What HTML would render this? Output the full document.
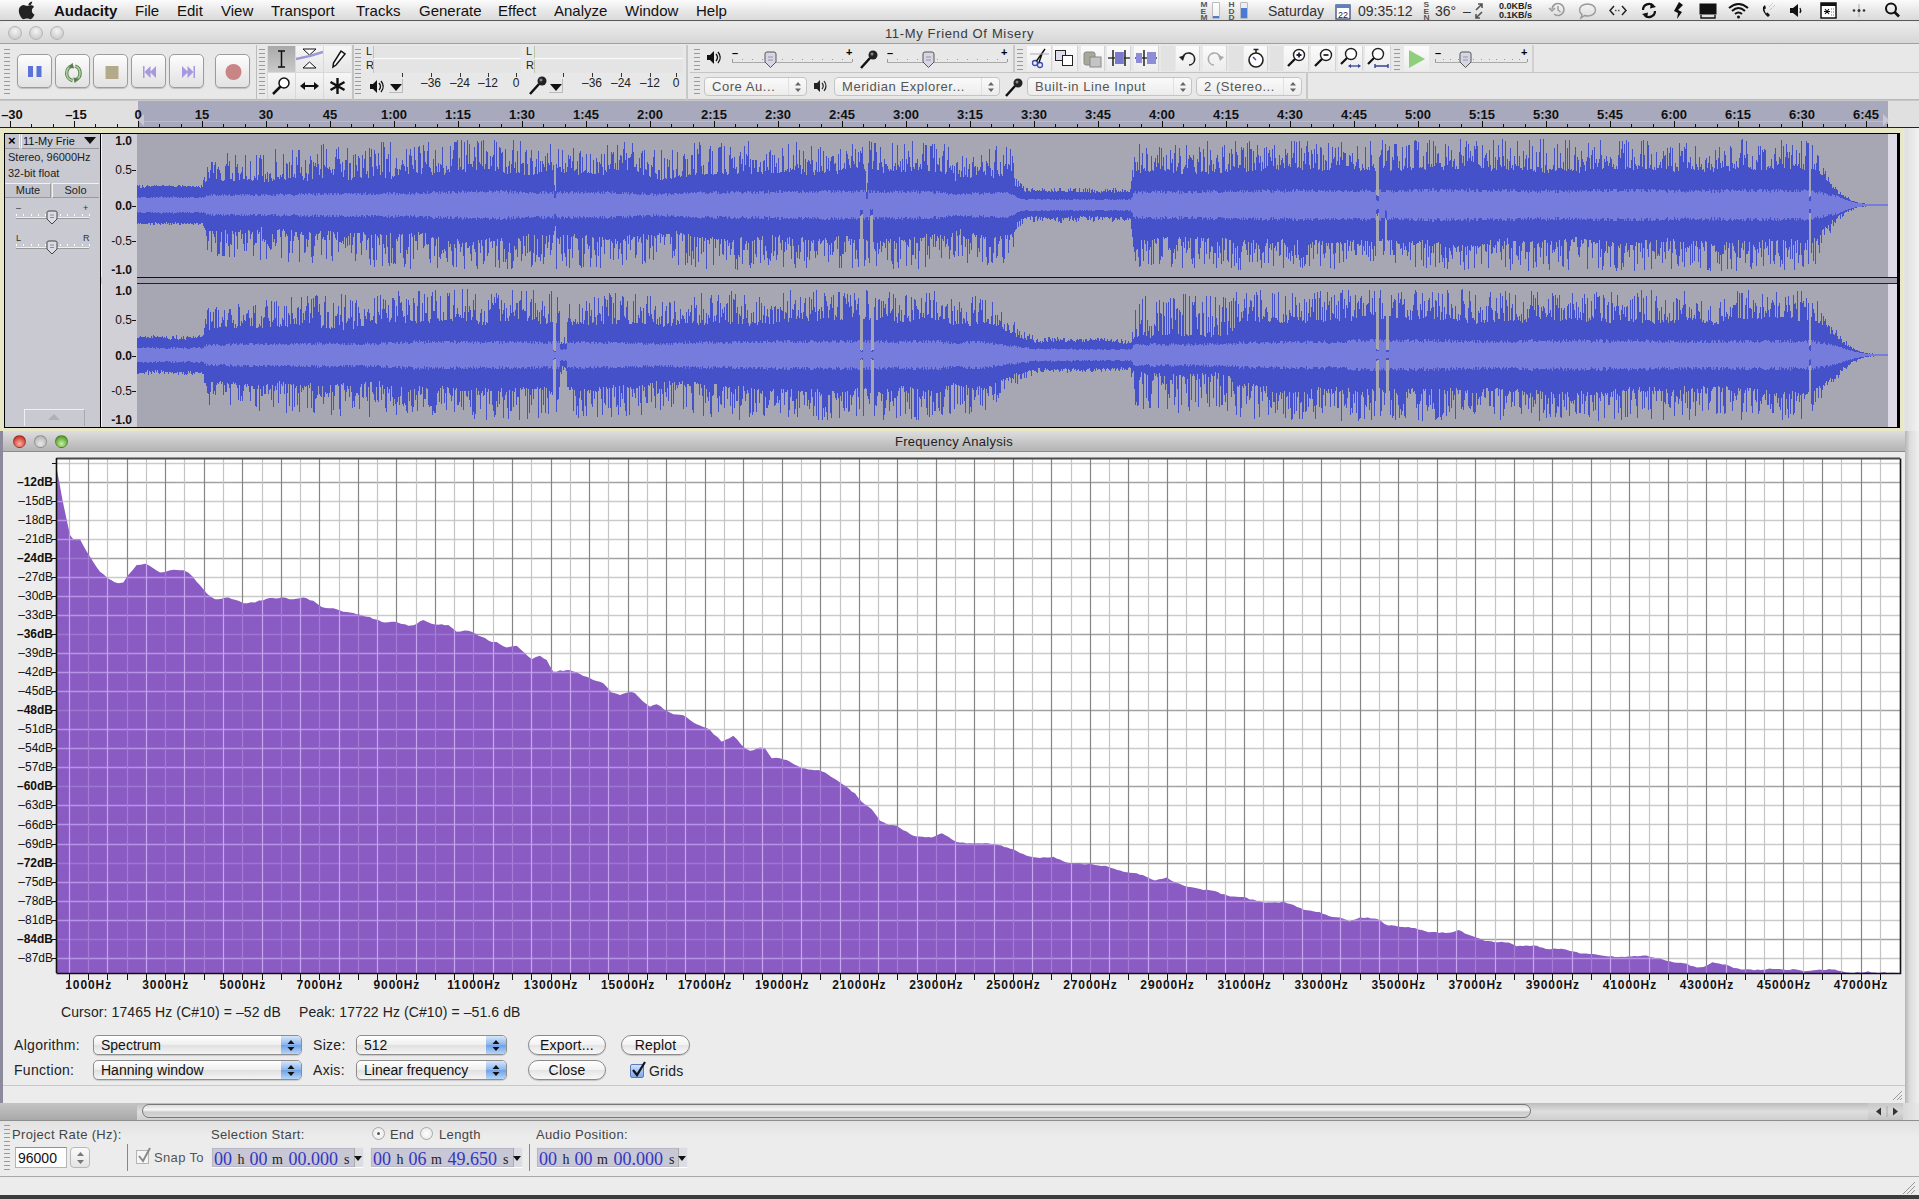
<!DOCTYPE html><html><head><meta charset="utf-8"><style>
*{margin:0;padding:0;box-sizing:border-box}
html,body{width:1919px;height:1199px;overflow:hidden;background:#e6e6e6;font-family:"Liberation Sans",sans-serif;color:#000}
.ab{position:absolute}
.t{position:absolute;white-space:nowrap;line-height:1}
</style></head><body><div class="ab" style="left:0;top:0;width:1919px;height:21px;background:linear-gradient(#fbfbfb,#e9e9e9 50%,#dadada);border-bottom:1px solid #5a5a5a"></div><div class="t" style="left:54px;top:3px;font-size:15px;font-weight:bold;color:#111">Audacity</div><div class="t" style="left:135px;top:3px;font-size:15px;color:#111">File</div><div class="t" style="left:177px;top:3px;font-size:15px;color:#111">Edit</div><div class="t" style="left:221px;top:3px;font-size:15px;color:#111">View</div><div class="t" style="left:271px;top:3px;font-size:15px;color:#111">Transport</div><div class="t" style="left:356px;top:3px;font-size:15px;color:#111">Tracks</div><div class="t" style="left:419px;top:3px;font-size:15px;color:#111">Generate</div><div class="t" style="left:498px;top:3px;font-size:15px;color:#111">Effect</div><div class="t" style="left:554px;top:3px;font-size:15px;color:#111">Analyze</div><div class="t" style="left:625px;top:3px;font-size:15px;color:#111">Window</div><div class="t" style="left:696px;top:3px;font-size:15px;color:#111">Help</div><svg class="ab" style="left:18px;top:1px" width="20" height="20"><path d="M13.2 3.2 C13.9 2.3 14.3 1.2 14.2 0.5 C13.2 0.6 12 1.2 11.3 2.1 C10.7 2.8 10.2 3.9 10.4 4.9 C11.4 4.9 12.5 4.2 13.2 3.2Z M16.5 13.4 C16.1 14.4 15.9 14.8 15.3 15.7 C14.5 16.9 13.4 18.3 12.1 18.3 C10.9 18.3 10.6 17.5 9 17.6 C7.4 17.6 7 18.3 5.8 18.3 C4.5 18.3 3.5 17 2.7 15.8 C0.5 12.5 0.3 8.6 1.6 6.5 C2.6 5 4.1 4.1 5.5 4.1 C7 4.1 7.9 4.9 9.1 4.9 C10.3 4.9 11 4.1 12.6 4.1 C13.9 4.1 15.2 4.8 16.1 6 C12.8 7.8 13.3 12.5 16.5 13.4Z" fill="#222"/></svg><div class="t" style="left:1201px;top:1.0px;font-size:7px;font-weight:bold;color:#555;transform:scaleX(1.2)">M</div><div class="t" style="left:1201px;top:7.5px;font-size:7px;font-weight:bold;color:#555;transform:scaleX(1.2)">E</div><div class="t" style="left:1201px;top:14.0px;font-size:7px;font-weight:bold;color:#555;transform:scaleX(1.2)">M</div><div class="ab" style="left:1212px;top:2px;width:8px;height:17px;border:1px solid #bbb;background:linear-gradient(#fff,#eee);border-radius:1px"><div class="ab" style="left:0;bottom:0;width:6px;height:2px;background:#4a7ad8"></div></div><div class="t" style="left:1229px;top:1.0px;font-size:7px;font-weight:bold;color:#555;transform:scaleX(1.2)">H</div><div class="t" style="left:1229px;top:7.5px;font-size:7px;font-weight:bold;color:#555;transform:scaleX(1.2)">D</div><div class="t" style="left:1229px;top:14.0px;font-size:7px;font-weight:bold;color:#555;transform:scaleX(1.2)">D</div><div class="ab" style="left:1240px;top:2px;width:8px;height:17px;border:1px solid #bbb;background:#eee;border-radius:1px"><div class="ab" style="left:0;bottom:0;width:6px;height:10px;background:#4a7ad8"></div></div><div class="t" style="left:1268px;top:4px;font-size:14px;color:#333">Saturday</div><svg class="ab" style="left:1335px;top:2px" width="16" height="18"><rect x="1" y="3" width="14" height="14" fill="#fff" stroke="#3a4a7a" stroke-width="1.3"/><rect x="1" y="3" width="14" height="3" fill="#5a80c8"/><text x="8" y="15.5" font-family="Liberation Sans" font-size="9" text-anchor="middle" fill="#223">22</text></svg><div class="t" style="left:1358px;top:4px;font-size:14px;color:#333">09:35:12</div><div class="t" style="left:1424px;top:1.0px;font-size:7px;font-weight:bold;color:#555;transform:scaleX(1.2)">S</div><div class="t" style="left:1424px;top:7.5px;font-size:7px;font-weight:bold;color:#555;transform:scaleX(1.2)">E</div><div class="t" style="left:1424px;top:14.0px;font-size:7px;font-weight:bold;color:#555;transform:scaleX(1.2)">N</div><div class="t" style="left:1435px;top:4px;font-size:14px;color:#333">36&#176;</div><div class="t" style="left:1463px;top:4px;font-size:14px;color:#333">&#8211;</div><svg class="ab" style="left:1473px;top:2px" width="12" height="18"><path d="M3 8 L9 2 M5 2 H9 V6 M9 10 L3 16 M3 12 V16 H7" stroke="#555" stroke-width="1.6" fill="none"/></svg><div class="t" style="left:1499px;top:2px;font-size:9px;font-weight:bold;color:#222;line-height:9px">0.0KB/s<br>0.1KB/s</div><svg class="ab" style="left:1548px;top:1px" width="21" height="20"><path d="M4 8 A6 6 0 1 1 6 13" stroke="#999" stroke-width="1.6" fill="none"/><path d="M1 7 L4 10 L7 7" stroke="#999" stroke-width="1.5" fill="none"/><path d="M10 5 V9 L12.5 11" stroke="#999" stroke-width="1.4" fill="none"/></svg><svg class="ab" style="left:1578px;top:1px" width="21" height="20"><path d="M9.5 3 C14 3 17.5 5.5 17.5 9 C17.5 12.5 14 15 9.5 15 C8.5 15 7.5 14.8 6.5 14.5 L3 17 L4 13.5 C2.5 12.4 1.5 10.8 1.5 9 C1.5 5.5 5 3 9.5 3Z" stroke="#999" stroke-width="1.4" fill="none"/></svg><svg class="ab" style="left:1609px;top:1px" width="21" height="20"><path d="M5 5 L1 9.5 L5 14 M13 5 L17 9.5 L13 14" stroke="#222" stroke-width="1.5" fill="none"/><path d="M6 9.5 H12" stroke="#555" stroke-width="1.3" stroke-dasharray="1.5 1.5"/></svg><svg class="ab" style="left:1640px;top:1px" width="21" height="20"><path d="M3 9 A6 6 0 0 1 13.5 5" stroke="#111" stroke-width="2.2" fill="none"/><path d="M15 10 A6 6 0 0 1 4.5 14" stroke="#111" stroke-width="2.2" fill="none"/><path d="M11 2 L16 6 L10 7.5Z M7 17 L2 13 L8 11.5Z" fill="#111"/></svg><svg class="ab" style="left:1671px;top:1px" width="21" height="20"><path d="M8 1 L12 4 L7 9 L11 11 L6 18 L7 12 L3 10Z" fill="#111"/></svg><svg class="ab" style="left:1699px;top:1px" width="21" height="20"><rect x="1" y="3" width="16" height="10" fill="#111" stroke="#111"/><path d="M2 14 V17 H16 V14" stroke="#111" stroke-width="1.4" fill="none"/></svg><svg class="ab" style="left:1728px;top:1px" width="21" height="20"><path d="M1 7 Q10.5 -1 20 7" stroke="#111" stroke-width="2" fill="none"/><path d="M4 10 Q10.5 4 17 10" stroke="#111" stroke-width="2" fill="none"/><path d="M7 13 Q10.5 10 14 13" stroke="#111" stroke-width="2" fill="none"/><circle cx="10.5" cy="16" r="1.5" fill="#111"/></svg><svg class="ab" style="left:1760px;top:1px" width="21" height="20"><path d="M3 6 Q2 11 8 16 L10 14 L7.5 11.5 L6 12.5 Q4.5 10.5 4.5 8 L6 7.5 L5 4Z" fill="#111"/><path d="M9 6 L13 2 M10 9 L15 4" stroke="#aaa" stroke-width="1" stroke-dasharray="1 1"/></svg><svg class="ab" style="left:1789px;top:1px" width="21" height="20"><path d="M1 7 H4 L9 3 V16 L4 12 H1Z" fill="#111"/><path d="M11 7 Q12.5 9.5 11 12" stroke="#111" stroke-width="1.3" fill="none"/></svg><svg class="ab" style="left:1820px;top:1px" width="21" height="20"><rect x="1" y="2" width="15" height="15" fill="#fff" stroke="#111" stroke-width="1.5"/><rect x="1" y="2" width="15" height="3" fill="#111"/><path d="M5 8 L9 13 M9 8 L5 13 M4 10.5 H10" stroke="#111" stroke-width="1.1"/><path d="M11 8 H14 M11 11 H14 M11 14 H14" stroke="#777" stroke-width="1" stroke-dasharray="1 1"/></svg><svg class="ab" style="left:1851px;top:1px" width="21" height="20"><circle cx="3" cy="9.5" r="1.3" fill="#333"/><circle cx="13" cy="9.5" r="1.3" fill="#333"/><path d="M8 3 L8 16" stroke="#aaa" stroke-width="1"/><circle cx="8" cy="9.5" r="1.5" fill="#333"/></svg><svg class="ab" style="left:1884px;top:1px" width="21" height="20"><circle cx="7" cy="7.5" r="5" stroke="#111" stroke-width="2" fill="none"/><path d="M10.5 11 L15 15.5" stroke="#111" stroke-width="2.6"/></svg><div class="ab" style="left:0;top:22px;width:1919px;height:22px;background:linear-gradient(#ececec,#d6d6d6);border-bottom:1px solid #a0a0a0;border-radius:5px 5px 0 0"></div><div class="ab" style="left:8px;top:26px;width:14px;height:14px;border-radius:50%;background:radial-gradient(circle at 50% 35%,#f4f4f4,#cfcfcf 70%);border:1px solid #b4b4b4"></div><div class="ab" style="left:29px;top:26px;width:14px;height:14px;border-radius:50%;background:radial-gradient(circle at 50% 35%,#f4f4f4,#cfcfcf 70%);border:1px solid #b4b4b4"></div><div class="ab" style="left:50px;top:26px;width:14px;height:14px;border-radius:50%;background:radial-gradient(circle at 50% 35%,#f4f4f4,#cfcfcf 70%);border:1px solid #b4b4b4"></div><div class="t" style="left:0;width:1919px;text-align:center;top:26.5px;font-size:13px;letter-spacing:0.65px;color:#3a3a3a">11-My Friend Of Misery</div><div class="ab" style="left:0;top:44px;width:1919px;height:56px;background:#e8e8e8;border-bottom:1px solid #b8b8b8"></div><div class="ab" style="left:4px;top:49px;width:6px;height:1px;background:#9a9a9a"></div><div class="ab" style="left:4px;top:53px;width:6px;height:1px;background:#9a9a9a"></div><div class="ab" style="left:4px;top:57px;width:6px;height:1px;background:#9a9a9a"></div><div class="ab" style="left:4px;top:61px;width:6px;height:1px;background:#9a9a9a"></div><div class="ab" style="left:4px;top:65px;width:6px;height:1px;background:#9a9a9a"></div><div class="ab" style="left:4px;top:69px;width:6px;height:1px;background:#9a9a9a"></div><div class="ab" style="left:4px;top:73px;width:6px;height:1px;background:#9a9a9a"></div><div class="ab" style="left:4px;top:77px;width:6px;height:1px;background:#9a9a9a"></div><div class="ab" style="left:4px;top:81px;width:6px;height:1px;background:#9a9a9a"></div><div class="ab" style="left:4px;top:85px;width:6px;height:1px;background:#9a9a9a"></div><div class="ab" style="left:4px;top:89px;width:6px;height:1px;background:#9a9a9a"></div><div class="ab" style="left:4px;top:93px;width:6px;height:1px;background:#9a9a9a"></div><div class="ab" style="left:256px;top:45px;width:1px;height:55px;background:#bdbdbd"></div><div class="ab" style="left:17px;top:54px;width:35px;height:34px;border-radius:5px;background:linear-gradient(#fdfdfd,#ececec 60%,#e2e2e2);border:1px solid #9c9c9c;box-shadow:0 1px 1px rgba(0,0,0,.18)"><svg width="35" height="34" style="position:absolute;left:0;top:0"><rect x="10" y="11" width="5" height="11" fill="#5b73d8"/><rect x="18.5" y="11" width="5" height="11" fill="#5b73d8"/></svg></div><div class="ab" style="left:55px;top:54px;width:35px;height:34px;border-radius:5px;background:linear-gradient(#fdfdfd,#ececec 60%,#e2e2e2);border:1px solid #9c9c9c;box-shadow:0 1px 1px rgba(0,0,0,.18)"><svg width="35" height="34" style="position:absolute;left:0;top:0"><g fill="none" stroke-linecap="butt"><path d="M16.5 25.5 A7.5 7.5 0 0 1 16 11" stroke="#5a7a52" stroke-width="3.4"/><path d="M19 11 A7.5 7.5 0 0 1 19.5 25" stroke="#5a7a52" stroke-width="3.4"/><path d="M16.5 25.5 A7.5 7.5 0 0 1 16 11" stroke="#a9d49a" stroke-width="1.6"/><path d="M19 11 A7.5 7.5 0 0 1 19.5 25" stroke="#a9d49a" stroke-width="1.6"/></g><path d="M12.8 12.5 L16.5 7.8 L18 13.5Z" fill="#5a7a52"/><path d="M22.5 23.5 L18.8 28.2 L17.2 22.5Z" fill="#5a7a52"/></svg></div><div class="ab" style="left:93px;top:54px;width:35px;height:34px;border-radius:5px;background:linear-gradient(#fdfdfd,#ececec 60%,#e2e2e2);border:1px solid #9c9c9c;box-shadow:0 1px 1px rgba(0,0,0,.18)"><svg width="35" height="34" style="position:absolute;left:0;top:0"><rect x="11.5" y="11" width="13" height="13" fill="#b3aa8a"/></svg></div><div class="ab" style="left:131px;top:54px;width:35px;height:34px;border-radius:5px;background:linear-gradient(#fdfdfd,#ececec 60%,#e2e2e2);border:1px solid #9c9c9c;box-shadow:0 1px 1px rgba(0,0,0,.18)"><svg width="35" height="34" style="position:absolute;left:0;top:0"><rect x="11" y="11" width="1.5" height="12" fill="#a898e0"/><path d="M12.5 17 L18.5 11 V23Z M18 17 L24 11 V23Z" fill="#a898e0"/></svg></div><div class="ab" style="left:169px;top:54px;width:35px;height:34px;border-radius:5px;background:linear-gradient(#fdfdfd,#ececec 60%,#e2e2e2);border:1px solid #9c9c9c;box-shadow:0 1px 1px rgba(0,0,0,.18)"><svg width="35" height="34" style="position:absolute;left:0;top:0"><rect x="23.5" y="11" width="1.5" height="12" fill="#a898e0"/><path d="M23.5 17 L17.5 11 V23Z M18 17 L12 11 V23Z" fill="#a898e0"/></svg></div><div class="ab" style="left:215px;top:54px;width:35px;height:34px;border-radius:5px;background:linear-gradient(#fdfdfd,#ececec 60%,#e2e2e2);border:1px solid #9c9c9c;box-shadow:0 1px 1px rgba(0,0,0,.18)"><svg width="35" height="34" style="position:absolute;left:0;top:0"><circle cx="17.5" cy="17" r="8" fill="#c98585"/></svg></div><div class="ab" style="left:259px;top:49px;width:6px;height:1px;background:#9a9a9a"></div><div class="ab" style="left:259px;top:53px;width:6px;height:1px;background:#9a9a9a"></div><div class="ab" style="left:259px;top:57px;width:6px;height:1px;background:#9a9a9a"></div><div class="ab" style="left:259px;top:61px;width:6px;height:1px;background:#9a9a9a"></div><div class="ab" style="left:259px;top:65px;width:6px;height:1px;background:#9a9a9a"></div><div class="ab" style="left:259px;top:69px;width:6px;height:1px;background:#9a9a9a"></div><div class="ab" style="left:259px;top:73px;width:6px;height:1px;background:#9a9a9a"></div><div class="ab" style="left:259px;top:77px;width:6px;height:1px;background:#9a9a9a"></div><div class="ab" style="left:259px;top:81px;width:6px;height:1px;background:#9a9a9a"></div><div class="ab" style="left:259px;top:85px;width:6px;height:1px;background:#9a9a9a"></div><div class="ab" style="left:259px;top:89px;width:6px;height:1px;background:#9a9a9a"></div><div class="ab" style="left:259px;top:93px;width:6px;height:1px;background:#9a9a9a"></div><div class="ab" style="left:267px;top:46px;width:84px;height:53px;background:#d9d9d9"></div><div class="ab" style="left:268px;top:46px;width:27px;height:26px;background:linear-gradient(#a9a9a9,#c9c9c9)"><svg width="27" height="26"><path d="M10 5 H17 M13.5 5 V21 M10 21 H17" stroke="#111" stroke-width="1.5" fill="none"/></svg></div><div class="ab" style="left:296px;top:46px;width:27px;height:26px;background:linear-gradient(#f6f6f6,#e6e6e6)"><svg width="27" height="26"><path d="M7 3 H20 L13.5 9Z M7 22 H20 L13.5 16Z" stroke="#111" stroke-width="1" fill="#fff"/><path d="M0 13 Q13 11 27 6" stroke="#9a98d8" stroke-width="2.5" fill="none"/></svg></div><div class="ab" style="left:324px;top:46px;width:27px;height:26px;background:linear-gradient(#f6f6f6,#e6e6e6)"><svg width="27" height="26"><path d="M17 5 L21 8 L12 19 L9 21 L9.5 17Z" stroke="#111" stroke-width="1.5" fill="#fff"/></svg></div><div class="ab" style="left:268px;top:73px;width:27px;height:26px;background:linear-gradient(#f6f6f6,#e6e6e6)"><svg width="27" height="26"><circle cx="16" cy="10" r="5" stroke="#111" stroke-width="1.5" fill="#fff"/><path d="M12.5 13.5 L5 21" stroke="#111" stroke-width="2.5"/></svg></div><div class="ab" style="left:296px;top:73px;width:27px;height:26px;background:linear-gradient(#f6f6f6,#e6e6e6)"><svg width="27" height="26"><path d="M6 13 H21" stroke="#111" stroke-width="2"/><path d="M4 13 L9 9 V17Z M23 13 L18 9 V17Z" fill="#111"/></svg></div><div class="ab" style="left:324px;top:73px;width:27px;height:26px;background:linear-gradient(#f6f6f6,#e6e6e6)"><svg width="27" height="26"><path d="M13.5 5 V21 M6.5 9 L20.5 17 M20.5 9 L6.5 17" stroke="#111" stroke-width="2.4"/></svg></div><div class="ab" style="left:352px;top:45px;width:2px;height:55px;background:#c4c4c4"></div><div class="ab" style="left:355px;top:49px;width:6px;height:1px;background:#9a9a9a"></div><div class="ab" style="left:355px;top:53px;width:6px;height:1px;background:#9a9a9a"></div><div class="ab" style="left:355px;top:57px;width:6px;height:1px;background:#9a9a9a"></div><div class="ab" style="left:355px;top:61px;width:6px;height:1px;background:#9a9a9a"></div><div class="ab" style="left:355px;top:65px;width:6px;height:1px;background:#9a9a9a"></div><div class="ab" style="left:355px;top:69px;width:6px;height:1px;background:#9a9a9a"></div><div class="ab" style="left:355px;top:73px;width:6px;height:1px;background:#9a9a9a"></div><div class="ab" style="left:355px;top:77px;width:6px;height:1px;background:#9a9a9a"></div><div class="ab" style="left:355px;top:81px;width:6px;height:1px;background:#9a9a9a"></div><div class="ab" style="left:355px;top:85px;width:6px;height:1px;background:#9a9a9a"></div><div class="ab" style="left:355px;top:89px;width:6px;height:1px;background:#9a9a9a"></div><div class="ab" style="left:355px;top:93px;width:6px;height:1px;background:#9a9a9a"></div><div class="t" style="left:366px;top:46px;font-size:11px;color:#222">L</div><div class="t" style="left:366px;top:60px;font-size:11px;color:#222">R</div><div class="ab" style="left:373px;top:46px;width:148px;height:13px;background:#e4e4e4;border-left:1px solid #b8c8a8;border-bottom:1px solid #fafafa"></div><div class="ab" style="left:373px;top:60px;width:148px;height:13px;background:#e4e4e4;border-left:1px solid #b8c8a8"></div><div class="ab" style="left:431px;top:73px;width:1px;height:4px;background:#333"></div><div class="t" style="left:411px;width:40px;text-align:center;top:77px;font-size:12px;color:#222">&#8211;36</div><div class="ab" style="left:460px;top:73px;width:1px;height:4px;background:#333"></div><div class="t" style="left:440px;width:40px;text-align:center;top:77px;font-size:12px;color:#222">&#8211;24</div><div class="ab" style="left:488px;top:73px;width:1px;height:4px;background:#333"></div><div class="t" style="left:468px;width:40px;text-align:center;top:77px;font-size:12px;color:#222">&#8211;12</div><div class="ab" style="left:516px;top:73px;width:1px;height:4px;background:#333"></div><div class="t" style="left:496px;width:40px;text-align:center;top:77px;font-size:12px;color:#222">0</div><div class="ab" style="left:402px;top:73px;width:1px;height:4px;background:#333"></div><div class="t" style="left:526px;top:46px;font-size:11px;color:#222">L</div><div class="t" style="left:526px;top:60px;font-size:11px;color:#222">R</div><div class="ab" style="left:534px;top:46px;width:149px;height:13px;background:#e4e4e4;border-left:1px solid #b8c8a8;border-bottom:1px solid #fafafa"></div><div class="ab" style="left:534px;top:60px;width:149px;height:13px;background:#e4e4e4;border-left:1px solid #b8c8a8"></div><div class="ab" style="left:592px;top:73px;width:1px;height:4px;background:#333"></div><div class="t" style="left:572px;width:40px;text-align:center;top:77px;font-size:12px;color:#222">&#8211;36</div><div class="ab" style="left:621px;top:73px;width:1px;height:4px;background:#333"></div><div class="t" style="left:601px;width:40px;text-align:center;top:77px;font-size:12px;color:#222">&#8211;24</div><div class="ab" style="left:650px;top:73px;width:1px;height:4px;background:#333"></div><div class="t" style="left:630px;width:40px;text-align:center;top:77px;font-size:12px;color:#222">&#8211;12</div><div class="ab" style="left:676px;top:73px;width:1px;height:4px;background:#333"></div><div class="t" style="left:656px;width:40px;text-align:center;top:77px;font-size:12px;color:#222">0</div><div class="ab" style="left:563px;top:73px;width:1px;height:4px;background:#333"></div><svg class="ab" style="left:368px;top:78px" width="20" height="18"><path d="M2 6 H5 L9 2 V15 L5 11 H2Z" fill="#111"/><path d="M11 5 Q14 8.5 11 12 M13 3 Q17.5 8.5 13 14" stroke="#111" stroke-width="1.3" fill="none"/></svg><div class="ab" style="left:389px;top:79px;width:14px;height:14px;border-right:1px solid #bbb;border-bottom:1px solid #bbb"></div><svg class="ab" style="left:390px;top:84px" width="12" height="8"><path d="M0 0 H12 L6 7Z" fill="#111"/></svg><svg class="ab" style="left:527px;top:74px" width="22" height="22"><circle cx="15" cy="7" r="4.5" fill="#222"/><circle cx="14" cy="6" r="1.5" fill="#888"/><path d="M12 10 L3 20" stroke="#111" stroke-width="2.5"/></svg><div class="ab" style="left:549px;top:79px;width:14px;height:14px;border-right:1px solid #bbb;border-bottom:1px solid #bbb"></div><svg class="ab" style="left:550px;top:84px" width="12" height="8"><path d="M0 0 H12 L6 7Z" fill="#111"/></svg><div class="ab" style="left:686px;top:45px;width:2px;height:55px;background:#c8c8c8"></div><div class="ab" style="left:694px;top:49px;width:6px;height:1px;background:#9a9a9a"></div><div class="ab" style="left:694px;top:53px;width:6px;height:1px;background:#9a9a9a"></div><div class="ab" style="left:694px;top:57px;width:6px;height:1px;background:#9a9a9a"></div><div class="ab" style="left:694px;top:61px;width:6px;height:1px;background:#9a9a9a"></div><div class="ab" style="left:694px;top:65px;width:6px;height:1px;background:#9a9a9a"></div><div class="ab" style="left:694px;top:69px;width:6px;height:1px;background:#9a9a9a"></div><div class="ab" style="left:690px;top:72px;width:1229px;height:1px;background:#c4c4c4"></div><svg class="ab" style="left:705px;top:49px" width="20" height="18"><path d="M2 6 H5 L9 2 V15 L5 11 H2Z" fill="#111"/><path d="M11 5 Q14 8.5 11 12 M13 3 Q17.5 8.5 13 14" stroke="#111" stroke-width="1.3" fill="none"/></svg><div class="ab" style="left:732px;top:62px;width:120px;height:1px;background:#aaa"></div><div class="ab" style="left:732.0px;top:59px;width:1px;height:3px;background:#999"></div><div class="ab" style="left:742.0px;top:59px;width:1px;height:1px;background:#999"></div><div class="ab" style="left:752.0px;top:59px;width:1px;height:1px;background:#999"></div><div class="ab" style="left:762.0px;top:59px;width:1px;height:1px;background:#999"></div><div class="ab" style="left:772.0px;top:59px;width:1px;height:1px;background:#999"></div><div class="ab" style="left:782.0px;top:59px;width:1px;height:1px;background:#999"></div><div class="ab" style="left:792.0px;top:59px;width:1px;height:1px;background:#999"></div><div class="ab" style="left:802.0px;top:59px;width:1px;height:1px;background:#999"></div><div class="ab" style="left:812.0px;top:59px;width:1px;height:1px;background:#999"></div><div class="ab" style="left:822.0px;top:59px;width:1px;height:1px;background:#999"></div><div class="ab" style="left:832.0px;top:59px;width:1px;height:1px;background:#999"></div><div class="ab" style="left:842.0px;top:59px;width:1px;height:1px;background:#999"></div><div class="ab" style="left:852.0px;top:59px;width:1px;height:3px;background:#999"></div><div class="t" style="left:732px;top:48px;font-size:11px;font-weight:bold">&#8211;</div><div class="t" style="left:846px;top:47px;font-size:11px;font-weight:bold">+</div><svg class="ab" style="left:764px;top:51px" width="13" height="18"><path d="M1 3 Q1 1 3 1 H10 Q12 1 12 3 V11 L6.5 16.5 L1 11Z" fill="#d6d6e6" stroke="#555" stroke-width="1"/><path d="M4 6 H9 M4 9 H9" stroke="#888" stroke-width=".8"/></svg><svg class="ab" style="left:858px;top:48px" width="22" height="22"><circle cx="15" cy="7" r="4.5" fill="#222"/><circle cx="14" cy="6" r="1.5" fill="#888"/><path d="M12 10 L3 20" stroke="#111" stroke-width="2.5"/></svg><div class="ab" style="left:887px;top:62px;width:120px;height:1px;background:#aaa"></div><div class="ab" style="left:887.0px;top:59px;width:1px;height:3px;background:#999"></div><div class="ab" style="left:897.0px;top:59px;width:1px;height:1px;background:#999"></div><div class="ab" style="left:907.0px;top:59px;width:1px;height:1px;background:#999"></div><div class="ab" style="left:917.0px;top:59px;width:1px;height:1px;background:#999"></div><div class="ab" style="left:927.0px;top:59px;width:1px;height:1px;background:#999"></div><div class="ab" style="left:937.0px;top:59px;width:1px;height:1px;background:#999"></div><div class="ab" style="left:947.0px;top:59px;width:1px;height:1px;background:#999"></div><div class="ab" style="left:957.0px;top:59px;width:1px;height:1px;background:#999"></div><div class="ab" style="left:967.0px;top:59px;width:1px;height:1px;background:#999"></div><div class="ab" style="left:977.0px;top:59px;width:1px;height:1px;background:#999"></div><div class="ab" style="left:987.0px;top:59px;width:1px;height:1px;background:#999"></div><div class="ab" style="left:997.0px;top:59px;width:1px;height:1px;background:#999"></div><div class="ab" style="left:1007.0px;top:59px;width:1px;height:3px;background:#999"></div><div class="t" style="left:887px;top:48px;font-size:11px;font-weight:bold">&#8211;</div><div class="t" style="left:1001px;top:47px;font-size:11px;font-weight:bold">+</div><svg class="ab" style="left:922px;top:51px" width="13" height="18"><path d="M1 3 Q1 1 3 1 H10 Q12 1 12 3 V11 L6.5 16.5 L1 11Z" fill="#d6d6e6" stroke="#555" stroke-width="1"/><path d="M4 6 H9 M4 9 H9" stroke="#888" stroke-width=".8"/></svg><div class="ab" style="left:1013px;top:45px;width:2px;height:27px;background:#c8c8c8"></div><div class="ab" style="left:694px;top:77px;width:6px;height:1px;background:#9a9a9a"></div><div class="ab" style="left:694px;top:81px;width:6px;height:1px;background:#9a9a9a"></div><div class="ab" style="left:694px;top:85px;width:6px;height:1px;background:#9a9a9a"></div><div class="ab" style="left:694px;top:89px;width:6px;height:1px;background:#9a9a9a"></div><div class="ab" style="left:694px;top:93px;width:6px;height:1px;background:#9a9a9a"></div><div class="ab" style="left:704px;top:77px;width:103px;height:19px;border-radius:4px;border:1px solid #c4c4c4;background:linear-gradient(#fafafa,#ececec)"><div class="t" style="left:7px;top:2px;font-size:13px;letter-spacing:0.55px;color:#555">Core Au...</div><div class="ab" style="right:17px;top:0;width:1px;height:17px;background:#e0e0e0"></div><svg class="ab" style="right:4px;top:3px" width="8" height="12"><path d="M1 4.5 L4 1 L7 4.5Z M1 7.5 L4 11 L7 7.5Z" fill="#666"/></svg></div><svg class="ab" style="left:812px;top:78px" width="18" height="16"><path d="M2 5 H5 L8 2 V14 L5 11 H2Z" fill="#222"/><path d="M10 5 Q12.5 8 10 11 M12 3 Q16 8 12 13" stroke="#222" stroke-width="1.2" fill="none"/></svg><div class="ab" style="left:834px;top:77px;width:166px;height:19px;border-radius:4px;border:1px solid #c4c4c4;background:linear-gradient(#fafafa,#ececec)"><div class="t" style="left:7px;top:2px;font-size:13px;letter-spacing:0.55px;color:#555">Meridian Explorer...</div><div class="ab" style="right:17px;top:0;width:1px;height:17px;background:#e0e0e0"></div><svg class="ab" style="right:4px;top:3px" width="8" height="12"><path d="M1 4.5 L4 1 L7 4.5Z M1 7.5 L4 11 L7 7.5Z" fill="#666"/></svg></div><svg class="ab" style="left:1003px;top:76px" width="22" height="22"><circle cx="15" cy="7" r="4.5" fill="#222"/><circle cx="14" cy="6" r="1.5" fill="#888"/><path d="M12 10 L3 20" stroke="#111" stroke-width="2.5"/></svg><div class="ab" style="left:1027px;top:77px;width:165px;height:19px;border-radius:4px;border:1px solid #c4c4c4;background:linear-gradient(#fafafa,#ececec)"><div class="t" style="left:7px;top:2px;font-size:13px;letter-spacing:0.55px;color:#555">Built-in Line Input</div><div class="ab" style="right:17px;top:0;width:1px;height:17px;background:#e0e0e0"></div><svg class="ab" style="right:4px;top:3px" width="8" height="12"><path d="M1 4.5 L4 1 L7 4.5Z M1 7.5 L4 11 L7 7.5Z" fill="#666"/></svg></div><div class="ab" style="left:1196px;top:77px;width:106px;height:19px;border-radius:4px;border:1px solid #c4c4c4;background:linear-gradient(#fafafa,#ececec)"><div class="t" style="left:7px;top:2px;font-size:13px;letter-spacing:0.55px;color:#555">2 (Stereo...</div><div class="ab" style="right:17px;top:0;width:1px;height:17px;background:#e0e0e0"></div><svg class="ab" style="right:4px;top:3px" width="8" height="12"><path d="M1 4.5 L4 1 L7 4.5Z M1 7.5 L4 11 L7 7.5Z" fill="#666"/></svg></div><div class="ab" style="left:1306px;top:72px;width:2px;height:28px;background:#c8c8c8"></div><div class="ab" style="left:1017px;top:49px;width:6px;height:1px;background:#9a9a9a"></div><div class="ab" style="left:1017px;top:53px;width:6px;height:1px;background:#9a9a9a"></div><div class="ab" style="left:1017px;top:57px;width:6px;height:1px;background:#9a9a9a"></div><div class="ab" style="left:1017px;top:61px;width:6px;height:1px;background:#9a9a9a"></div><div class="ab" style="left:1017px;top:65px;width:6px;height:1px;background:#9a9a9a"></div><div class="ab" style="left:1017px;top:69px;width:6px;height:1px;background:#9a9a9a"></div><div class="ab" style="left:1027px;top:46px;width:25px;height:25px;background:linear-gradient(#fbfbfb,#ececec);border-right:1px solid #d4d4d4"><svg width="25" height="24"><circle cx="8" cy="17" r="2.5" stroke="#3a4ab8" stroke-width="1.3" fill="none"/><circle cx="13" cy="19" r="2.5" stroke="#3a4ab8" stroke-width="1.3" fill="none"/><path d="M9.5 15 L18 3 M12 16.5 L15 8" stroke="#111" stroke-width="1.4"/><path d="M3 8 H22" stroke="#aaa" stroke-width="1"/></svg></div><div class="ab" style="left:1053px;top:46px;width:25px;height:25px;background:linear-gradient(#fbfbfb,#ececec);border-right:1px solid #d4d4d4"><svg width="25" height="24"><rect x="2.5" y="4.5" width="10" height="10" fill="#dde" stroke="#222"/><rect x="9.5" y="9.5" width="10" height="10" fill="#fff" stroke="#222"/></svg></div><div class="ab" style="left:1081px;top:46px;width:24px;height:25px;background:linear-gradient(#fbfbfb,#ececec);border-right:1px solid #d4d4d4"><svg width="25" height="24"><rect x="3" y="6" width="11" height="13" rx="2" fill="#a8a898" stroke="#888"/><rect x="9" y="11" width="11" height="10" fill="#c4c4c4" stroke="#888"/></svg></div><div class="ab" style="left:1107px;top:46px;width:24px;height:25px;background:linear-gradient(#fbfbfb,#ececec);border-right:1px solid #d4d4d4"><svg width="25" height="24"><path d="M1 12 H23" stroke="#222" stroke-width="1.3"/><path d="M6 4 V20 M18 4 V20" stroke="#222" stroke-width="1.5"/><rect x="8" y="6" width="9" height="12" fill="#8e8ed8"/><path d="M9 6 V18 M11 6 V18 M13 6 V18 M15 6 V18" stroke="#5a5ac0" stroke-width=".8"/></svg></div><div class="ab" style="left:1134px;top:46px;width:25px;height:25px;background:linear-gradient(#fbfbfb,#ececec);border-right:1px solid #d4d4d4"><svg width="25" height="24"><path d="M1 12 H23" stroke="#222" stroke-width="1.3"/><path d="M10 4 V20" stroke="#222" stroke-width="1.5"/><rect x="2" y="7" width="6" height="10" fill="#8e8ed8"/><rect x="13" y="6" width="9" height="12" fill="#8e8ed8"/></svg></div><div class="ab" style="left:1176px;top:46px;width:24px;height:25px;background:linear-gradient(#fbfbfb,#ececec);border-right:1px solid #d4d4d4"><svg width="24" height="24"><path d="M7 11 A6 6 0 1 1 13 19" stroke="#222" stroke-width="1.6" fill="none"/><path d="M3 11 L9 9 L7 15Z" fill="#222"/></svg></div><div class="ab" style="left:1203px;top:46px;width:24px;height:25px;background:linear-gradient(#fbfbfb,#ececec);border-right:1px solid #d4d4d4"><svg width="24" height="24"><path d="M17 11 A6 6 0 1 0 11 19" stroke="#aaa" stroke-width="1.6" fill="none"/><path d="M21 11 L15 9 L17 15Z" fill="#aaa"/></svg></div><div class="ab" style="left:1244px;top:46px;width:24px;height:25px;background:linear-gradient(#fbfbfb,#ececec);border-right:1px solid #d4d4d4"><svg width="24" height="24"><circle cx="12" cy="14" r="7" stroke="#222" stroke-width="1.6" fill="#fff"/><path d="M12 4 V7 M9.5 3.5 H14.5" stroke="#222" stroke-width="1.5"/><path d="M12 14 L9 11" stroke="#3a4ab8" stroke-width="1.5"/></svg></div><div class="ab" style="left:1284px;top:46px;width:25px;height:25px;background:linear-gradient(#fbfbfb,#ececec);border-right:1px solid #d4d4d4"><svg width="25" height="24"><circle cx="15" cy="9" r="5.5" stroke="#222" stroke-width="1.4" fill="#fff"/><path d="M12.5 9 H17.5 M15 6.5 V11.5" stroke="#223" stroke-width="1.8"/><path d="M11 13 L4 20" stroke="#111" stroke-width="2.3"/></svg></div><div class="ab" style="left:1311px;top:46px;width:25px;height:25px;background:linear-gradient(#fbfbfb,#ececec);border-right:1px solid #d4d4d4"><svg width="25" height="24"><circle cx="15" cy="9" r="5.5" stroke="#222" stroke-width="1.4" fill="#fff"/><path d="M12.5 9 H17.5" stroke="#223" stroke-width="1.8"/><path d="M11 13 L4 20" stroke="#111" stroke-width="2.3"/></svg></div><div class="ab" style="left:1338px;top:46px;width:25px;height:25px;background:linear-gradient(#fbfbfb,#ececec);border-right:1px solid #d4d4d4"><svg width="25" height="24"><circle cx="13" cy="8" r="5.5" stroke="#222" stroke-width="1.4" fill="#fff"/><path d="M9 12 L3 18" stroke="#111" stroke-width="2.2"/><path d="M12 20 H21" stroke="#334499" stroke-width="1.3"/><path d="M10 20 L13 18 V22Z M23 20 L20 18 V22Z" fill="#334499"/></svg></div><div class="ab" style="left:1365px;top:46px;width:26px;height:25px;background:linear-gradient(#fbfbfb,#ececec);border-right:1px solid #d4d4d4"><svg width="25" height="24"><circle cx="13" cy="8" r="5.5" stroke="#222" stroke-width="1.4" fill="#fff"/><path d="M9 12 L3 18" stroke="#111" stroke-width="2.2"/><path d="M10 20 H23 M10 18 V22 M23 18 V22" stroke="#334499" stroke-width="1.4"/></svg></div><div class="ab" style="left:1161px;top:46px;width:14px;height:25px;background:#e2e2e2"></div><div class="ab" style="left:1229px;top:46px;width:14px;height:25px;background:#e2e2e2"></div><div class="ab" style="left:1270px;top:46px;width:13px;height:25px;background:#e2e2e2"></div><div class="ab" style="left:1394px;top:49px;width:6px;height:1px;background:#9a9a9a"></div><div class="ab" style="left:1394px;top:53px;width:6px;height:1px;background:#9a9a9a"></div><div class="ab" style="left:1394px;top:57px;width:6px;height:1px;background:#9a9a9a"></div><div class="ab" style="left:1394px;top:61px;width:6px;height:1px;background:#9a9a9a"></div><div class="ab" style="left:1394px;top:65px;width:6px;height:1px;background:#9a9a9a"></div><div class="ab" style="left:1394px;top:69px;width:6px;height:1px;background:#9a9a9a"></div><div class="ab" style="left:1404px;top:46px;width:25px;height:25px;background:linear-gradient(#fbfbfb,#ececec)"><svg width="25" height="25"><path d="M5 4 L21 13 L5 22Z" fill="#8fcf7c"/></svg></div><div class="ab" style="left:1435px;top:62px;width:92px;height:1px;background:#aaa"></div><div class="ab" style="left:1435.0px;top:59px;width:1px;height:3px;background:#999"></div><div class="ab" style="left:1442.7px;top:59px;width:1px;height:1px;background:#999"></div><div class="ab" style="left:1450.3px;top:59px;width:1px;height:1px;background:#999"></div><div class="ab" style="left:1458.0px;top:59px;width:1px;height:1px;background:#999"></div><div class="ab" style="left:1465.7px;top:59px;width:1px;height:1px;background:#999"></div><div class="ab" style="left:1473.3px;top:59px;width:1px;height:1px;background:#999"></div><div class="ab" style="left:1481.0px;top:59px;width:1px;height:1px;background:#999"></div><div class="ab" style="left:1488.7px;top:59px;width:1px;height:1px;background:#999"></div><div class="ab" style="left:1496.3px;top:59px;width:1px;height:1px;background:#999"></div><div class="ab" style="left:1504.0px;top:59px;width:1px;height:1px;background:#999"></div><div class="ab" style="left:1511.7px;top:59px;width:1px;height:1px;background:#999"></div><div class="ab" style="left:1519.3px;top:59px;width:1px;height:1px;background:#999"></div><div class="ab" style="left:1527.0px;top:59px;width:1px;height:3px;background:#999"></div><div class="t" style="left:1435px;top:48px;font-size:11px;font-weight:bold">&#8211;</div><div class="t" style="left:1521px;top:47px;font-size:11px;font-weight:bold">+</div><svg class="ab" style="left:1459px;top:51px" width="13" height="18"><path d="M1 3 Q1 1 3 1 H10 Q12 1 12 3 V11 L6.5 16.5 L1 11Z" fill="#d6d6e6" stroke="#555" stroke-width="1"/><path d="M4 6 H9 M4 9 H9" stroke="#888" stroke-width=".8"/></svg><div class="ab" style="left:1532px;top:45px;width:2px;height:27px;background:#d0d0d0"></div><div class="ab" style="left:0px;top:72px;width:690px;height:0px"></div><div class="ab" style="left:0;top:100px;width:1919px;height:28px;background:#e0e0e0;border-top:1px solid #c8c8c8"></div><div class="ab" style="left:138px;top:101px;width:1750px;height:26px;background:#a9a9bd"></div><div class="ab" style="left:138px;top:121px;width:1750px;height:1px;background:#bdbdcf"></div><div class="ab" style="left:0;top:127px;width:1919px;height:1px;background:#222"></div><div class="t" style="left:-18px;width:60px;text-align:center;top:108px;font-size:13px;font-weight:bold;color:#111">&#8211;30</div><div class="ab" style="left:10px;top:121px;width:1px;height:6px;background:#111"></div><div class="ab" style="left:31px;top:124px;width:1px;height:3px;background:#111"></div><div class="ab" style="left:53px;top:124px;width:1px;height:3px;background:#111"></div><div class="t" style="left:46px;width:60px;text-align:center;top:108px;font-size:13px;font-weight:bold;color:#111">&#8211;15</div><div class="ab" style="left:74px;top:121px;width:1px;height:6px;background:#111"></div><div class="ab" style="left:95px;top:124px;width:1px;height:3px;background:#111"></div><div class="ab" style="left:117px;top:124px;width:1px;height:3px;background:#111"></div><div class="t" style="left:108px;width:60px;text-align:center;top:108px;font-size:13px;font-weight:bold;color:#111">0</div><div class="ab" style="left:138px;top:121px;width:1px;height:6px;background:#111"></div><div class="ab" style="left:159px;top:124px;width:1px;height:3px;background:#111"></div><div class="ab" style="left:181px;top:124px;width:1px;height:3px;background:#111"></div><div class="t" style="left:172px;width:60px;text-align:center;top:108px;font-size:13px;font-weight:bold;color:#111">15</div><div class="ab" style="left:202px;top:121px;width:1px;height:6px;background:#111"></div><div class="ab" style="left:223px;top:124px;width:1px;height:3px;background:#111"></div><div class="ab" style="left:245px;top:124px;width:1px;height:3px;background:#111"></div><div class="t" style="left:236px;width:60px;text-align:center;top:108px;font-size:13px;font-weight:bold;color:#111">30</div><div class="ab" style="left:266px;top:121px;width:1px;height:6px;background:#111"></div><div class="ab" style="left:287px;top:124px;width:1px;height:3px;background:#111"></div><div class="ab" style="left:309px;top:124px;width:1px;height:3px;background:#111"></div><div class="t" style="left:300px;width:60px;text-align:center;top:108px;font-size:13px;font-weight:bold;color:#111">45</div><div class="ab" style="left:330px;top:121px;width:1px;height:6px;background:#111"></div><div class="ab" style="left:351px;top:124px;width:1px;height:3px;background:#111"></div><div class="ab" style="left:373px;top:124px;width:1px;height:3px;background:#111"></div><div class="t" style="left:364px;width:60px;text-align:center;top:108px;font-size:13px;font-weight:bold;color:#111">1:00</div><div class="ab" style="left:394px;top:121px;width:1px;height:6px;background:#111"></div><div class="ab" style="left:415px;top:124px;width:1px;height:3px;background:#111"></div><div class="ab" style="left:437px;top:124px;width:1px;height:3px;background:#111"></div><div class="t" style="left:428px;width:60px;text-align:center;top:108px;font-size:13px;font-weight:bold;color:#111">1:15</div><div class="ab" style="left:458px;top:121px;width:1px;height:6px;background:#111"></div><div class="ab" style="left:479px;top:124px;width:1px;height:3px;background:#111"></div><div class="ab" style="left:501px;top:124px;width:1px;height:3px;background:#111"></div><div class="t" style="left:492px;width:60px;text-align:center;top:108px;font-size:13px;font-weight:bold;color:#111">1:30</div><div class="ab" style="left:522px;top:121px;width:1px;height:6px;background:#111"></div><div class="ab" style="left:543px;top:124px;width:1px;height:3px;background:#111"></div><div class="ab" style="left:565px;top:124px;width:1px;height:3px;background:#111"></div><div class="t" style="left:556px;width:60px;text-align:center;top:108px;font-size:13px;font-weight:bold;color:#111">1:45</div><div class="ab" style="left:586px;top:121px;width:1px;height:6px;background:#111"></div><div class="ab" style="left:607px;top:124px;width:1px;height:3px;background:#111"></div><div class="ab" style="left:629px;top:124px;width:1px;height:3px;background:#111"></div><div class="t" style="left:620px;width:60px;text-align:center;top:108px;font-size:13px;font-weight:bold;color:#111">2:00</div><div class="ab" style="left:650px;top:121px;width:1px;height:6px;background:#111"></div><div class="ab" style="left:671px;top:124px;width:1px;height:3px;background:#111"></div><div class="ab" style="left:693px;top:124px;width:1px;height:3px;background:#111"></div><div class="t" style="left:684px;width:60px;text-align:center;top:108px;font-size:13px;font-weight:bold;color:#111">2:15</div><div class="ab" style="left:714px;top:121px;width:1px;height:6px;background:#111"></div><div class="ab" style="left:735px;top:124px;width:1px;height:3px;background:#111"></div><div class="ab" style="left:757px;top:124px;width:1px;height:3px;background:#111"></div><div class="t" style="left:748px;width:60px;text-align:center;top:108px;font-size:13px;font-weight:bold;color:#111">2:30</div><div class="ab" style="left:778px;top:121px;width:1px;height:6px;background:#111"></div><div class="ab" style="left:799px;top:124px;width:1px;height:3px;background:#111"></div><div class="ab" style="left:821px;top:124px;width:1px;height:3px;background:#111"></div><div class="t" style="left:812px;width:60px;text-align:center;top:108px;font-size:13px;font-weight:bold;color:#111">2:45</div><div class="ab" style="left:842px;top:121px;width:1px;height:6px;background:#111"></div><div class="ab" style="left:863px;top:124px;width:1px;height:3px;background:#111"></div><div class="ab" style="left:885px;top:124px;width:1px;height:3px;background:#111"></div><div class="t" style="left:876px;width:60px;text-align:center;top:108px;font-size:13px;font-weight:bold;color:#111">3:00</div><div class="ab" style="left:906px;top:121px;width:1px;height:6px;background:#111"></div><div class="ab" style="left:927px;top:124px;width:1px;height:3px;background:#111"></div><div class="ab" style="left:949px;top:124px;width:1px;height:3px;background:#111"></div><div class="t" style="left:940px;width:60px;text-align:center;top:108px;font-size:13px;font-weight:bold;color:#111">3:15</div><div class="ab" style="left:970px;top:121px;width:1px;height:6px;background:#111"></div><div class="ab" style="left:991px;top:124px;width:1px;height:3px;background:#111"></div><div class="ab" style="left:1013px;top:124px;width:1px;height:3px;background:#111"></div><div class="t" style="left:1004px;width:60px;text-align:center;top:108px;font-size:13px;font-weight:bold;color:#111">3:30</div><div class="ab" style="left:1034px;top:121px;width:1px;height:6px;background:#111"></div><div class="ab" style="left:1055px;top:124px;width:1px;height:3px;background:#111"></div><div class="ab" style="left:1077px;top:124px;width:1px;height:3px;background:#111"></div><div class="t" style="left:1068px;width:60px;text-align:center;top:108px;font-size:13px;font-weight:bold;color:#111">3:45</div><div class="ab" style="left:1098px;top:121px;width:1px;height:6px;background:#111"></div><div class="ab" style="left:1119px;top:124px;width:1px;height:3px;background:#111"></div><div class="ab" style="left:1141px;top:124px;width:1px;height:3px;background:#111"></div><div class="t" style="left:1132px;width:60px;text-align:center;top:108px;font-size:13px;font-weight:bold;color:#111">4:00</div><div class="ab" style="left:1162px;top:121px;width:1px;height:6px;background:#111"></div><div class="ab" style="left:1183px;top:124px;width:1px;height:3px;background:#111"></div><div class="ab" style="left:1205px;top:124px;width:1px;height:3px;background:#111"></div><div class="t" style="left:1196px;width:60px;text-align:center;top:108px;font-size:13px;font-weight:bold;color:#111">4:15</div><div class="ab" style="left:1226px;top:121px;width:1px;height:6px;background:#111"></div><div class="ab" style="left:1247px;top:124px;width:1px;height:3px;background:#111"></div><div class="ab" style="left:1269px;top:124px;width:1px;height:3px;background:#111"></div><div class="t" style="left:1260px;width:60px;text-align:center;top:108px;font-size:13px;font-weight:bold;color:#111">4:30</div><div class="ab" style="left:1290px;top:121px;width:1px;height:6px;background:#111"></div><div class="ab" style="left:1311px;top:124px;width:1px;height:3px;background:#111"></div><div class="ab" style="left:1333px;top:124px;width:1px;height:3px;background:#111"></div><div class="t" style="left:1324px;width:60px;text-align:center;top:108px;font-size:13px;font-weight:bold;color:#111">4:45</div><div class="ab" style="left:1354px;top:121px;width:1px;height:6px;background:#111"></div><div class="ab" style="left:1375px;top:124px;width:1px;height:3px;background:#111"></div><div class="ab" style="left:1397px;top:124px;width:1px;height:3px;background:#111"></div><div class="t" style="left:1388px;width:60px;text-align:center;top:108px;font-size:13px;font-weight:bold;color:#111">5:00</div><div class="ab" style="left:1418px;top:121px;width:1px;height:6px;background:#111"></div><div class="ab" style="left:1439px;top:124px;width:1px;height:3px;background:#111"></div><div class="ab" style="left:1461px;top:124px;width:1px;height:3px;background:#111"></div><div class="t" style="left:1452px;width:60px;text-align:center;top:108px;font-size:13px;font-weight:bold;color:#111">5:15</div><div class="ab" style="left:1482px;top:121px;width:1px;height:6px;background:#111"></div><div class="ab" style="left:1503px;top:124px;width:1px;height:3px;background:#111"></div><div class="ab" style="left:1525px;top:124px;width:1px;height:3px;background:#111"></div><div class="t" style="left:1516px;width:60px;text-align:center;top:108px;font-size:13px;font-weight:bold;color:#111">5:30</div><div class="ab" style="left:1546px;top:121px;width:1px;height:6px;background:#111"></div><div class="ab" style="left:1567px;top:124px;width:1px;height:3px;background:#111"></div><div class="ab" style="left:1589px;top:124px;width:1px;height:3px;background:#111"></div><div class="t" style="left:1580px;width:60px;text-align:center;top:108px;font-size:13px;font-weight:bold;color:#111">5:45</div><div class="ab" style="left:1610px;top:121px;width:1px;height:6px;background:#111"></div><div class="ab" style="left:1631px;top:124px;width:1px;height:3px;background:#111"></div><div class="ab" style="left:1653px;top:124px;width:1px;height:3px;background:#111"></div><div class="t" style="left:1644px;width:60px;text-align:center;top:108px;font-size:13px;font-weight:bold;color:#111">6:00</div><div class="ab" style="left:1674px;top:121px;width:1px;height:6px;background:#111"></div><div class="ab" style="left:1695px;top:124px;width:1px;height:3px;background:#111"></div><div class="ab" style="left:1717px;top:124px;width:1px;height:3px;background:#111"></div><div class="t" style="left:1708px;width:60px;text-align:center;top:108px;font-size:13px;font-weight:bold;color:#111">6:15</div><div class="ab" style="left:1738px;top:121px;width:1px;height:6px;background:#111"></div><div class="ab" style="left:1759px;top:124px;width:1px;height:3px;background:#111"></div><div class="ab" style="left:1781px;top:124px;width:1px;height:3px;background:#111"></div><div class="t" style="left:1772px;width:60px;text-align:center;top:108px;font-size:13px;font-weight:bold;color:#111">6:30</div><div class="ab" style="left:1802px;top:121px;width:1px;height:6px;background:#111"></div><div class="ab" style="left:1823px;top:124px;width:1px;height:3px;background:#111"></div><div class="ab" style="left:1845px;top:124px;width:1px;height:3px;background:#111"></div><div class="t" style="left:1836px;width:60px;text-align:center;top:108px;font-size:13px;font-weight:bold;color:#111">6:45</div><div class="ab" style="left:1866px;top:121px;width:1px;height:6px;background:#111"></div><div class="ab" style="left:1887px;top:124px;width:1px;height:3px;background:#111"></div><svg class="ab" style="left:137px;top:114px" width="8" height="12"><path d="M7 0 V12 L1 6Z" fill="#c8c8d4"/></svg><svg class="ab" style="left:1882px;top:114px" width="8" height="12"><path d="M1 0 V12 L7 6Z" fill="#c8c8d4"/></svg><div class="ab" style="left:0;top:128px;width:1919px;height:303px;background:linear-gradient(90deg,#e8e8e8 1903px,#e0e0e0 1906px,#f2f2f2)"></div><div class="ab" style="left:0;top:128px;width:1903px;height:303px;background:#e9e8c6"></div><div class="ab" style="left:4px;top:133px;width:1896px;height:295px;background:#000"></div><div class="ab" style="left:5px;top:134px;width:95px;height:293px;background:#c9c9d1"></div><div class="ab" style="left:5px;top:134px;width:15px;height:15px;background:#c4c4cc;border-right:1px solid #f0f0f0;border-bottom:1px solid #999"></div><div class="t" style="left:8px;top:134px;font-size:13px;font-weight:bold">&#215;</div><div class="ab" style="left:21px;top:134px;width:78px;height:15px;background:#c9c9d1;border-left:1px solid #f4f4f4;border-bottom:1px solid #999"></div><div class="t" style="left:23px;top:136px;font-size:11px;color:#111">11-My Frie</div><svg class="ab" style="left:84px;top:137px" width="12" height="8"><path d="M0 0 H12 L6 7Z" fill="#111"/></svg><div class="t" style="left:8px;top:152px;font-size:11px;color:#222">Stereo, 96000Hz</div><div class="t" style="left:8px;top:168px;font-size:11px;color:#222">32-bit float</div><div class="ab" style="left:5px;top:183px;width:46px;height:15px;background:#c4c4cc;border-top:1px solid #f2f2f2;border-right:1px solid #999;border-bottom:1px solid #999"></div><div class="ab" style="left:52px;top:183px;width:47px;height:15px;background:#c4c4cc;border-top:1px solid #f2f2f2;border-left:1px solid #f2f2f2;border-bottom:1px solid #999"></div><div class="t" style="left:5px;width:46px;text-align:center;top:185px;font-size:11px;color:#222">Mute</div><div class="t" style="left:52px;width:47px;text-align:center;top:185px;font-size:11px;color:#222">Solo</div><div class="ab" style="left:16px;top:217px;width:73px;height:1px;background:#eee"></div><div class="ab" style="left:16px;top:218px;width:73px;height:1px;background:#999"></div><div class="ab" style="left:16.0px;top:214px;width:1px;height:2px;background:#fff"></div><div class="ab" style="left:23.3px;top:214px;width:1px;height:2px;background:#fff"></div><div class="ab" style="left:30.6px;top:214px;width:1px;height:2px;background:#fff"></div><div class="ab" style="left:37.9px;top:214px;width:1px;height:2px;background:#fff"></div><div class="ab" style="left:45.2px;top:214px;width:1px;height:2px;background:#fff"></div><div class="ab" style="left:52.5px;top:214px;width:1px;height:2px;background:#fff"></div><div class="ab" style="left:59.8px;top:214px;width:1px;height:2px;background:#fff"></div><div class="ab" style="left:67.1px;top:214px;width:1px;height:2px;background:#fff"></div><div class="ab" style="left:74.4px;top:214px;width:1px;height:2px;background:#fff"></div><div class="ab" style="left:81.7px;top:214px;width:1px;height:2px;background:#fff"></div><div class="ab" style="left:89.0px;top:214px;width:1px;height:2px;background:#fff"></div><div class="t" style="left:16px;top:204px;font-size:9px;color:#333">&#8211;</div><div class="t" style="left:83px;top:204px;font-size:9px;color:#333">+</div><svg class="ab" style="left:46px;top:210px" width="12" height="15"><path d="M1 2.5 Q1 1 3 1 H9 Q11 1 11 2.5 V9 L6 14 L1 9Z" fill="#dcdce6" stroke="#444" stroke-width="1"/><path d="M4 5 H8 M4 7.5 H8" stroke="#777" stroke-width=".8"/></svg><div class="ab" style="left:16px;top:247px;width:73px;height:1px;background:#eee"></div><div class="ab" style="left:16px;top:248px;width:73px;height:1px;background:#999"></div><div class="ab" style="left:16.0px;top:244px;width:1px;height:2px;background:#fff"></div><div class="ab" style="left:23.3px;top:244px;width:1px;height:2px;background:#fff"></div><div class="ab" style="left:30.6px;top:244px;width:1px;height:2px;background:#fff"></div><div class="ab" style="left:37.9px;top:244px;width:1px;height:2px;background:#fff"></div><div class="ab" style="left:45.2px;top:244px;width:1px;height:2px;background:#fff"></div><div class="ab" style="left:52.5px;top:244px;width:1px;height:2px;background:#fff"></div><div class="ab" style="left:59.8px;top:244px;width:1px;height:2px;background:#fff"></div><div class="ab" style="left:67.1px;top:244px;width:1px;height:2px;background:#fff"></div><div class="ab" style="left:74.4px;top:244px;width:1px;height:2px;background:#fff"></div><div class="ab" style="left:81.7px;top:244px;width:1px;height:2px;background:#fff"></div><div class="ab" style="left:89.0px;top:244px;width:1px;height:2px;background:#fff"></div><div class="t" style="left:16px;top:234px;font-size:9px;color:#333">L</div><div class="t" style="left:83px;top:234px;font-size:9px;color:#333">R</div><svg class="ab" style="left:46px;top:240px" width="12" height="15"><path d="M1 2.5 Q1 1 3 1 H9 Q11 1 11 2.5 V9 L6 14 L1 9Z" fill="#dcdce6" stroke="#444" stroke-width="1"/><path d="M4 5 H8 M4 7.5 H8" stroke="#777" stroke-width=".8"/></svg><div class="ab" style="left:24px;top:409px;width:61px;height:17px;border-top:1px solid #f0f0f0;border-left:1px solid #f0f0f0;border-right:1px solid #aaa;background:#c9c9d1"></div><svg class="ab" style="left:48px;top:414px" width="12" height="7"><path d="M0 6 L6 0 L12 6Z" fill="#b0b0b8"/></svg><div class="ab" style="left:100px;top:133px;width:1px;height:295px;background:#000"></div><div class="ab" style="left:101px;top:134px;width:36px;height:293px;background:#d0d0d6;border-left:1px solid #f4f4f8"></div><div class="t" style="left:101px;width:31px;text-align:right;top:135px;font-size:12px;font-weight:bold;color:#111">1.0</div><div class="t" style="left:101px;width:31px;text-align:right;top:164px;font-size:12px;color:#111">0.5</div><div class="ab" style="left:132px;top:170px;width:4px;height:1px;background:#111"></div><div class="t" style="left:101px;width:31px;text-align:right;top:200px;font-size:12px;font-weight:bold;color:#111">0.0</div><div class="ab" style="left:132px;top:206px;width:4px;height:1px;background:#111"></div><div class="t" style="left:101px;width:31px;text-align:right;top:235px;font-size:12px;color:#111">-0.5</div><div class="ab" style="left:132px;top:241px;width:4px;height:1px;background:#111"></div><div class="t" style="left:101px;width:31px;text-align:right;top:264px;font-size:12px;font-weight:bold;color:#111">-1.0</div><div class="t" style="left:101px;width:31px;text-align:right;top:285px;font-size:12px;font-weight:bold;color:#111">1.0</div><div class="t" style="left:101px;width:31px;text-align:right;top:314px;font-size:12px;color:#111">0.5</div><div class="ab" style="left:132px;top:320px;width:4px;height:1px;background:#111"></div><div class="t" style="left:101px;width:31px;text-align:right;top:350px;font-size:12px;font-weight:bold;color:#111">0.0</div><div class="ab" style="left:132px;top:356px;width:4px;height:1px;background:#111"></div><div class="t" style="left:101px;width:31px;text-align:right;top:385px;font-size:12px;color:#111">-0.5</div><div class="ab" style="left:132px;top:391px;width:4px;height:1px;background:#111"></div><div class="t" style="left:101px;width:31px;text-align:right;top:414px;font-size:12px;font-weight:bold;color:#111">-1.0</div><div class="ab" style="left:101px;top:277px;width:36px;height:7px;background:#d0d0d6"></div><svg class="ab" style="left:0;top:0" width="1919" height="440"><rect x="137" y="134" width="1751" height="143" fill="#a7a7b3"/><rect x="1888" y="134" width="9" height="143" fill="#dcdbe6"/><path d="M137.5 185V224M138.5 186V223M139.5 185V224M140.5 188V223M141.5 188V224M142.5 185V224M143.5 187V224M144.5 188V224M145.5 187V224M146.5 186V224M147.5 185V224M148.5 186V223M149.5 186V223M150.5 187V225M151.5 186V223M152.5 186V223M153.5 186V225M154.5 185V225M155.5 186V222M156.5 185V223M157.5 186V224M158.5 186V223M159.5 186V224M160.5 186V225M161.5 186V223M162.5 185V224M163.5 185V224M164.5 186V223M165.5 186V224M166.5 186V222M167.5 186V224M168.5 186V223M169.5 185V225M170.5 186V223M171.5 186V225M172.5 186V223M173.5 186V224M174.5 187V224M175.5 187V222M176.5 187V224M177.5 186V223M178.5 185V223M179.5 185V225M180.5 186V225M181.5 187V223M182.5 185V224M183.5 186V224M184.5 186V223M185.5 186V224M186.5 187V224M187.5 186V223M188.5 186V224M189.5 186V224M190.5 186V223M191.5 187V224M192.5 186V224M193.5 186V225M194.5 187V223M195.5 187V224M196.5 186V223M197.5 187V223M198.5 186V225M199.5 187V224M200.5 188V224M201.5 185V223M202.5 187V223M203.5 180V226M204.5 177V228M205.5 182V230M206.5 181V236M207.5 167V250M208.5 172V241M209.5 178V231M210.5 170V231M211.5 162V252M212.5 162V231M213.5 173V234M214.5 165V237M215.5 162V243M216.5 179V231M217.5 169V256M218.5 167V254M219.5 170V254M220.5 173V242M221.5 180V232M222.5 181V256M223.5 181V256M224.5 180V256M225.5 166V230M226.5 164V243M227.5 153V234M228.5 166V246M229.5 161V257M230.5 179V244M231.5 179V245M232.5 173V231M233.5 181V234M234.5 181V257M235.5 155V232M236.5 167V236M237.5 164V249M238.5 173V232M239.5 180V232M240.5 174V230M241.5 172V239M242.5 167V234M243.5 179V244M244.5 179V251M245.5 155V233M246.5 176V251M247.5 180V243M248.5 179V230M249.5 179V231M250.5 161V239M251.5 180V234M252.5 181V232M253.5 180V256M254.5 176V245M255.5 178V243M256.5 155V243M257.5 180V230M258.5 175V234M259.5 158V232M260.5 155V260M261.5 159V227M262.5 176V241M263.5 155V239M264.5 182V242M265.5 174V240M266.5 179V259M267.5 172V244M268.5 182V246M269.5 174V248M270.5 173V250M271.5 178V249M272.5 181V234M273.5 179V242M274.5 180V239M275.5 149V246M276.5 162V243M277.5 177V230M278.5 177V230M279.5 179V229M280.5 175V237M281.5 177V258M282.5 174V231M283.5 154V229M284.5 179V231M285.5 180V237M286.5 163V234M287.5 164V236M288.5 178V262M289.5 162V253M290.5 178V241M291.5 165V230M292.5 150V253M293.5 177V241M294.5 174V236M295.5 178V232M296.5 157V232M297.5 165V237M298.5 150V240M299.5 150V262M300.5 173V234M301.5 167V232M302.5 176V235M303.5 180V235M304.5 178V253M305.5 160V252M306.5 173V239M307.5 181V247M308.5 174V240M309.5 164V232M310.5 156V233M311.5 160V257M312.5 179V263M313.5 162V256M314.5 166V246M315.5 163V236M316.5 167V234M317.5 154V240M318.5 164V234M319.5 175V233M320.5 169V231M321.5 145V255M322.5 178V239M323.5 144V237M324.5 165V240M325.5 167V240M326.5 149V259M327.5 168V235M328.5 169V231M329.5 167V240M330.5 170V231M331.5 173V256M332.5 169V261M333.5 175V232M334.5 169V234M335.5 157V238M336.5 149V240M337.5 159V232M338.5 147V252M339.5 159V242M340.5 164V242M341.5 172V243M342.5 162V241M343.5 177V244M344.5 170V237M345.5 160V248M346.5 160V238M347.5 148V246M348.5 180V236M349.5 163V245M350.5 163V233M351.5 180V253M352.5 178V245M353.5 155V237M354.5 177V233M355.5 154V261M356.5 165V254M357.5 171V233M358.5 156V233M359.5 158V233M360.5 177V243M361.5 178V255M362.5 155V241M363.5 168V232M364.5 159V234M365.5 151V235M366.5 174V250M367.5 171V240M368.5 178V238M369.5 148V259M370.5 157V265M371.5 149V235M372.5 167V248M373.5 176V260M374.5 150V267M375.5 154V234M376.5 166V260M377.5 169V236M378.5 153V238M379.5 165V245M380.5 175V234M381.5 142V235M382.5 172V266M383.5 142V244M384.5 147V248M385.5 178V254M386.5 159V235M387.5 159V247M388.5 154V263M389.5 172V266M390.5 142V233M391.5 179V263M392.5 176V248M393.5 177V264M394.5 176V263M395.5 168V264M396.5 158V239M397.5 169V241M398.5 175V237M399.5 169V234M400.5 170V253M401.5 165V235M402.5 160V234M403.5 164V258M404.5 166V267M405.5 171V264M406.5 149V250M407.5 167V254M408.5 174V247M409.5 155V234M410.5 149V269M411.5 156V233M412.5 165V237M413.5 169V259M414.5 147V235M415.5 160V241M416.5 172V241M417.5 173V250M418.5 147V232M419.5 146V235M420.5 153V234M421.5 174V234M422.5 168V233M423.5 145V248M424.5 151V246M425.5 162V233M426.5 164V244M427.5 151V245M428.5 142V244M429.5 167V259M430.5 168V263M431.5 172V238M432.5 175V237M433.5 159V238M434.5 173V256M435.5 150V246M436.5 166V239M437.5 172V268M438.5 163V237M439.5 172V257M440.5 164V259M441.5 165V254M442.5 147V250M443.5 168V253M444.5 175V249M445.5 173V251M446.5 166V258M447.5 170V262M448.5 169V241M449.5 172V247M450.5 146V244M451.5 166V251M452.5 159V265M453.5 150V267M454.5 142V244M455.5 142V248M456.5 142V267M457.5 140V239M458.5 170V241M459.5 158V244M460.5 167V252M461.5 140V247M462.5 170V243M463.5 169V256M464.5 142V269M465.5 172V243M466.5 155V242M467.5 140V248M468.5 164V248M469.5 144V246M470.5 164V254M471.5 164V261M472.5 167V245M473.5 161V242M474.5 147V249M475.5 157V252M476.5 170V266M477.5 141V269M478.5 143V240M479.5 162V243M480.5 164V253M481.5 141V240M482.5 166V246M483.5 140V264M484.5 169V261M485.5 164V240M486.5 151V239M487.5 152V256M488.5 169V253M489.5 169V238M490.5 156V242M491.5 166V241M492.5 157V248M493.5 155V241M494.5 140V241M495.5 171V267M496.5 142V246M497.5 167V239M498.5 169V260M499.5 147V268M500.5 148V241M501.5 153V238M502.5 152V241M503.5 172V262M504.5 173V249M505.5 149V262M506.5 167V259M507.5 174V269M508.5 166V252M509.5 161V243M510.5 173V253M511.5 164V269M512.5 150V268M513.5 140V261M514.5 168V246M515.5 162V250M516.5 173V249M517.5 151V257M518.5 172V238M519.5 173V239M520.5 141V241M521.5 164V261M522.5 163V254M523.5 163V236M524.5 175V246M525.5 152V256M526.5 150V236M527.5 164V253M528.5 175V234M529.5 175V252M530.5 158V251M531.5 150V267M532.5 161V265M533.5 175V253M534.5 174V235M535.5 167V262M536.5 159V255M537.5 174V239M538.5 151V257M539.5 172V257M540.5 161V261M541.5 172V254M542.5 161V235M543.5 164V264M544.5 167V257M545.5 156V244M546.5 171V236M547.5 153V248M548.5 163V242M549.5 165V235M550.5 144V255M551.5 162V250M552.5 170V243M553.5 165V235M554.5 185V231M555.5 191V226M556.5 164V269M557.5 168V238M558.5 149V239M559.5 167V244M560.5 167V237M561.5 172V254M562.5 150V261M563.5 169V235M564.5 173V253M565.5 163V257M566.5 172V266M567.5 167V235M568.5 155V249M569.5 159V268M570.5 156V249M571.5 168V237M572.5 161V258M573.5 148V236M574.5 171V234M575.5 170V238M576.5 169V238M577.5 161V239M578.5 175V250M579.5 153V265M580.5 151V266M581.5 173V268M582.5 157V238M583.5 172V267M584.5 171V254M585.5 170V236M586.5 154V235M587.5 173V244M588.5 172V249M589.5 173V246M590.5 154V267M591.5 173V258M592.5 174V237M593.5 160V238M594.5 174V250M595.5 174V255M596.5 158V267M597.5 162V242M598.5 173V256M599.5 162V237M600.5 164V268M601.5 154V247M602.5 167V237M603.5 175V240M604.5 154V254M605.5 170V239M606.5 172V240M607.5 145V240M608.5 165V240M609.5 169V239M610.5 164V259M611.5 152V241M612.5 154V243M613.5 152V260M614.5 169V248M615.5 163V239M616.5 170V244M617.5 145V241M618.5 170V259M619.5 160V249M620.5 155V243M621.5 156V254M622.5 163V265M623.5 149V240M624.5 142V239M625.5 160V241M626.5 153V260M627.5 170V236M628.5 158V244M629.5 158V235M630.5 157V250M631.5 154V240M632.5 143V239M633.5 152V237M634.5 167V237M635.5 167V258M636.5 164V255M637.5 171V236M638.5 172V242M639.5 158V239M640.5 168V237M641.5 153V243M642.5 151V264M643.5 175V234M644.5 150V261M645.5 169V263M646.5 170V239M647.5 162V240M648.5 164V235M649.5 176V259M650.5 177V248M651.5 165V235M652.5 167V246M653.5 157V260M654.5 150V236M655.5 173V238M656.5 174V252M657.5 179V235M658.5 170V235M659.5 170V233M660.5 180V243M661.5 150V234M662.5 180V237M663.5 179V235M664.5 158V245M665.5 178V237M666.5 179V234M667.5 159V234M668.5 167V234M669.5 160V234M670.5 178V244M671.5 179V237M672.5 150V258M673.5 170V251M674.5 178V256M675.5 177V249M676.5 169V231M677.5 152V234M678.5 176V265M679.5 175V235M680.5 177V233M681.5 176V233M682.5 171V241M683.5 156V234M684.5 154V235M685.5 159V265M686.5 177V253M687.5 159V263M688.5 175V234M689.5 174V256M690.5 175V236M691.5 155V265M692.5 155V251M693.5 169V259M694.5 143V237M695.5 175V267M696.5 173V247M697.5 149V237M698.5 154V262M699.5 142V238M700.5 145V238M701.5 166V254M702.5 174V237M703.5 165V252M704.5 175V241M705.5 174V238M706.5 174V269M707.5 174V240M708.5 162V240M709.5 149V244M710.5 146V238M711.5 174V239M712.5 151V237M713.5 175V265M714.5 174V239M715.5 174V248M716.5 174V239M717.5 172V240M718.5 148V239M719.5 147V256M720.5 147V244M721.5 143V239M722.5 173V254M723.5 174V255M724.5 146V239M725.5 169V241M726.5 172V260M727.5 175V240M728.5 174V246M729.5 155V243M730.5 147V255M731.5 159V249M732.5 158V242M733.5 168V240M734.5 157V255M735.5 169V269M736.5 167V259M737.5 174V270M738.5 173V255M739.5 156V257M740.5 152V238M741.5 164V237M742.5 159V264M743.5 171V250M744.5 146V250M745.5 165V244M746.5 154V241M747.5 156V250M748.5 141V243M749.5 167V265M750.5 159V268M751.5 174V263M752.5 160V241M753.5 160V264M754.5 168V240M755.5 160V254M756.5 160V257M757.5 172V237M758.5 172V238M759.5 167V240M760.5 162V263M761.5 172V240M762.5 174V236M763.5 161V255M764.5 160V260M765.5 171V246M766.5 154V251M767.5 167V258M768.5 170V265M769.5 152V259M770.5 150V261M771.5 173V253M772.5 155V235M773.5 173V256M774.5 155V251M775.5 167V237M776.5 163V260M777.5 173V255M778.5 158V237M779.5 173V235M780.5 172V243M781.5 172V250M782.5 148V240M783.5 156V267M784.5 172V252M785.5 170V242M786.5 171V250M787.5 169V238M788.5 144V244M789.5 172V237M790.5 168V246M791.5 170V259M792.5 169V239M793.5 155V246M794.5 170V264M795.5 166V268M796.5 142V252M797.5 164V258M798.5 168V245M799.5 150V259M800.5 165V252M801.5 174V238M802.5 169V237M803.5 151V242M804.5 172V261M805.5 159V240M806.5 175V268M807.5 162V257M808.5 160V240M809.5 161V260M810.5 164V251M811.5 146V241M812.5 160V243M813.5 172V240M814.5 175V251M815.5 170V258M816.5 162V251M817.5 172V255M818.5 149V241M819.5 172V239M820.5 147V244M821.5 166V243M822.5 171V241M823.5 151V240M824.5 173V256M825.5 172V238M826.5 156V240M827.5 169V243M828.5 158V262M829.5 171V245M830.5 161V255M831.5 157V243M832.5 156V255M833.5 156V252M834.5 164V241M835.5 163V240M836.5 171V237M837.5 174V249M838.5 154V236M839.5 170V268M840.5 149V256M841.5 170V268M842.5 169V254M843.5 168V254M844.5 163V242M845.5 169V252M846.5 151V236M847.5 154V236M848.5 159V241M849.5 165V239M850.5 168V245M851.5 156V239M852.5 144V268M853.5 161V243M854.5 164V240M855.5 149V259M856.5 167V250M857.5 168V259M858.5 152V267M859.5 162V239M860.5 151V216M861.5 153V215M862.5 147V214M863.5 164V239M864.5 169V266M865.5 171V260M866.5 192V240M867.5 183V241M868.5 163V258M869.5 141V263M870.5 150V216M871.5 142V215M872.5 169V215M873.5 161V242M874.5 143V249M875.5 143V251M876.5 152V266M877.5 170V243M878.5 170V254M879.5 163V249M880.5 147V241M881.5 162V252M882.5 167V246M883.5 173V242M884.5 159V243M885.5 164V248M886.5 164V239M887.5 166V260M888.5 169V241M889.5 171V243M890.5 169V239M891.5 170V261M892.5 143V264M893.5 171V269M894.5 166V241M895.5 163V249M896.5 170V243M897.5 145V262M898.5 165V268M899.5 167V237M900.5 161V259M901.5 172V240M902.5 159V240M903.5 170V241M904.5 144V240M905.5 172V242M906.5 159V266M907.5 164V245M908.5 151V247M909.5 157V239M910.5 167V240M911.5 171V265M912.5 141V255M913.5 167V255M914.5 169V237M915.5 163V259M916.5 163V243M917.5 159V243M918.5 170V269M919.5 167V251M920.5 164V238M921.5 169V241M922.5 154V238M923.5 143V238M924.5 161V237M925.5 145V267M926.5 145V234M927.5 165V255M928.5 171V246M929.5 171V259M930.5 146V237M931.5 146V239M932.5 144V235M933.5 158V247M934.5 144V234M935.5 172V247M936.5 149V241M937.5 164V236M938.5 165V238M939.5 158V250M940.5 171V235M941.5 172V258M942.5 156V239M943.5 151V241M944.5 144V236M945.5 174V247M946.5 172V244M947.5 160V239M948.5 147V246M949.5 168V259M950.5 166V250M951.5 170V237M952.5 165V233M953.5 173V255M954.5 166V257M955.5 181V251M956.5 163V231M957.5 162V236M958.5 174V256M959.5 170V235M960.5 177V229M961.5 171V245M962.5 156V256M963.5 177V236M964.5 167V237M965.5 175V247M966.5 158V239M967.5 177V263M968.5 169V239M969.5 164V254M970.5 178V243M971.5 177V250M972.5 162V234M973.5 157V233M974.5 167V235M975.5 166V237M976.5 175V235M977.5 167V257M978.5 171V248M979.5 170V252M980.5 167V238M981.5 155V235M982.5 162V262M983.5 172V237M984.5 171V239M985.5 175V237M986.5 161V257M987.5 163V265M988.5 166V263M989.5 149V247M990.5 168V247M991.5 176V262M992.5 170V263M993.5 178V253M994.5 162V238M995.5 150V237M996.5 146V258M997.5 170V256M998.5 174V244M999.5 176V241M1000.5 162V236M1001.5 174V239M1002.5 176V257M1003.5 155V263M1004.5 166V259M1005.5 164V235M1006.5 147V239M1007.5 169V235M1008.5 164V253M1009.5 165V240M1010.5 149V235M1011.5 171V234M1012.5 156V237M1013.5 163V247M1014.5 178V232M1015.5 186V230M1016.5 179V229M1017.5 187V222M1018.5 181V227M1019.5 186V221M1020.5 183V226M1021.5 184V219M1022.5 188V224M1023.5 186V219M1024.5 191V218M1025.5 192V218M1026.5 188V219M1027.5 188V217M1028.5 191V217M1029.5 191V217M1030.5 192V220M1031.5 189V216M1032.5 188V217M1033.5 190V222M1034.5 190V222M1035.5 191V217M1036.5 191V216M1037.5 190V221M1038.5 191V219M1039.5 190V217M1040.5 191V220M1041.5 191V217M1042.5 188V221M1043.5 190V218M1044.5 189V217M1045.5 191V218M1046.5 191V218M1047.5 192V219M1048.5 191V218M1049.5 191V219M1050.5 192V220M1051.5 189V219M1052.5 191V219M1053.5 192V218M1054.5 188V220M1055.5 191V221M1056.5 192V218M1057.5 191V217M1058.5 191V222M1059.5 188V221M1060.5 188V223M1061.5 191V223M1062.5 191V218M1063.5 191V220M1064.5 191V218M1065.5 192V218M1066.5 192V218M1067.5 192V218M1068.5 189V217M1069.5 191V221M1070.5 188V219M1071.5 191V216M1072.5 191V220M1073.5 189V221M1074.5 189V218M1075.5 188V220M1076.5 192V222M1077.5 192V218M1078.5 192V221M1079.5 188V218M1080.5 192V216M1081.5 192V217M1082.5 192V217M1083.5 189V216M1084.5 192V217M1085.5 188V217M1086.5 192V218M1087.5 189V220M1088.5 192V220M1089.5 188V216M1090.5 193V220M1091.5 190V218M1092.5 189V217M1093.5 192V222M1094.5 190V221M1095.5 193V217M1096.5 191V217M1097.5 191V216M1098.5 192V220M1099.5 192V219M1100.5 193V217M1101.5 191V217M1102.5 192V220M1103.5 191V217M1104.5 191V218M1105.5 189V217M1106.5 192V217M1107.5 189V217M1108.5 191V218M1109.5 190V219M1110.5 190V218M1111.5 192V217M1112.5 190V222M1113.5 188V221M1114.5 193V220M1115.5 188V218M1116.5 190V218M1117.5 192V220M1118.5 191V219M1119.5 192V220M1120.5 191V217M1121.5 192V217M1122.5 189V219M1123.5 192V220M1124.5 190V221M1125.5 190V220M1126.5 192V220M1127.5 191V218M1128.5 192V220M1129.5 192V218M1130.5 189V219M1131.5 181V229M1132.5 170V237M1133.5 177V247M1134.5 157V252M1135.5 162V261M1136.5 171V250M1137.5 162V249M1138.5 170V257M1139.5 144V267M1140.5 173V266M1141.5 165V240M1142.5 153V249M1143.5 169V261M1144.5 168V240M1145.5 171V244M1146.5 148V251M1147.5 154V241M1148.5 171V264M1149.5 172V250M1150.5 171V247M1151.5 156V265M1152.5 170V240M1153.5 171V264M1154.5 162V239M1155.5 158V243M1156.5 167V244M1157.5 155V238M1158.5 163V239M1159.5 147V264M1160.5 169V260M1161.5 148V256M1162.5 166V257M1163.5 157V237M1164.5 170V239M1165.5 171V238M1166.5 155V238M1167.5 169V237M1168.5 169V250M1169.5 170V248M1170.5 150V250M1171.5 163V267M1172.5 159V264M1173.5 173V253M1174.5 153V249M1175.5 145V259M1176.5 171V245M1177.5 167V251M1178.5 163V239M1179.5 148V237M1180.5 156V239M1181.5 174V246M1182.5 174V268M1183.5 169V242M1184.5 167V248M1185.5 165V237M1186.5 145V253M1187.5 168V250M1188.5 159V241M1189.5 155V248M1190.5 157V238M1191.5 158V259M1192.5 160V264M1193.5 155V258M1194.5 167V268M1195.5 172V239M1196.5 174V239M1197.5 159V237M1198.5 162V254M1199.5 147V259M1200.5 152V248M1201.5 172V238M1202.5 171V241M1203.5 149V238M1204.5 157V264M1205.5 172V242M1206.5 172V254M1207.5 141V239M1208.5 174V238M1209.5 165V259M1210.5 150V252M1211.5 160V246M1212.5 171V247M1213.5 164V264M1214.5 172V253M1215.5 169V253M1216.5 158V268M1217.5 155V242M1218.5 162V258M1219.5 168V246M1220.5 173V253M1221.5 173V264M1222.5 147V238M1223.5 157V261M1224.5 145V250M1225.5 171V238M1226.5 169V239M1227.5 172V260M1228.5 164V262M1229.5 153V240M1230.5 170V240M1231.5 149V268M1232.5 154V254M1233.5 166V243M1234.5 167V266M1235.5 141V248M1236.5 152V263M1237.5 155V246M1238.5 168V270M1239.5 165V258M1240.5 165V270M1241.5 147V252M1242.5 150V246M1243.5 148V242M1244.5 168V240M1245.5 157V244M1246.5 172V250M1247.5 143V255M1248.5 171V242M1249.5 141V262M1250.5 149V255M1251.5 149V243M1252.5 171V262M1253.5 151V240M1254.5 163V253M1255.5 170V249M1256.5 157V243M1257.5 145V262M1258.5 155V245M1259.5 163V249M1260.5 156V260M1261.5 171V268M1262.5 162V253M1263.5 169V252M1264.5 148V263M1265.5 168V246M1266.5 147V243M1267.5 166V239M1268.5 153V263M1269.5 150V248M1270.5 157V244M1271.5 161V250M1272.5 149V243M1273.5 166V266M1274.5 145V248M1275.5 158V246M1276.5 169V251M1277.5 165V242M1278.5 170V242M1279.5 155V256M1280.5 165V255M1281.5 160V240M1282.5 158V239M1283.5 163V268M1284.5 168V243M1285.5 149V245M1286.5 155V257M1287.5 153V247M1288.5 166V259M1289.5 164V253M1290.5 167V261M1291.5 141V251M1292.5 158V256M1293.5 153V264M1294.5 141V245M1295.5 163V255M1296.5 142V258M1297.5 168V240M1298.5 167V255M1299.5 141V260M1300.5 168V267M1301.5 148V258M1302.5 170V268M1303.5 161V257M1304.5 153V266M1305.5 164V264M1306.5 146V255M1307.5 141V255M1308.5 152V245M1309.5 165V266M1310.5 169V244M1311.5 150V248M1312.5 154V242M1313.5 168V259M1314.5 149V245M1315.5 163V240M1316.5 144V240M1317.5 154V254M1318.5 170V243M1319.5 169V241M1320.5 147V266M1321.5 148V245M1322.5 171V241M1323.5 155V254M1324.5 170V258M1325.5 160V253M1326.5 161V243M1327.5 170V246M1328.5 143V243M1329.5 170V249M1330.5 168V268M1331.5 163V243M1332.5 147V243M1333.5 159V254M1334.5 157V269M1335.5 148V253M1336.5 165V243M1337.5 161V242M1338.5 147V243M1339.5 165V263M1340.5 157V242M1341.5 142V244M1342.5 160V251M1343.5 152V262M1344.5 153V243M1345.5 153V243M1346.5 166V259M1347.5 166V240M1348.5 166V251M1349.5 155V246M1350.5 156V241M1351.5 162V251M1352.5 153V242M1353.5 164V240M1354.5 169V250M1355.5 166V255M1356.5 162V255M1357.5 146V244M1358.5 159V244M1359.5 168V246M1360.5 171V245M1361.5 170V240M1362.5 164V255M1363.5 168V246M1364.5 170V251M1365.5 147V241M1366.5 169V255M1367.5 170V241M1368.5 167V257M1369.5 170V246M1370.5 141V261M1371.5 155V242M1372.5 166V249M1373.5 164V261M1374.5 168V246M1375.5 171V256M1376.5 195V214M1377.5 196V216M1378.5 196V213M1379.5 157V241M1380.5 155V241M1381.5 150V241M1382.5 140V239M1383.5 168V255M1384.5 166V251M1385.5 144V218M1386.5 161V220M1387.5 151V240M1388.5 150V241M1389.5 146V240M1390.5 171V255M1391.5 170V240M1392.5 157V250M1393.5 160V255M1394.5 144V255M1395.5 144V263M1396.5 144V241M1397.5 156V243M1398.5 168V244M1399.5 161V244M1400.5 170V249M1401.5 171V248M1402.5 147V255M1403.5 169V243M1404.5 166V250M1405.5 158V246M1406.5 146V250M1407.5 168V256M1408.5 145V252M1409.5 145V242M1410.5 167V260M1411.5 170V243M1412.5 168V241M1413.5 168V245M1414.5 141V245M1415.5 140V267M1416.5 141V244M1417.5 150V243M1418.5 142V243M1419.5 168V241M1420.5 167V242M1421.5 168V260M1422.5 167V240M1423.5 156V266M1424.5 169V248M1425.5 170V244M1426.5 152V268M1427.5 143V240M1428.5 164V257M1429.5 140V246M1430.5 167V265M1431.5 164V253M1432.5 167V246M1433.5 141V253M1434.5 166V244M1435.5 146V267M1436.5 163V243M1437.5 154V243M1438.5 153V242M1439.5 163V263M1440.5 163V244M1441.5 167V255M1442.5 167V262M1443.5 170V258M1444.5 166V268M1445.5 144V247M1446.5 157V258M1447.5 165V269M1448.5 146V262M1449.5 161V248M1450.5 160V251M1451.5 150V255M1452.5 167V259M1453.5 161V245M1454.5 159V247M1455.5 169V248M1456.5 166V252M1457.5 169V247M1458.5 169V246M1459.5 152V252M1460.5 139V265M1461.5 155V251M1462.5 163V245M1463.5 156V262M1464.5 166V270M1465.5 147V247M1466.5 141V255M1467.5 161V246M1468.5 144V269M1469.5 158V250M1470.5 151V251M1471.5 161V245M1472.5 156V247M1473.5 162V246M1474.5 146V268M1475.5 149V246M1476.5 141V254M1477.5 146V246M1478.5 164V248M1479.5 165V247M1480.5 166V246M1481.5 168V264M1482.5 145V244M1483.5 168V245M1484.5 158V244M1485.5 155V251M1486.5 153V252M1487.5 161V244M1488.5 167V268M1489.5 150V245M1490.5 165V240M1491.5 171V254M1492.5 169V253M1493.5 140V247M1494.5 168V248M1495.5 157V245M1496.5 170V253M1497.5 160V241M1498.5 145V242M1499.5 157V239M1500.5 165V252M1501.5 167V260M1502.5 139V246M1503.5 156V249M1504.5 166V241M1505.5 141V267M1506.5 169V245M1507.5 159V238M1508.5 170V244M1509.5 161V259M1510.5 148V270M1511.5 168V248M1512.5 165V264M1513.5 170V241M1514.5 156V241M1515.5 164V241M1516.5 166V255M1517.5 141V256M1518.5 166V260M1519.5 156V246M1520.5 168V265M1521.5 168V251M1522.5 170V243M1523.5 151V241M1524.5 167V242M1525.5 159V259M1526.5 155V252M1527.5 170V252M1528.5 158V271M1529.5 140V252M1530.5 169V242M1531.5 169V242M1532.5 146V241M1533.5 171V268M1534.5 170V248M1535.5 172V262M1536.5 152V267M1537.5 167V244M1538.5 167V243M1539.5 152V247M1540.5 139V257M1541.5 168V248M1542.5 172V242M1543.5 139V264M1544.5 173V240M1545.5 165V240M1546.5 153V256M1547.5 170V243M1548.5 173V264M1549.5 169V270M1550.5 169V245M1551.5 170V241M1552.5 169V253M1553.5 165V250M1554.5 148V252M1555.5 171V249M1556.5 170V242M1557.5 144V247M1558.5 168V262M1559.5 168V240M1560.5 153V256M1561.5 168V246M1562.5 169V266M1563.5 162V267M1564.5 170V240M1565.5 140V239M1566.5 171V242M1567.5 148V259M1568.5 169V270M1569.5 140V251M1570.5 170V246M1571.5 169V240M1572.5 171V239M1573.5 170V242M1574.5 155V242M1575.5 147V237M1576.5 171V237M1577.5 157V247M1578.5 160V255M1579.5 173V257M1580.5 167V247M1581.5 151V240M1582.5 159V244M1583.5 162V243M1584.5 165V239M1585.5 171V239M1586.5 161V240M1587.5 157V269M1588.5 143V247M1589.5 158V240M1590.5 169V240M1591.5 155V243M1592.5 150V258M1593.5 169V242M1594.5 147V242M1595.5 163V244M1596.5 159V243M1597.5 167V243M1598.5 163V268M1599.5 159V240M1600.5 140V257M1601.5 155V249M1602.5 169V270M1603.5 168V266M1604.5 159V253M1605.5 162V251M1606.5 156V241M1607.5 161V253M1608.5 166V246M1609.5 163V247M1610.5 157V267M1611.5 159V246M1612.5 167V242M1613.5 164V243M1614.5 169V265M1615.5 169V268M1616.5 166V271M1617.5 169V268M1618.5 155V246M1619.5 141V248M1620.5 158V244M1621.5 149V270M1622.5 141V263M1623.5 153V267M1624.5 144V253M1625.5 169V246M1626.5 140V243M1627.5 167V252M1628.5 142V250M1629.5 168V257M1630.5 168V245M1631.5 160V245M1632.5 149V245M1633.5 170V250M1634.5 157V271M1635.5 164V246M1636.5 166V242M1637.5 169V264M1638.5 165V243M1639.5 166V243M1640.5 154V252M1641.5 141V243M1642.5 167V258M1643.5 140V248M1644.5 155V270M1645.5 169V240M1646.5 169V240M1647.5 141V249M1648.5 145V257M1649.5 168V244M1650.5 165V242M1651.5 154V269M1652.5 169V251M1653.5 170V251M1654.5 167V252M1655.5 170V259M1656.5 152V240M1657.5 168V256M1658.5 168V254M1659.5 165V256M1660.5 162V248M1661.5 168V242M1662.5 159V263M1663.5 151V242M1664.5 156V252M1665.5 155V259M1666.5 169V242M1667.5 148V238M1668.5 166V251M1669.5 153V249M1670.5 147V241M1671.5 166V269M1672.5 148V253M1673.5 171V239M1674.5 172V241M1675.5 163V249M1676.5 167V255M1677.5 167V264M1678.5 171V266M1679.5 143V256M1680.5 156V242M1681.5 151V249M1682.5 151V262M1683.5 162V242M1684.5 147V267M1685.5 149V248M1686.5 143V252M1687.5 168V247M1688.5 162V248M1689.5 163V246M1690.5 157V265M1691.5 169V244M1692.5 166V263M1693.5 169V241M1694.5 170V261M1695.5 146V246M1696.5 164V241M1697.5 167V247M1698.5 170V262M1699.5 157V249M1700.5 167V268M1701.5 164V241M1702.5 170V243M1703.5 169V247M1704.5 172V251M1705.5 160V241M1706.5 158V242M1707.5 168V270M1708.5 163V270M1709.5 156V268M1710.5 170V271M1711.5 164V244M1712.5 167V246M1713.5 172V246M1714.5 168V245M1715.5 150V252M1716.5 160V251M1717.5 169V263M1718.5 158V252M1719.5 147V264M1720.5 163V255M1721.5 168V271M1722.5 161V254M1723.5 167V254M1724.5 151V245M1725.5 155V250M1726.5 166V242M1727.5 166V269M1728.5 166V248M1729.5 171V243M1730.5 146V259M1731.5 148V269M1732.5 163V243M1733.5 168V246M1734.5 164V251M1735.5 169V253M1736.5 161V271M1737.5 167V257M1738.5 168V240M1739.5 158V258M1740.5 153V258M1741.5 140V248M1742.5 139V243M1743.5 165V250M1744.5 155V241M1745.5 158V263M1746.5 141V254M1747.5 154V254M1748.5 167V251M1749.5 168V242M1750.5 167V267M1751.5 169V269M1752.5 156V263M1753.5 170V245M1754.5 169V247M1755.5 170V250M1756.5 160V266M1757.5 162V249M1758.5 146V253M1759.5 155V242M1760.5 146V248M1761.5 170V257M1762.5 150V240M1763.5 152V266M1764.5 149V249M1765.5 150V242M1766.5 170V248M1767.5 167V246M1768.5 166V255M1769.5 168V239M1770.5 166V264M1771.5 159V241M1772.5 168V241M1773.5 169V261M1774.5 154V264M1775.5 148V255M1776.5 161V241M1777.5 165V240M1778.5 164V253M1779.5 157V256M1780.5 159V267M1781.5 140V260M1782.5 164V264M1783.5 146V240M1784.5 168V270M1785.5 157V241M1786.5 144V248M1787.5 152V257M1788.5 158V250M1789.5 152V247M1790.5 169V259M1791.5 155V239M1792.5 145V259M1793.5 165V245M1794.5 166V270M1795.5 164V241M1796.5 150V253M1797.5 166V240M1798.5 164V263M1799.5 153V255M1800.5 168V243M1801.5 141V255M1802.5 169V266M1803.5 164V267M1804.5 170V250M1805.5 156V243M1806.5 141V250M1807.5 143V240M1808.5 143V264M1809.5 197V213M1810.5 196V213M1811.5 169V253M1812.5 145V243M1813.5 169V261M1814.5 164V238M1815.5 170V264M1816.5 163V241M1817.5 155V239M1818.5 156V245M1819.5 171V253M1820.5 174V235M1821.5 175V243M1822.5 175V230M1823.5 168V229M1824.5 174V235M1825.5 171V227M1826.5 180V228M1827.5 181V229M1828.5 177V225M1829.5 182V231M1830.5 184V233M1831.5 184V224M1832.5 188V220M1833.5 187V226M1834.5 189V222M1835.5 187V223M1836.5 189V219M1837.5 190V218M1838.5 194V216M1839.5 194V215M1840.5 192V219M1841.5 195V214M1842.5 195V217M1843.5 195V216M1844.5 197V213M1845.5 196V212M1846.5 198V212M1847.5 198V211M1848.5 197V212M1849.5 199V210M1850.5 200V210M1851.5 201V211M1852.5 201V209M1853.5 201V210M1854.5 201V208M1855.5 202V208M1856.5 202V208M1857.5 202V207M1858.5 203V207M1859.5 203V207M1860.5 203V207M1861.5 203V207M1862.5 203V207M1863.5 203V207M1864.5 203V206M1865.5 204V207M1866.5 204V206M1867.5 204V206M1868.5 204V206M1869.5 204V206M1870.5 204V206M1871.5 204V206M1872.5 204V206M1873.5 204V206M1874.5 204V206M1875.5 204V206M1876.5 204V206M1877.5 204V206M1878.5 204V206M1879.5 204V206M1880.5 204V206M1881.5 204V206M1882.5 204V206M1883.5 204V206M1884.5 204V206M1885.5 204V206M1886.5 204V206M1887.5 204V206" stroke="#4551c9" stroke-width="1" shape-rendering="crispEdges"/><path d="M137.5 198V212M138.5 197V213M139.5 198V212M140.5 198V212M141.5 197V213M142.5 197V213M143.5 197V213M144.5 197V213M145.5 197V213M146.5 198V212M147.5 198V212M148.5 198V212M149.5 198V212M150.5 198V212M151.5 197V213M152.5 198V212M153.5 197V213M154.5 197V213M155.5 198V212M156.5 197V213M157.5 197V213M158.5 198V212M159.5 197V213M160.5 197V213M161.5 196V214M162.5 197V213M163.5 198V212M164.5 197V213M165.5 197V213M166.5 198V212M167.5 197V213M168.5 197V213M169.5 198V212M170.5 197V213M171.5 197V213M172.5 198V212M173.5 196V214M174.5 197V213M175.5 197V213M176.5 197V213M177.5 198V212M178.5 197V213M179.5 198V212M180.5 198V212M181.5 197V213M182.5 198V212M183.5 198V212M184.5 197V213M185.5 198V212M186.5 197V213M187.5 198V212M188.5 197V213M189.5 198V212M190.5 197V213M191.5 197V213M192.5 197V213M193.5 197V213M194.5 198V212M195.5 198V212M196.5 198V212M197.5 198V212M198.5 198V212M199.5 197V213M200.5 197V213M201.5 198V212M202.5 197V213M203.5 198V212M204.5 197V213M205.5 197V213M206.5 195V215M207.5 196V214M208.5 196V214M209.5 195V215M210.5 196V214M211.5 194V216M212.5 196V214M213.5 194V216M214.5 194V216M215.5 195V215M216.5 196V214M217.5 195V215M218.5 196V214M219.5 195V215M220.5 196V214M221.5 195V215M222.5 194V216M223.5 196V214M224.5 194V216M225.5 195V215M226.5 195V215M227.5 196V214M228.5 195V215M229.5 194V216M230.5 196V214M231.5 196V214M232.5 196V214M233.5 195V215M234.5 196V214M235.5 194V216M236.5 195V215M237.5 195V215M238.5 195V215M239.5 195V215M240.5 194V216M241.5 196V214M242.5 194V216M243.5 194V216M244.5 196V214M245.5 194V216M246.5 195V215M247.5 194V216M248.5 195V215M249.5 194V216M250.5 196V214M251.5 195V215M252.5 195V215M253.5 196V214M254.5 196V214M255.5 194V216M256.5 194V216M257.5 195V215M258.5 196V214M259.5 196V214M260.5 196V214M261.5 194V216M262.5 195V215M263.5 194V216M264.5 196V214M265.5 194V216M266.5 194V216M267.5 195V215M268.5 195V215M269.5 195V215M270.5 195V215M271.5 196V214M272.5 196V214M273.5 194V216M274.5 196V214M275.5 196V214M276.5 194V216M277.5 194V216M278.5 195V215M279.5 194V216M280.5 193V217M281.5 194V216M282.5 194V216M283.5 195V215M284.5 196V214M285.5 194V216M286.5 195V215M287.5 194V216M288.5 194V216M289.5 194V216M290.5 194V216M291.5 195V215M292.5 195V215M293.5 196V214M294.5 196V214M295.5 195V215M296.5 195V215M297.5 195V215M298.5 194V216M299.5 193V217M300.5 195V215M301.5 193V217M302.5 194V216M303.5 194V216M304.5 195V215M305.5 193V217M306.5 194V216M307.5 195V215M308.5 193V217M309.5 193V217M310.5 194V216M311.5 194V216M312.5 195V215M313.5 193V217M314.5 195V215M315.5 196V214M316.5 193V217M317.5 195V215M318.5 193V217M319.5 193V217M320.5 195V215M321.5 195V215M322.5 194V216M323.5 195V215M324.5 193V217M325.5 193V217M326.5 194V216M327.5 195V215M328.5 193V217M329.5 195V215M330.5 193V217M331.5 193V217M332.5 195V215M333.5 195V215M334.5 193V217M335.5 193V217M336.5 195V215M337.5 193V217M338.5 193V217M339.5 195V215M340.5 194V216M341.5 195V215M342.5 194V216M343.5 194V216M344.5 193V217M345.5 193V217M346.5 193V217M347.5 194V216M348.5 193V217M349.5 193V217M350.5 194V216M351.5 193V217M352.5 194V216M353.5 194V216M354.5 193V217M355.5 193V217M356.5 195V215M357.5 193V217M358.5 193V217M359.5 194V216M360.5 193V217M361.5 195V215M362.5 195V215M363.5 193V217M364.5 194V216M365.5 192V218M366.5 195V215M367.5 195V215M368.5 194V216M369.5 194V216M370.5 193V217M371.5 195V215M372.5 195V215M373.5 193V217M374.5 195V215M375.5 195V215M376.5 194V216M377.5 194V216M378.5 195V215M379.5 194V216M380.5 194V216M381.5 194V216M382.5 194V216M383.5 193V217M384.5 193V217M385.5 194V216M386.5 193V217M387.5 192V218M388.5 195V215M389.5 192V218M390.5 193V217M391.5 194V216M392.5 194V216M393.5 192V218M394.5 192V218M395.5 195V215M396.5 193V217M397.5 193V217M398.5 195V215M399.5 193V217M400.5 194V216M401.5 194V216M402.5 194V216M403.5 193V217M404.5 194V216M405.5 194V216M406.5 195V215M407.5 194V216M408.5 194V216M409.5 192V218M410.5 195V215M411.5 194V216M412.5 193V217M413.5 194V216M414.5 195V215M415.5 193V217M416.5 192V218M417.5 193V217M418.5 193V217M419.5 194V216M420.5 194V216M421.5 194V216M422.5 194V216M423.5 192V218M424.5 193V217M425.5 194V216M426.5 194V216M427.5 191V219M428.5 194V216M429.5 194V216M430.5 193V217M431.5 193V217M432.5 192V218M433.5 191V219M434.5 191V219M435.5 193V217M436.5 192V218M437.5 192V218M438.5 194V216M439.5 191V219M440.5 194V216M441.5 192V218M442.5 191V219M443.5 193V217M444.5 192V218M445.5 193V217M446.5 192V218M447.5 194V216M448.5 191V219M449.5 191V219M450.5 194V216M451.5 193V217M452.5 191V219M453.5 191V219M454.5 192V218M455.5 193V217M456.5 193V217M457.5 194V216M458.5 191V219M459.5 192V218M460.5 193V217M461.5 192V218M462.5 190V220M463.5 191V219M464.5 193V217M465.5 191V219M466.5 193V217M467.5 192V218M468.5 191V219M469.5 192V218M470.5 192V218M471.5 191V219M472.5 192V218M473.5 192V218M474.5 192V218M475.5 192V218M476.5 190V220M477.5 193V217M478.5 192V218M479.5 192V218M480.5 191V219M481.5 192V218M482.5 191V219M483.5 192V218M484.5 192V218M485.5 193V217M486.5 192V218M487.5 192V218M488.5 192V218M489.5 190V220M490.5 191V219M491.5 191V219M492.5 193V217M493.5 192V218M494.5 191V219M495.5 192V218M496.5 190V220M497.5 191V219M498.5 191V219M499.5 193V217M500.5 190V220M501.5 190V220M502.5 191V219M503.5 191V219M504.5 192V218M505.5 191V219M506.5 190V220M507.5 192V218M508.5 194V216M509.5 192V218M510.5 190V220M511.5 193V217M512.5 191V219M513.5 194V216M514.5 191V219M515.5 191V219M516.5 193V217M517.5 192V218M518.5 194V216M519.5 192V218M520.5 191V219M521.5 192V218M522.5 193V217M523.5 192V218M524.5 192V218M525.5 193V217M526.5 193V217M527.5 193V217M528.5 194V216M529.5 192V218M530.5 192V218M531.5 193V217M532.5 192V218M533.5 193V217M534.5 193V217M535.5 193V217M536.5 194V216M537.5 194V216M538.5 194V216M539.5 193V217M540.5 192V218M541.5 194V216M542.5 191V219M543.5 191V219M544.5 194V216M545.5 191V219M546.5 192V218M547.5 193V217M548.5 194V216M549.5 193V217M550.5 192V218M551.5 192V218M552.5 194V216M553.5 191V219M554.5 198V214M555.5 198V214M556.5 194V216M557.5 192V218M558.5 193V217M559.5 192V218M560.5 191V219M561.5 193V217M562.5 194V216M563.5 193V217M564.5 191V219M565.5 193V217M566.5 192V218M567.5 192V218M568.5 194V216M569.5 193V217M570.5 192V218M571.5 191V219M572.5 191V219M573.5 194V216M574.5 192V218M575.5 193V217M576.5 192V218M577.5 193V217M578.5 191V219M579.5 194V216M580.5 193V217M581.5 192V218M582.5 192V218M583.5 194V216M584.5 193V217M585.5 191V219M586.5 193V217M587.5 193V217M588.5 192V218M589.5 193V217M590.5 193V217M591.5 192V218M592.5 193V217M593.5 192V218M594.5 194V216M595.5 192V218M596.5 193V217M597.5 192V218M598.5 191V219M599.5 193V217M600.5 194V216M601.5 192V218M602.5 194V216M603.5 191V219M604.5 194V216M605.5 192V218M606.5 192V218M607.5 191V219M608.5 192V218M609.5 192V218M610.5 193V217M611.5 194V216M612.5 191V219M613.5 193V217M614.5 193V217M615.5 192V218M616.5 194V216M617.5 194V216M618.5 194V216M619.5 194V216M620.5 194V216M621.5 194V216M622.5 192V218M623.5 194V216M624.5 192V218M625.5 193V217M626.5 192V218M627.5 194V216M628.5 192V218M629.5 195V215M630.5 194V216M631.5 193V217M632.5 192V218M633.5 194V216M634.5 194V216M635.5 194V216M636.5 194V216M637.5 195V215M638.5 194V216M639.5 195V215M640.5 195V215M641.5 194V216M642.5 192V218M643.5 195V215M644.5 193V217M645.5 194V216M646.5 195V215M647.5 195V215M648.5 195V215M649.5 195V215M650.5 194V216M651.5 193V217M652.5 193V217M653.5 196V214M654.5 194V216M655.5 194V216M656.5 196V214M657.5 194V216M658.5 195V215M659.5 193V217M660.5 194V216M661.5 195V215M662.5 194V216M663.5 194V216M664.5 194V216M665.5 193V217M666.5 193V217M667.5 196V214M668.5 194V216M669.5 193V217M670.5 194V216M671.5 195V215M672.5 194V216M673.5 195V215M674.5 193V217M675.5 193V217M676.5 193V217M677.5 194V216M678.5 194V216M679.5 193V217M680.5 194V216M681.5 194V216M682.5 194V216M683.5 193V217M684.5 192V218M685.5 193V217M686.5 194V216M687.5 192V218M688.5 194V216M689.5 193V217M690.5 193V217M691.5 192V218M692.5 193V217M693.5 193V217M694.5 192V218M695.5 193V217M696.5 193V217M697.5 192V218M698.5 192V218M699.5 192V218M700.5 191V219M701.5 192V218M702.5 193V217M703.5 192V218M704.5 192V218M705.5 194V216M706.5 193V217M707.5 194V216M708.5 194V216M709.5 193V217M710.5 192V218M711.5 193V217M712.5 193V217M713.5 191V219M714.5 192V218M715.5 191V219M716.5 191V219M717.5 194V216M718.5 192V218M719.5 194V216M720.5 194V216M721.5 194V216M722.5 193V217M723.5 193V217M724.5 193V217M725.5 194V216M726.5 193V217M727.5 191V219M728.5 193V217M729.5 194V216M730.5 192V218M731.5 191V219M732.5 191V219M733.5 192V218M734.5 193V217M735.5 192V218M736.5 191V219M737.5 192V218M738.5 191V219M739.5 192V218M740.5 192V218M741.5 193V217M742.5 194V216M743.5 193V217M744.5 192V218M745.5 192V218M746.5 193V217M747.5 191V219M748.5 191V219M749.5 192V218M750.5 191V219M751.5 193V217M752.5 194V216M753.5 192V218M754.5 191V219M755.5 194V216M756.5 192V218M757.5 192V218M758.5 194V216M759.5 191V219M760.5 191V219M761.5 192V218M762.5 191V219M763.5 191V219M764.5 194V216M765.5 193V217M766.5 193V217M767.5 193V217M768.5 190V220M769.5 194V216M770.5 192V218M771.5 192V218M772.5 192V218M773.5 192V218M774.5 192V218M775.5 193V217M776.5 191V219M777.5 193V217M778.5 193V217M779.5 190V220M780.5 190V220M781.5 193V217M782.5 193V217M783.5 191V219M784.5 192V218M785.5 191V219M786.5 192V218M787.5 192V218M788.5 191V219M789.5 191V219M790.5 192V218M791.5 192V218M792.5 191V219M793.5 192V218M794.5 191V219M795.5 192V218M796.5 191V219M797.5 191V219M798.5 193V217M799.5 193V217M800.5 192V218M801.5 193V217M802.5 190V220M803.5 191V219M804.5 192V218M805.5 193V217M806.5 192V218M807.5 192V218M808.5 193V217M809.5 191V219M810.5 192V218M811.5 191V219M812.5 193V217M813.5 191V219M814.5 193V217M815.5 192V218M816.5 191V219M817.5 193V217M818.5 192V218M819.5 191V219M820.5 191V219M821.5 191V219M822.5 190V220M823.5 191V219M824.5 190V220M825.5 190V220M826.5 191V219M827.5 192V218M828.5 190V220M829.5 190V220M830.5 191V219M831.5 193V217M832.5 192V218M833.5 190V220M834.5 193V217M835.5 191V219M836.5 192V218M837.5 190V220M838.5 192V218M839.5 190V220M840.5 191V219M841.5 193V217M842.5 191V219M843.5 190V220M844.5 191V219M845.5 192V218M846.5 192V218M847.5 192V218M848.5 191V219M849.5 191V219M850.5 191V219M851.5 193V217M852.5 191V219M853.5 193V217M854.5 191V219M855.5 192V218M856.5 190V220M857.5 191V219M858.5 192V218M859.5 192V218M860.5 190V210M861.5 190V210M862.5 190V210M863.5 192V218M864.5 190V220M865.5 192V218M866.5 199V217M867.5 199V217M868.5 190V220M869.5 193V217M870.5 193V209M871.5 190V210M872.5 193V209M873.5 191V219M874.5 190V220M875.5 193V217M876.5 193V217M877.5 191V219M878.5 191V219M879.5 193V217M880.5 192V218M881.5 193V217M882.5 192V218M883.5 193V217M884.5 190V220M885.5 193V217M886.5 193V217M887.5 192V218M888.5 192V218M889.5 193V217M890.5 191V219M891.5 192V218M892.5 193V217M893.5 191V219M894.5 192V218M895.5 190V220M896.5 191V219M897.5 191V219M898.5 193V217M899.5 191V219M900.5 191V219M901.5 193V217M902.5 190V220M903.5 192V218M904.5 192V218M905.5 193V217M906.5 193V217M907.5 191V219M908.5 191V219M909.5 192V218M910.5 193V217M911.5 191V219M912.5 192V218M913.5 190V220M914.5 192V218M915.5 192V218M916.5 190V220M917.5 193V217M918.5 191V219M919.5 194V216M920.5 193V217M921.5 191V219M922.5 191V219M923.5 191V219M924.5 192V218M925.5 191V219M926.5 192V218M927.5 191V219M928.5 191V219M929.5 191V219M930.5 192V218M931.5 192V218M932.5 191V219M933.5 193V217M934.5 194V216M935.5 194V216M936.5 191V219M937.5 191V219M938.5 193V217M939.5 191V219M940.5 193V217M941.5 193V217M942.5 193V217M943.5 192V218M944.5 193V217M945.5 192V218M946.5 194V216M947.5 193V217M948.5 195V215M949.5 194V216M950.5 194V216M951.5 193V217M952.5 194V216M953.5 195V215M954.5 194V216M955.5 195V215M956.5 195V215M957.5 194V216M958.5 194V216M959.5 194V216M960.5 195V215M961.5 194V216M962.5 194V216M963.5 193V217M964.5 194V216M965.5 195V215M966.5 193V217M967.5 194V216M968.5 194V216M969.5 194V216M970.5 194V216M971.5 195V215M972.5 192V218M973.5 193V217M974.5 193V217M975.5 192V218M976.5 193V217M977.5 193V217M978.5 192V218M979.5 195V215M980.5 194V216M981.5 194V216M982.5 193V217M983.5 195V215M984.5 192V218M985.5 193V217M986.5 193V217M987.5 193V217M988.5 193V217M989.5 192V218M990.5 194V216M991.5 194V216M992.5 194V216M993.5 193V217M994.5 194V216M995.5 192V218M996.5 193V217M997.5 192V218M998.5 192V218M999.5 192V218M1000.5 193V217M1001.5 192V218M1002.5 193V217M1003.5 193V217M1004.5 192V218M1005.5 193V217M1006.5 192V218M1007.5 192V218M1008.5 193V217M1009.5 194V216M1010.5 194V216M1011.5 195V215M1012.5 194V216M1013.5 195V215M1014.5 195V215M1015.5 196V214M1016.5 197V213M1017.5 198V212M1018.5 198V212M1019.5 198V212M1020.5 199V211M1021.5 199V211M1022.5 199V211M1023.5 199V211M1024.5 199V211M1025.5 200V210M1026.5 200V210M1027.5 200V210M1028.5 199V211M1029.5 199V211M1030.5 199V211M1031.5 199V211M1032.5 199V211M1033.5 199V211M1034.5 199V211M1035.5 200V210M1036.5 199V211M1037.5 199V211M1038.5 199V211M1039.5 199V211M1040.5 199V211M1041.5 200V210M1042.5 200V210M1043.5 199V211M1044.5 199V211M1045.5 200V210M1046.5 199V211M1047.5 199V211M1048.5 199V211M1049.5 199V211M1050.5 200V210M1051.5 200V210M1052.5 199V211M1053.5 200V210M1054.5 200V210M1055.5 199V211M1056.5 200V210M1057.5 200V210M1058.5 200V210M1059.5 199V211M1060.5 200V210M1061.5 199V211M1062.5 200V210M1063.5 199V211M1064.5 200V210M1065.5 199V211M1066.5 200V210M1067.5 200V210M1068.5 199V211M1069.5 200V210M1070.5 200V210M1071.5 200V210M1072.5 200V210M1073.5 199V211M1074.5 199V211M1075.5 199V211M1076.5 200V210M1077.5 199V211M1078.5 199V211M1079.5 200V210M1080.5 200V210M1081.5 199V211M1082.5 200V210M1083.5 199V211M1084.5 200V210M1085.5 199V211M1086.5 200V210M1087.5 200V210M1088.5 199V211M1089.5 200V210M1090.5 199V211M1091.5 200V210M1092.5 199V211M1093.5 199V211M1094.5 199V211M1095.5 200V210M1096.5 200V210M1097.5 200V210M1098.5 200V210M1099.5 200V210M1100.5 200V210M1101.5 200V210M1102.5 200V210M1103.5 200V210M1104.5 199V211M1105.5 199V211M1106.5 199V211M1107.5 199V211M1108.5 200V210M1109.5 199V211M1110.5 200V210M1111.5 200V210M1112.5 199V211M1113.5 200V210M1114.5 200V210M1115.5 200V210M1116.5 200V210M1117.5 199V211M1118.5 200V210M1119.5 199V211M1120.5 200V210M1121.5 199V211M1122.5 200V210M1123.5 199V211M1124.5 199V211M1125.5 200V210M1126.5 200V210M1127.5 200V210M1128.5 199V211M1129.5 199V211M1130.5 200V210M1131.5 198V212M1132.5 197V213M1133.5 193V217M1134.5 193V217M1135.5 191V219M1136.5 194V216M1137.5 193V217M1138.5 191V219M1139.5 192V218M1140.5 192V218M1141.5 191V219M1142.5 194V216M1143.5 191V219M1144.5 192V218M1145.5 191V219M1146.5 193V217M1147.5 192V218M1148.5 193V217M1149.5 193V217M1150.5 193V217M1151.5 192V218M1152.5 191V219M1153.5 191V219M1154.5 192V218M1155.5 190V220M1156.5 193V217M1157.5 191V219M1158.5 191V219M1159.5 191V219M1160.5 193V217M1161.5 190V220M1162.5 193V217M1163.5 192V218M1164.5 191V219M1165.5 194V216M1166.5 193V217M1167.5 191V219M1168.5 191V219M1169.5 191V219M1170.5 192V218M1171.5 191V219M1172.5 193V217M1173.5 192V218M1174.5 192V218M1175.5 193V217M1176.5 192V218M1177.5 191V219M1178.5 190V220M1179.5 194V216M1180.5 191V219M1181.5 194V216M1182.5 191V219M1183.5 192V218M1184.5 193V217M1185.5 193V217M1186.5 193V217M1187.5 193V217M1188.5 191V219M1189.5 191V219M1190.5 191V219M1191.5 193V217M1192.5 194V216M1193.5 191V219M1194.5 192V218M1195.5 191V219M1196.5 191V219M1197.5 193V217M1198.5 193V217M1199.5 193V217M1200.5 193V217M1201.5 193V217M1202.5 190V220M1203.5 192V218M1204.5 192V218M1205.5 193V217M1206.5 192V218M1207.5 190V220M1208.5 192V218M1209.5 190V220M1210.5 193V217M1211.5 191V219M1212.5 192V218M1213.5 190V220M1214.5 190V220M1215.5 191V219M1216.5 191V219M1217.5 192V218M1218.5 193V217M1219.5 193V217M1220.5 193V217M1221.5 192V218M1222.5 193V217M1223.5 192V218M1224.5 192V218M1225.5 190V220M1226.5 192V218M1227.5 192V218M1228.5 191V219M1229.5 192V218M1230.5 190V220M1231.5 192V218M1232.5 191V219M1233.5 192V218M1234.5 192V218M1235.5 192V218M1236.5 192V218M1237.5 191V219M1238.5 192V218M1239.5 191V219M1240.5 190V220M1241.5 192V218M1242.5 190V220M1243.5 193V217M1244.5 190V220M1245.5 192V218M1246.5 191V219M1247.5 190V220M1248.5 192V218M1249.5 192V218M1250.5 192V218M1251.5 191V219M1252.5 192V218M1253.5 193V217M1254.5 190V220M1255.5 192V218M1256.5 190V220M1257.5 192V218M1258.5 190V220M1259.5 190V220M1260.5 192V218M1261.5 192V218M1262.5 189V221M1263.5 190V220M1264.5 190V220M1265.5 191V219M1266.5 191V219M1267.5 189V221M1268.5 190V220M1269.5 190V220M1270.5 192V218M1271.5 193V217M1272.5 190V220M1273.5 193V217M1274.5 191V219M1275.5 191V219M1276.5 191V219M1277.5 189V221M1278.5 191V219M1279.5 190V220M1280.5 192V218M1281.5 191V219M1282.5 192V218M1283.5 191V219M1284.5 193V217M1285.5 189V221M1286.5 192V218M1287.5 192V218M1288.5 191V219M1289.5 192V218M1290.5 191V219M1291.5 192V218M1292.5 190V220M1293.5 189V221M1294.5 192V218M1295.5 191V219M1296.5 189V221M1297.5 189V221M1298.5 191V219M1299.5 190V220M1300.5 191V219M1301.5 191V219M1302.5 191V219M1303.5 189V221M1304.5 190V220M1305.5 192V218M1306.5 190V220M1307.5 192V218M1308.5 191V219M1309.5 190V220M1310.5 192V218M1311.5 190V220M1312.5 189V221M1313.5 191V219M1314.5 191V219M1315.5 192V218M1316.5 192V218M1317.5 192V218M1318.5 190V220M1319.5 190V220M1320.5 191V219M1321.5 190V220M1322.5 191V219M1323.5 191V219M1324.5 190V220M1325.5 192V218M1326.5 191V219M1327.5 191V219M1328.5 192V218M1329.5 190V220M1330.5 190V220M1331.5 192V218M1332.5 191V219M1333.5 192V218M1334.5 190V220M1335.5 192V218M1336.5 191V219M1337.5 191V219M1338.5 190V220M1339.5 190V220M1340.5 191V219M1341.5 191V219M1342.5 192V218M1343.5 192V218M1344.5 191V219M1345.5 190V220M1346.5 190V220M1347.5 192V218M1348.5 191V219M1349.5 192V218M1350.5 191V219M1351.5 191V219M1352.5 190V220M1353.5 192V218M1354.5 192V218M1355.5 192V218M1356.5 192V218M1357.5 191V219M1358.5 192V218M1359.5 192V218M1360.5 190V220M1361.5 191V219M1362.5 189V221M1363.5 191V219M1364.5 192V218M1365.5 190V220M1366.5 189V221M1367.5 191V219M1368.5 191V219M1369.5 190V220M1370.5 191V219M1371.5 192V218M1372.5 192V218M1373.5 192V218M1374.5 192V218M1375.5 190V220M1376.5 200V210M1377.5 201V209M1378.5 201V209M1379.5 190V220M1380.5 189V221M1381.5 192V218M1382.5 192V218M1383.5 192V218M1384.5 192V218M1385.5 192V210M1386.5 190V211M1387.5 190V220M1388.5 190V220M1389.5 191V219M1390.5 190V220M1391.5 192V218M1392.5 190V220M1393.5 193V217M1394.5 191V219M1395.5 192V218M1396.5 192V218M1397.5 192V218M1398.5 191V219M1399.5 190V220M1400.5 190V220M1401.5 192V218M1402.5 190V220M1403.5 190V220M1404.5 192V218M1405.5 191V219M1406.5 192V218M1407.5 191V219M1408.5 192V218M1409.5 189V221M1410.5 190V220M1411.5 192V218M1412.5 191V219M1413.5 190V220M1414.5 189V221M1415.5 189V221M1416.5 189V221M1417.5 190V220M1418.5 192V218M1419.5 189V221M1420.5 191V219M1421.5 192V218M1422.5 189V221M1423.5 191V219M1424.5 189V221M1425.5 189V221M1426.5 189V221M1427.5 189V221M1428.5 192V218M1429.5 189V221M1430.5 191V219M1431.5 191V219M1432.5 188V222M1433.5 188V222M1434.5 191V219M1435.5 190V220M1436.5 190V220M1437.5 192V218M1438.5 192V218M1439.5 191V219M1440.5 189V221M1441.5 189V221M1442.5 189V221M1443.5 190V220M1444.5 190V220M1445.5 189V221M1446.5 192V218M1447.5 189V221M1448.5 191V219M1449.5 189V221M1450.5 189V221M1451.5 192V218M1452.5 190V220M1453.5 192V218M1454.5 190V220M1455.5 189V221M1456.5 190V220M1457.5 190V220M1458.5 191V219M1459.5 190V220M1460.5 191V219M1461.5 189V221M1462.5 189V221M1463.5 190V220M1464.5 191V219M1465.5 191V219M1466.5 189V221M1467.5 192V218M1468.5 192V218M1469.5 188V222M1470.5 190V220M1471.5 191V219M1472.5 190V220M1473.5 190V220M1474.5 192V218M1475.5 192V218M1476.5 189V221M1477.5 189V221M1478.5 191V219M1479.5 192V218M1480.5 192V218M1481.5 192V218M1482.5 190V220M1483.5 190V220M1484.5 190V220M1485.5 190V220M1486.5 190V220M1487.5 192V218M1488.5 191V219M1489.5 190V220M1490.5 192V218M1491.5 191V219M1492.5 192V218M1493.5 189V221M1494.5 190V220M1495.5 191V219M1496.5 191V219M1497.5 191V219M1498.5 189V221M1499.5 191V219M1500.5 192V218M1501.5 191V219M1502.5 189V221M1503.5 190V220M1504.5 190V220M1505.5 189V221M1506.5 189V221M1507.5 192V218M1508.5 191V219M1509.5 192V218M1510.5 189V221M1511.5 191V219M1512.5 191V219M1513.5 189V221M1514.5 189V221M1515.5 191V219M1516.5 191V219M1517.5 192V218M1518.5 192V218M1519.5 192V218M1520.5 192V218M1521.5 190V220M1522.5 191V219M1523.5 190V220M1524.5 192V218M1525.5 191V219M1526.5 190V220M1527.5 192V218M1528.5 193V217M1529.5 190V220M1530.5 192V218M1531.5 192V218M1532.5 190V220M1533.5 191V219M1534.5 191V219M1535.5 192V218M1536.5 191V219M1537.5 193V217M1538.5 192V218M1539.5 191V219M1540.5 193V217M1541.5 190V220M1542.5 191V219M1543.5 191V219M1544.5 191V219M1545.5 190V220M1546.5 189V221M1547.5 192V218M1548.5 190V220M1549.5 192V218M1550.5 190V220M1551.5 191V219M1552.5 191V219M1553.5 190V220M1554.5 190V220M1555.5 193V217M1556.5 190V220M1557.5 193V217M1558.5 193V217M1559.5 190V220M1560.5 190V220M1561.5 191V219M1562.5 191V219M1563.5 192V218M1564.5 192V218M1565.5 190V220M1566.5 191V219M1567.5 192V218M1568.5 190V220M1569.5 193V217M1570.5 190V220M1571.5 191V219M1572.5 192V218M1573.5 190V220M1574.5 191V219M1575.5 192V218M1576.5 192V218M1577.5 190V220M1578.5 192V218M1579.5 191V219M1580.5 190V220M1581.5 192V218M1582.5 190V220M1583.5 191V219M1584.5 191V219M1585.5 190V220M1586.5 190V220M1587.5 192V218M1588.5 191V219M1589.5 191V219M1590.5 192V218M1591.5 191V219M1592.5 191V219M1593.5 189V221M1594.5 189V221M1595.5 191V219M1596.5 192V218M1597.5 189V221M1598.5 191V219M1599.5 189V221M1600.5 191V219M1601.5 191V219M1602.5 192V218M1603.5 192V218M1604.5 189V221M1605.5 190V220M1606.5 189V221M1607.5 192V218M1608.5 192V218M1609.5 189V221M1610.5 191V219M1611.5 191V219M1612.5 191V219M1613.5 189V221M1614.5 189V221M1615.5 189V221M1616.5 189V221M1617.5 192V218M1618.5 192V218M1619.5 191V219M1620.5 191V219M1621.5 191V219M1622.5 191V219M1623.5 191V219M1624.5 189V221M1625.5 191V219M1626.5 189V221M1627.5 192V218M1628.5 192V218M1629.5 189V221M1630.5 191V219M1631.5 189V221M1632.5 189V221M1633.5 191V219M1634.5 192V218M1635.5 191V219M1636.5 189V221M1637.5 189V221M1638.5 189V221M1639.5 190V220M1640.5 189V221M1641.5 192V218M1642.5 189V221M1643.5 189V221M1644.5 191V219M1645.5 191V219M1646.5 192V218M1647.5 192V218M1648.5 189V221M1649.5 190V220M1650.5 192V218M1651.5 189V221M1652.5 189V221M1653.5 190V220M1654.5 189V221M1655.5 190V220M1656.5 192V218M1657.5 191V219M1658.5 191V219M1659.5 189V221M1660.5 190V220M1661.5 190V220M1662.5 190V220M1663.5 190V220M1664.5 190V220M1665.5 191V219M1666.5 192V218M1667.5 193V217M1668.5 189V221M1669.5 190V220M1670.5 191V219M1671.5 190V220M1672.5 190V220M1673.5 190V220M1674.5 193V217M1675.5 191V219M1676.5 190V220M1677.5 192V218M1678.5 190V220M1679.5 189V221M1680.5 191V219M1681.5 192V218M1682.5 192V218M1683.5 191V219M1684.5 192V218M1685.5 193V217M1686.5 191V219M1687.5 192V218M1688.5 192V218M1689.5 190V220M1690.5 192V218M1691.5 190V220M1692.5 191V219M1693.5 192V218M1694.5 191V219M1695.5 190V220M1696.5 190V220M1697.5 191V219M1698.5 190V220M1699.5 191V219M1700.5 191V219M1701.5 192V218M1702.5 189V221M1703.5 190V220M1704.5 190V220M1705.5 192V218M1706.5 191V219M1707.5 191V219M1708.5 191V219M1709.5 189V221M1710.5 191V219M1711.5 193V217M1712.5 190V220M1713.5 189V221M1714.5 193V217M1715.5 190V220M1716.5 190V220M1717.5 192V218M1718.5 190V220M1719.5 193V217M1720.5 192V218M1721.5 189V221M1722.5 190V220M1723.5 192V218M1724.5 190V220M1725.5 190V220M1726.5 189V221M1727.5 189V221M1728.5 190V220M1729.5 191V219M1730.5 192V218M1731.5 190V220M1732.5 189V221M1733.5 190V220M1734.5 191V219M1735.5 190V220M1736.5 191V219M1737.5 191V219M1738.5 190V220M1739.5 190V220M1740.5 191V219M1741.5 191V219M1742.5 189V221M1743.5 191V219M1744.5 189V221M1745.5 189V221M1746.5 191V219M1747.5 192V218M1748.5 192V218M1749.5 190V220M1750.5 192V218M1751.5 189V221M1752.5 189V221M1753.5 191V219M1754.5 191V219M1755.5 192V218M1756.5 192V218M1757.5 190V220M1758.5 190V220M1759.5 189V221M1760.5 189V221M1761.5 189V221M1762.5 192V218M1763.5 191V219M1764.5 189V221M1765.5 190V220M1766.5 192V218M1767.5 189V221M1768.5 191V219M1769.5 191V219M1770.5 193V217M1771.5 190V220M1772.5 190V220M1773.5 189V221M1774.5 192V218M1775.5 190V220M1776.5 189V221M1777.5 192V218M1778.5 189V221M1779.5 191V219M1780.5 189V221M1781.5 190V220M1782.5 190V220M1783.5 191V219M1784.5 192V218M1785.5 190V220M1786.5 190V220M1787.5 192V218M1788.5 192V218M1789.5 191V219M1790.5 190V220M1791.5 192V218M1792.5 192V218M1793.5 192V218M1794.5 190V220M1795.5 192V218M1796.5 189V221M1797.5 192V218M1798.5 190V220M1799.5 192V218M1800.5 192V218M1801.5 190V220M1802.5 191V219M1803.5 190V220M1804.5 189V221M1805.5 190V220M1806.5 190V220M1807.5 191V219M1808.5 190V220M1809.5 201V209M1810.5 201V209M1811.5 191V219M1812.5 190V220M1813.5 191V219M1814.5 192V218M1815.5 193V217M1816.5 192V218M1817.5 194V216M1818.5 192V218M1819.5 191V219M1820.5 193V217M1821.5 192V218M1822.5 192V218M1823.5 195V215M1824.5 193V217M1825.5 193V217M1826.5 194V216M1827.5 194V216M1828.5 196V214M1829.5 195V215M1830.5 196V214M1831.5 196V214M1832.5 194V216M1833.5 195V215M1834.5 195V215M1835.5 197V213M1836.5 195V215M1837.5 196V214M1838.5 196V214M1839.5 197V213M1840.5 198V212M1841.5 198V212M1842.5 198V212M1843.5 199V211M1844.5 199V211M1845.5 200V210M1846.5 200V210M1847.5 200V210M1848.5 201V209M1849.5 201V209M1850.5 201V209M1851.5 202V208M1852.5 202V208M1853.5 202V208M1854.5 202V208M1855.5 203V207M1856.5 203V207M1857.5 203V207M1858.5 203V207M1859.5 203V207M1860.5 203V207M1861.5 203V207M1862.5 204V206M1863.5 204V206M1864.5 204V206M1865.5 204V206M1866.5 204V206M1867.5 204V206M1868.5 204V206M1869.5 204V206M1870.5 204V206M1871.5 204V206M1872.5 204V206M1873.5 204V206M1874.5 204V206M1875.5 204V206M1876.5 204V206M1877.5 204V206M1878.5 204V206M1879.5 204V206M1880.5 204V206M1881.5 204V206M1882.5 204V206M1883.5 204V206M1884.5 204V206M1885.5 204V206M1886.5 204V206M1887.5 204V206" stroke="#767cdc" stroke-width="1" shape-rendering="crispEdges"/></svg><svg class="ab" style="left:0;top:0" width="1919" height="440"><rect x="137" y="284" width="1751" height="143" fill="#a7a7b3"/><rect x="1888" y="284" width="9" height="143" fill="#dcdbe6"/><path d="M137.5 338V374M138.5 338V374M139.5 337V373M140.5 336V373M141.5 337V373M142.5 337V373M143.5 337V373M144.5 337V374M145.5 336V372M146.5 338V372M147.5 337V370M148.5 337V375M149.5 338V371M150.5 338V372M151.5 336V374M152.5 338V371M153.5 335V372M154.5 336V373M155.5 337V370M156.5 337V372M157.5 336V370M158.5 337V373M159.5 337V374M160.5 337V373M161.5 337V370M162.5 336V372M163.5 338V371M164.5 337V374M165.5 338V372M166.5 336V372M167.5 338V372M168.5 339V374M169.5 339V372M170.5 340V372M171.5 339V373M172.5 336V372M173.5 336V374M174.5 338V373M175.5 339V373M176.5 335V373M177.5 339V372M178.5 340V375M179.5 339V372M180.5 339V372M181.5 337V372M182.5 339V374M183.5 336V372M184.5 339V375M185.5 340V374M186.5 337V375M187.5 336V374M188.5 337V371M189.5 337V373M190.5 337V371M191.5 338V374M192.5 338V375M193.5 336V373M194.5 338V374M195.5 337V372M196.5 338V372M197.5 337V372M198.5 336V373M199.5 335V373M200.5 337V373M201.5 337V372M202.5 336V374M203.5 335V374M204.5 328V383M205.5 319V383M206.5 324V386M207.5 310V393M208.5 308V394M209.5 330V405M210.5 312V392M211.5 322V382M212.5 321V382M213.5 312V394M214.5 328V391M215.5 309V395M216.5 307V385M217.5 328V383M218.5 310V384M219.5 327V382M220.5 327V381M221.5 323V384M222.5 317V382M223.5 320V395M224.5 310V385M225.5 326V392M226.5 327V392M227.5 320V383M228.5 313V384M229.5 309V388M230.5 309V405M231.5 315V384M232.5 323V384M233.5 320V382M234.5 328V384M235.5 324V383M236.5 328V385M237.5 326V388M238.5 304V400M239.5 307V385M240.5 326V401M241.5 321V396M242.5 323V401M243.5 315V391M244.5 320V385M245.5 321V384M246.5 314V387M247.5 313V384M248.5 310V386M249.5 318V392M250.5 326V401M251.5 318V386M252.5 326V386M253.5 306V389M254.5 313V389M255.5 305V406M256.5 328V407M257.5 328V389M258.5 327V385M259.5 324V411M260.5 326V389M261.5 316V396M262.5 328V396M263.5 318V386M264.5 317V394M265.5 307V394M266.5 300V385M267.5 306V384M268.5 318V394M269.5 321V390M270.5 327V389M271.5 301V400M272.5 322V385M273.5 320V407M274.5 302V391M275.5 318V386M276.5 301V390M277.5 326V383M278.5 306V403M279.5 327V381M280.5 324V394M281.5 326V384M282.5 318V386M283.5 320V382M284.5 306V394M285.5 326V384M286.5 306V413M287.5 327V393M288.5 313V384M289.5 315V406M290.5 324V384M291.5 297V385M292.5 313V411M293.5 319V384M294.5 324V407M295.5 318V388M296.5 324V386M297.5 308V405M298.5 307V393M299.5 325V412M300.5 309V385M301.5 297V392M302.5 323V388M303.5 313V390M304.5 320V386M305.5 311V387M306.5 306V386M307.5 296V408M308.5 303V385M309.5 323V388M310.5 313V383M311.5 299V408M312.5 318V391M313.5 298V412M314.5 307V413M315.5 296V399M316.5 295V398M317.5 296V395M318.5 312V386M319.5 304V394M320.5 315V396M321.5 328V397M322.5 326V386M323.5 325V404M324.5 302V397M325.5 296V392M326.5 328V394M327.5 312V393M328.5 312V397M329.5 328V393M330.5 329V385M331.5 327V415M332.5 328V392M333.5 303V410M334.5 328V396M335.5 316V385M336.5 316V385M337.5 314V384M338.5 306V386M339.5 325V409M340.5 315V416M341.5 294V384M342.5 322V385M343.5 330V383M344.5 307V390M345.5 295V401M346.5 323V392M347.5 321V386M348.5 318V389M349.5 319V397M350.5 300V386M351.5 317V392M352.5 301V408M353.5 329V401M354.5 321V407M355.5 303V396M356.5 300V393M357.5 326V393M358.5 307V395M359.5 313V409M360.5 319V387M361.5 326V384M362.5 326V397M363.5 326V398M364.5 309V384M365.5 316V382M366.5 319V397M367.5 312V401M368.5 309V387M369.5 313V417M370.5 321V382M371.5 320V382M372.5 320V392M373.5 316V394M374.5 298V400M375.5 323V402M376.5 324V387M377.5 296V400M378.5 312V402M379.5 315V381M380.5 295V387M381.5 319V400M382.5 309V385M383.5 299V394M384.5 309V389M385.5 300V408M386.5 313V412M387.5 318V387M388.5 305V393M389.5 322V389M390.5 320V401M391.5 318V386M392.5 298V397M393.5 298V406M394.5 300V399M395.5 322V404M396.5 306V415M397.5 316V402M398.5 291V397M399.5 296V405M400.5 303V396M401.5 302V387M402.5 311V404M403.5 317V406M404.5 316V403M405.5 323V405M406.5 299V411M407.5 315V413M408.5 300V392M409.5 305V401M410.5 320V390M411.5 321V406M412.5 321V412M413.5 298V407M414.5 303V389M415.5 321V400M416.5 323V395M417.5 306V411M418.5 291V391M419.5 291V386M420.5 322V395M421.5 321V394M422.5 303V387M423.5 321V407M424.5 294V399M425.5 313V399M426.5 313V388M427.5 297V389M428.5 321V405M429.5 323V407M430.5 319V406M431.5 296V406M432.5 292V415M433.5 311V411M434.5 311V413M435.5 290V413M436.5 301V405M437.5 318V393M438.5 319V391M439.5 321V402M440.5 296V388M441.5 320V404M442.5 321V386M443.5 312V389M444.5 320V403M445.5 320V393M446.5 320V410M447.5 293V387M448.5 296V388M449.5 293V393M450.5 319V395M451.5 319V401M452.5 321V396M453.5 305V388M454.5 290V412M455.5 317V390M456.5 314V388M457.5 308V405M458.5 314V405M459.5 317V402M460.5 315V391M461.5 318V407M462.5 289V391M463.5 318V410M464.5 312V391M465.5 306V391M466.5 321V396M467.5 289V397M468.5 312V391M469.5 306V400M470.5 310V407M471.5 320V390M472.5 317V415M473.5 300V412M474.5 310V419M475.5 294V414M476.5 320V388M477.5 321V395M478.5 324V391M479.5 322V395M480.5 313V409M481.5 309V393M482.5 325V391M483.5 322V396M484.5 311V395M485.5 325V388M486.5 322V420M487.5 323V392M488.5 300V389M489.5 310V404M490.5 309V391M491.5 294V391M492.5 303V405M493.5 305V411M494.5 297V417M495.5 303V415M496.5 293V401M497.5 298V407M498.5 295V391M499.5 309V404M500.5 321V392M501.5 300V388M502.5 314V397M503.5 310V418M504.5 303V400M505.5 321V395M506.5 308V392M507.5 318V408M508.5 321V419M509.5 316V390M510.5 305V411M511.5 313V411M512.5 290V391M513.5 312V407M514.5 316V392M515.5 310V388M516.5 303V405M517.5 303V397M518.5 319V397M519.5 301V420M520.5 300V388M521.5 291V390M522.5 310V389M523.5 309V387M524.5 311V389M525.5 311V396M526.5 291V388M527.5 321V419M528.5 318V389M529.5 316V413M530.5 302V395M531.5 299V405M532.5 320V389M533.5 290V399M534.5 319V389M535.5 303V389M536.5 317V389M537.5 310V387M538.5 321V418M539.5 312V389M540.5 324V388M541.5 310V413M542.5 301V390M543.5 316V405M544.5 306V387M545.5 318V413M546.5 324V388M547.5 323V398M548.5 314V414M549.5 294V391M550.5 322V394M551.5 291V392M552.5 322V395M553.5 350V360M554.5 351V359M555.5 351V359M556.5 323V412M557.5 297V400M558.5 313V399M559.5 311V387M560.5 344V372M561.5 342V374M562.5 344V366M563.5 343V370M564.5 337V367M565.5 344V368M566.5 343V371M567.5 322V387M568.5 318V387M569.5 304V390M570.5 319V390M571.5 322V387M572.5 325V389M573.5 321V411M574.5 322V390M575.5 319V396M576.5 324V415M577.5 322V406M578.5 324V418M579.5 304V398M580.5 322V391M581.5 323V400M582.5 308V411M583.5 324V416M584.5 320V389M585.5 311V406M586.5 301V416M587.5 311V391M588.5 325V390M589.5 303V393M590.5 316V390M591.5 310V404M592.5 323V407M593.5 322V391M594.5 297V399M595.5 317V391M596.5 325V392M597.5 315V417M598.5 298V391M599.5 313V387M600.5 314V389M601.5 321V399M602.5 306V415M603.5 324V387M604.5 296V403M605.5 299V405M606.5 307V387M607.5 300V389M608.5 316V408M609.5 293V388M610.5 295V408M611.5 297V417M612.5 324V388M613.5 303V385M614.5 318V397M615.5 293V387M616.5 324V407M617.5 320V405M618.5 320V415M619.5 320V386M620.5 301V407M621.5 305V393M622.5 296V399M623.5 297V385M624.5 316V403M625.5 318V411M626.5 307V416M627.5 301V387M628.5 320V388M629.5 324V415M630.5 324V387M631.5 324V389M632.5 322V397M633.5 301V389M634.5 323V393M635.5 294V398M636.5 323V388M637.5 323V388M638.5 315V406M639.5 318V386M640.5 307V403M641.5 311V415M642.5 323V385M643.5 308V391M644.5 324V387M645.5 324V397M646.5 304V403M647.5 296V403M648.5 313V385M649.5 316V386M650.5 296V383M651.5 314V402M652.5 319V383M653.5 322V388M654.5 310V396M655.5 306V408M656.5 324V381M657.5 319V394M658.5 325V393M659.5 317V389M660.5 324V410M661.5 316V389M662.5 302V394M663.5 327V406M664.5 326V382M665.5 311V392M666.5 306V397M667.5 324V388M668.5 323V401M669.5 302V381M670.5 303V385M671.5 326V407M672.5 323V383M673.5 319V404M674.5 301V382M675.5 312V390M676.5 325V385M677.5 320V388M678.5 321V385M679.5 324V382M680.5 309V384M681.5 319V384M682.5 315V381M683.5 316V409M684.5 319V385M685.5 323V387M686.5 312V407M687.5 323V384M688.5 309V384M689.5 316V386M690.5 312V386M691.5 305V393M692.5 323V410M693.5 321V413M694.5 297V382M695.5 308V382M696.5 305V384M697.5 323V383M698.5 325V384M699.5 315V395M700.5 323V384M701.5 293V388M702.5 320V396M703.5 309V416M704.5 325V385M705.5 323V403M706.5 313V389M707.5 324V397M708.5 315V401M709.5 318V392M710.5 298V414M711.5 295V417M712.5 303V396M713.5 322V395M714.5 316V384M715.5 321V384M716.5 315V384M717.5 301V398M718.5 295V412M719.5 323V396M720.5 303V404M721.5 317V405M722.5 309V391M723.5 313V387M724.5 307V408M725.5 320V386M726.5 304V387M727.5 303V399M728.5 322V388M729.5 295V387M730.5 324V406M731.5 291V392M732.5 322V414M733.5 299V394M734.5 300V408M735.5 294V389M736.5 313V401M737.5 307V401M738.5 324V386M739.5 314V420M740.5 316V406M741.5 306V405M742.5 324V399M743.5 319V386M744.5 295V391M745.5 304V401M746.5 318V394M747.5 310V390M748.5 323V393M749.5 326V417M750.5 324V413M751.5 313V388M752.5 322V415M753.5 312V412M754.5 323V389M755.5 323V403M756.5 302V412M757.5 325V390M758.5 322V389M759.5 297V403M760.5 320V393M761.5 303V394M762.5 323V391M763.5 315V415M764.5 306V416M765.5 323V397M766.5 316V408M767.5 309V408M768.5 317V405M769.5 324V400M770.5 309V391M771.5 306V392M772.5 310V391M773.5 324V389M774.5 307V406M775.5 306V405M776.5 322V403M777.5 309V396M778.5 309V403M779.5 322V400M780.5 307V413M781.5 310V389M782.5 311V393M783.5 293V389M784.5 319V405M785.5 312V392M786.5 313V392M787.5 301V390M788.5 322V417M789.5 318V410M790.5 290V397M791.5 318V389M792.5 309V401M793.5 310V401M794.5 304V414M795.5 300V409M796.5 319V399M797.5 316V417M798.5 310V391M799.5 318V408M800.5 297V392M801.5 313V391M802.5 319V391M803.5 312V395M804.5 303V405M805.5 298V392M806.5 316V392M807.5 318V406M808.5 321V400M809.5 297V409M810.5 314V403M811.5 299V389M812.5 310V397M813.5 292V416M814.5 307V406M815.5 312V392M816.5 290V416M817.5 321V389M818.5 311V420M819.5 309V392M820.5 319V396M821.5 307V394M822.5 311V420M823.5 318V408M824.5 293V417M825.5 296V407M826.5 301V412M827.5 306V420M828.5 318V395M829.5 310V395M830.5 304V413M831.5 297V418M832.5 308V391M833.5 295V391M834.5 320V393M835.5 315V398M836.5 317V400M837.5 307V393M838.5 292V398M839.5 292V418M840.5 320V396M841.5 319V401M842.5 320V392M843.5 296V408M844.5 293V411M845.5 298V392M846.5 304V408M847.5 294V391M848.5 302V412M849.5 307V411M850.5 295V395M851.5 306V405M852.5 317V397M853.5 313V395M854.5 293V391M855.5 300V389M856.5 310V416M857.5 304V388M858.5 298V397M859.5 315V409M860.5 350V360M861.5 351V359M862.5 350V360M863.5 319V416M864.5 319V389M865.5 317V388M866.5 290V389M867.5 291V396M868.5 304V399M869.5 320V404M870.5 318V393M871.5 351V359M872.5 350V360M873.5 350V360M874.5 307V416M875.5 298V405M876.5 320V406M877.5 320V396M878.5 300V392M879.5 299V392M880.5 318V393M881.5 301V401M882.5 317V394M883.5 301V420M884.5 308V415M885.5 304V408M886.5 314V400M887.5 316V389M888.5 298V392M889.5 292V411M890.5 313V402M891.5 311V391M892.5 309V401M893.5 294V406M894.5 321V398M895.5 298V398M896.5 317V418M897.5 323V396M898.5 313V391M899.5 305V388M900.5 321V416M901.5 310V386M902.5 322V388M903.5 322V386M904.5 315V392M905.5 296V414M906.5 295V391M907.5 318V402M908.5 316V393M909.5 321V409M910.5 322V387M911.5 297V419M912.5 310V388M913.5 320V389M914.5 299V417M915.5 300V417M916.5 306V420M917.5 309V389M918.5 310V420M919.5 319V397M920.5 313V399M921.5 298V407M922.5 317V396M923.5 313V391M924.5 318V399M925.5 302V392M926.5 293V408M927.5 315V415M928.5 314V390M929.5 293V417M930.5 300V396M931.5 318V391M932.5 318V415M933.5 300V402M934.5 291V411M935.5 320V411M936.5 302V393M937.5 313V393M938.5 320V408M939.5 317V411M940.5 316V392M941.5 306V414M942.5 305V415M943.5 319V407M944.5 319V397M945.5 307V389M946.5 306V386M947.5 304V390M948.5 318V386M949.5 323V413M950.5 324V414M951.5 299V385M952.5 311V385M953.5 325V383M954.5 306V409M955.5 321V384M956.5 324V385M957.5 310V404M958.5 324V385M959.5 302V386M960.5 312V405M961.5 308V386M962.5 324V404M963.5 318V387M964.5 319V401M965.5 323V413M966.5 312V385M967.5 321V395M968.5 324V388M969.5 326V414M970.5 326V407M971.5 303V412M972.5 297V388M973.5 313V390M974.5 310V400M975.5 296V397M976.5 322V390M977.5 324V387M978.5 312V395M979.5 303V386M980.5 299V405M981.5 310V388M982.5 300V406M983.5 322V390M984.5 323V388M985.5 300V410M986.5 322V389M987.5 319V393M988.5 319V396M989.5 324V386M990.5 324V386M991.5 316V387M992.5 302V395M993.5 325V400M994.5 324V394M995.5 315V383M996.5 326V402M997.5 315V395M998.5 325V398M999.5 320V393M1000.5 321V393M1001.5 312V380M1002.5 327V381M1003.5 329V379M1004.5 324V389M1005.5 331V380M1006.5 331V378M1007.5 323V378M1008.5 325V381M1009.5 330V377M1010.5 333V378M1011.5 333V383M1012.5 332V378M1013.5 325V379M1014.5 322V374M1015.5 333V383M1016.5 337V373M1017.5 329V384M1018.5 335V375M1019.5 331V374M1020.5 338V379M1021.5 335V379M1022.5 338V374M1023.5 339V373M1024.5 332V378M1025.5 338V372M1026.5 340V378M1027.5 336V372M1028.5 336V371M1029.5 334V370M1030.5 339V371M1031.5 339V376M1032.5 335V370M1033.5 340V370M1034.5 342V371M1035.5 343V371M1036.5 340V372M1037.5 339V373M1038.5 342V368M1039.5 342V368M1040.5 341V371M1041.5 343V372M1042.5 341V372M1043.5 342V372M1044.5 338V370M1045.5 338V368M1046.5 341V370M1047.5 342V369M1048.5 337V370M1049.5 337V371M1050.5 339V371M1051.5 341V370M1052.5 338V370M1053.5 342V372M1054.5 338V369M1055.5 339V370M1056.5 341V370M1057.5 337V369M1058.5 339V370M1059.5 341V372M1060.5 339V371M1061.5 340V369M1062.5 340V371M1063.5 338V369M1064.5 338V369M1065.5 342V368M1066.5 342V369M1067.5 341V373M1068.5 340V369M1069.5 341V370M1070.5 339V372M1071.5 339V371M1072.5 340V369M1073.5 341V368M1074.5 341V370M1075.5 342V369M1076.5 340V371M1077.5 339V370M1078.5 340V369M1079.5 339V371M1080.5 339V371M1081.5 339V370M1082.5 342V372M1083.5 340V370M1084.5 342V371M1085.5 339V372M1086.5 339V370M1087.5 341V369M1088.5 341V369M1089.5 340V368M1090.5 338V371M1091.5 339V372M1092.5 340V372M1093.5 340V371M1094.5 340V369M1095.5 339V371M1096.5 340V368M1097.5 338V370M1098.5 338V369M1099.5 341V369M1100.5 339V370M1101.5 338V372M1102.5 339V369M1103.5 340V368M1104.5 338V369M1105.5 341V371M1106.5 341V369M1107.5 339V368M1108.5 341V369M1109.5 341V370M1110.5 340V371M1111.5 339V369M1112.5 342V368M1113.5 341V369M1114.5 342V368M1115.5 341V371M1116.5 340V369M1117.5 339V368M1118.5 342V370M1119.5 343V371M1120.5 343V369M1121.5 339V367M1122.5 341V370M1123.5 344V368M1124.5 343V370M1125.5 340V369M1126.5 344V370M1127.5 343V370M1128.5 341V368M1129.5 343V367M1130.5 343V368M1131.5 342V377M1132.5 332V373M1133.5 339V371M1134.5 337V389M1135.5 310V405M1136.5 329V402M1137.5 337V406M1138.5 336V405M1139.5 304V380M1140.5 324V377M1141.5 320V372M1142.5 299V384M1143.5 335V409M1144.5 332V373M1145.5 296V374M1146.5 336V398M1147.5 320V375M1148.5 331V401M1149.5 326V408M1150.5 338V408M1151.5 326V394M1152.5 336V381M1153.5 335V380M1154.5 324V373M1155.5 326V376M1156.5 302V374M1157.5 313V377M1158.5 331V408M1159.5 300V373M1160.5 313V376M1161.5 314V385M1162.5 335V383M1163.5 302V384M1164.5 316V376M1165.5 335V390M1166.5 303V384M1167.5 335V409M1168.5 302V394M1169.5 334V398M1170.5 298V380M1171.5 318V380M1172.5 329V384M1173.5 298V374M1174.5 299V405M1175.5 320V397M1176.5 309V376M1177.5 308V389M1178.5 334V413M1179.5 310V375M1180.5 312V375M1181.5 336V405M1182.5 315V377M1183.5 294V376M1184.5 336V377M1185.5 294V384M1186.5 334V393M1187.5 335V379M1188.5 336V407M1189.5 296V411M1190.5 335V374M1191.5 335V400M1192.5 302V376M1193.5 305V374M1194.5 302V376M1195.5 296V402M1196.5 317V380M1197.5 329V374M1198.5 314V407M1199.5 313V379M1200.5 335V387M1201.5 335V398M1202.5 302V373M1203.5 313V375M1204.5 336V384M1205.5 337V374M1206.5 296V394M1207.5 333V403M1208.5 317V377M1209.5 332V407M1210.5 296V382M1211.5 337V374M1212.5 316V376M1213.5 335V398M1214.5 327V376M1215.5 297V372M1216.5 318V406M1217.5 325V379M1218.5 335V373M1219.5 305V407M1220.5 336V386M1221.5 322V405M1222.5 307V405M1223.5 297V375M1224.5 322V395M1225.5 298V402M1226.5 308V393M1227.5 335V411M1228.5 321V376M1229.5 302V376M1230.5 328V378M1231.5 301V397M1232.5 331V382M1233.5 298V391M1234.5 328V394M1235.5 301V406M1236.5 292V415M1237.5 317V386M1238.5 304V387M1239.5 322V385M1240.5 321V417M1241.5 312V408M1242.5 318V386M1243.5 311V388M1244.5 299V384M1245.5 308V386M1246.5 293V404M1247.5 321V396M1248.5 314V383M1249.5 307V400M1250.5 300V398M1251.5 301V391M1252.5 311V386M1253.5 307V384M1254.5 295V419M1255.5 321V386M1256.5 292V385M1257.5 295V386M1258.5 317V404M1259.5 322V417M1260.5 290V387M1261.5 300V392M1262.5 319V401M1263.5 316V386M1264.5 317V391M1265.5 309V393M1266.5 307V386M1267.5 312V397M1268.5 321V415M1269.5 322V400M1270.5 321V407M1271.5 318V408M1272.5 293V392M1273.5 317V402M1274.5 294V402M1275.5 318V413M1276.5 318V393M1277.5 320V410M1278.5 292V401M1279.5 322V395M1280.5 323V392M1281.5 322V399M1282.5 323V393M1283.5 314V414M1284.5 322V391M1285.5 296V418M1286.5 315V397M1287.5 323V396M1288.5 320V409M1289.5 310V392M1290.5 313V408M1291.5 316V420M1292.5 293V419M1293.5 317V393M1294.5 317V414M1295.5 297V392M1296.5 305V411M1297.5 317V397M1298.5 320V392M1299.5 303V419M1300.5 317V403M1301.5 311V402M1302.5 321V419M1303.5 320V412M1304.5 299V392M1305.5 323V412M1306.5 302V411M1307.5 321V394M1308.5 313V407M1309.5 299V398M1310.5 317V399M1311.5 307V389M1312.5 299V399M1313.5 312V412M1314.5 293V406M1315.5 299V419M1316.5 320V405M1317.5 292V390M1318.5 320V387M1319.5 298V407M1320.5 291V388M1321.5 320V408M1322.5 307V413M1323.5 322V395M1324.5 302V389M1325.5 321V406M1326.5 310V391M1327.5 292V393M1328.5 305V389M1329.5 301V393M1330.5 320V407M1331.5 297V389M1332.5 313V394M1333.5 314V393M1334.5 295V406M1335.5 318V391M1336.5 305V387M1337.5 319V408M1338.5 301V408M1339.5 321V392M1340.5 293V391M1341.5 293V421M1342.5 290V390M1343.5 309V394M1344.5 299V406M1345.5 318V404M1346.5 305V408M1347.5 308V398M1348.5 290V388M1349.5 302V392M1350.5 296V415M1351.5 321V408M1352.5 316V413M1353.5 317V394M1354.5 310V403M1355.5 295V391M1356.5 318V413M1357.5 303V392M1358.5 301V421M1359.5 309V419M1360.5 298V418M1361.5 296V395M1362.5 316V392M1363.5 303V397M1364.5 316V419M1365.5 316V405M1366.5 305V407M1367.5 304V389M1368.5 303V395M1369.5 290V410M1370.5 312V403M1371.5 314V420M1372.5 298V389M1373.5 315V391M1374.5 291V416M1375.5 312V401M1376.5 349V361M1377.5 350V360M1378.5 350V360M1379.5 298V388M1380.5 290V416M1381.5 319V411M1382.5 303V390M1383.5 319V392M1384.5 316V405M1385.5 316V393M1386.5 350V360M1387.5 350V360M1388.5 350V360M1389.5 316V391M1390.5 316V415M1391.5 295V400M1392.5 308V418M1393.5 302V416M1394.5 299V389M1395.5 300V420M1396.5 318V393M1397.5 318V395M1398.5 293V405M1399.5 303V418M1400.5 299V409M1401.5 292V415M1402.5 305V411M1403.5 304V404M1404.5 299V416M1405.5 317V418M1406.5 318V392M1407.5 310V398M1408.5 316V389M1409.5 320V393M1410.5 310V394M1411.5 320V389M1412.5 311V388M1413.5 305V392M1414.5 294V391M1415.5 290V394M1416.5 292V408M1417.5 310V404M1418.5 316V420M1419.5 319V404M1420.5 304V401M1421.5 310V394M1422.5 293V421M1423.5 318V389M1424.5 301V391M1425.5 317V389M1426.5 316V405M1427.5 311V411M1428.5 300V407M1429.5 298V395M1430.5 311V405M1431.5 308V389M1432.5 292V409M1433.5 307V403M1434.5 319V409M1435.5 300V420M1436.5 301V419M1437.5 317V418M1438.5 293V417M1439.5 306V389M1440.5 320V417M1441.5 312V420M1442.5 294V415M1443.5 320V413M1444.5 307V390M1445.5 319V394M1446.5 314V416M1447.5 290V391M1448.5 293V406M1449.5 315V412M1450.5 318V388M1451.5 304V408M1452.5 308V391M1453.5 319V400M1454.5 319V395M1455.5 306V419M1456.5 319V388M1457.5 321V390M1458.5 314V394M1459.5 320V390M1460.5 315V390M1461.5 290V409M1462.5 289V407M1463.5 301V410M1464.5 304V400M1465.5 318V391M1466.5 320V393M1467.5 323V390M1468.5 308V406M1469.5 291V408M1470.5 301V409M1471.5 312V406M1472.5 318V393M1473.5 318V412M1474.5 320V414M1475.5 295V412M1476.5 324V393M1477.5 323V405M1478.5 311V399M1479.5 313V397M1480.5 307V405M1481.5 322V396M1482.5 310V392M1483.5 320V389M1484.5 323V397M1485.5 320V398M1486.5 306V388M1487.5 322V388M1488.5 306V391M1489.5 297V406M1490.5 292V406M1491.5 308V391M1492.5 310V391M1493.5 320V407M1494.5 322V414M1495.5 311V389M1496.5 298V388M1497.5 313V388M1498.5 319V396M1499.5 319V389M1500.5 293V420M1501.5 308V390M1502.5 296V389M1503.5 313V416M1504.5 321V409M1505.5 291V396M1506.5 300V403M1507.5 306V396M1508.5 321V394M1509.5 293V391M1510.5 320V392M1511.5 308V407M1512.5 304V402M1513.5 321V392M1514.5 320V406M1515.5 295V391M1516.5 314V390M1517.5 317V389M1518.5 320V392M1519.5 316V407M1520.5 321V408M1521.5 314V414M1522.5 323V391M1523.5 302V395M1524.5 320V392M1525.5 319V405M1526.5 322V394M1527.5 309V395M1528.5 318V409M1529.5 309V398M1530.5 305V393M1531.5 291V413M1532.5 306V397M1533.5 295V407M1534.5 310V400M1535.5 298V404M1536.5 316V390M1537.5 292V394M1538.5 305V394M1539.5 317V421M1540.5 319V391M1541.5 307V399M1542.5 311V392M1543.5 306V413M1544.5 308V410M1545.5 313V395M1546.5 317V418M1547.5 315V404M1548.5 299V398M1549.5 313V414M1550.5 310V417M1551.5 317V392M1552.5 293V404M1553.5 296V394M1554.5 320V398M1555.5 295V417M1556.5 305V413M1557.5 298V406M1558.5 308V407M1559.5 295V394M1560.5 321V417M1561.5 308V418M1562.5 320V392M1563.5 310V400M1564.5 308V407M1565.5 319V394M1566.5 320V410M1567.5 306V392M1568.5 304V397M1569.5 318V416M1570.5 303V401M1571.5 319V403M1572.5 293V401M1573.5 304V404M1574.5 310V400M1575.5 318V412M1576.5 302V414M1577.5 320V393M1578.5 307V395M1579.5 318V413M1580.5 312V413M1581.5 320V391M1582.5 298V404M1583.5 313V394M1584.5 294V414M1585.5 304V401M1586.5 322V396M1587.5 298V392M1588.5 321V415M1589.5 318V417M1590.5 320V395M1591.5 301V395M1592.5 316V402M1593.5 318V411M1594.5 294V395M1595.5 309V410M1596.5 292V392M1597.5 297V393M1598.5 297V421M1599.5 296V398M1600.5 313V401M1601.5 321V392M1602.5 318V394M1603.5 295V396M1604.5 298V418M1605.5 319V393M1606.5 322V395M1607.5 305V393M1608.5 302V405M1609.5 323V405M1610.5 323V397M1611.5 292V392M1612.5 303V397M1613.5 320V391M1614.5 307V419M1615.5 311V389M1616.5 306V400M1617.5 295V394M1618.5 306V413M1619.5 315V396M1620.5 320V408M1621.5 310V420M1622.5 305V391M1623.5 314V390M1624.5 307V391M1625.5 317V417M1626.5 307V391M1627.5 306V417M1628.5 321V389M1629.5 321V387M1630.5 300V414M1631.5 319V400M1632.5 299V391M1633.5 322V389M1634.5 296V393M1635.5 320V399M1636.5 319V406M1637.5 293V418M1638.5 297V390M1639.5 312V387M1640.5 312V392M1641.5 290V391M1642.5 323V409M1643.5 298V391M1644.5 314V408M1645.5 320V392M1646.5 296V397M1647.5 320V391M1648.5 320V410M1649.5 320V387M1650.5 321V409M1651.5 290V419M1652.5 322V391M1653.5 323V394M1654.5 324V387M1655.5 301V391M1656.5 296V401M1657.5 308V391M1658.5 320V391M1659.5 311V389M1660.5 323V391M1661.5 307V401M1662.5 320V391M1663.5 322V420M1664.5 314V402M1665.5 300V404M1666.5 320V389M1667.5 317V393M1668.5 323V404M1669.5 313V407M1670.5 321V408M1671.5 321V396M1672.5 320V392M1673.5 302V390M1674.5 323V416M1675.5 320V402M1676.5 298V396M1677.5 299V397M1678.5 320V404M1679.5 300V399M1680.5 310V390M1681.5 314V401M1682.5 308V415M1683.5 305V394M1684.5 291V386M1685.5 304V403M1686.5 317V392M1687.5 320V408M1688.5 318V391M1689.5 307V420M1690.5 318V409M1691.5 309V389M1692.5 320V388M1693.5 318V402M1694.5 315V392M1695.5 319V416M1696.5 303V401M1697.5 304V389M1698.5 311V393M1699.5 312V405M1700.5 319V393M1701.5 301V389M1702.5 322V411M1703.5 320V386M1704.5 323V387M1705.5 323V393M1706.5 321V394M1707.5 322V388M1708.5 310V410M1709.5 320V403M1710.5 306V401M1711.5 321V391M1712.5 322V389M1713.5 325V387M1714.5 323V387M1715.5 323V387M1716.5 322V414M1717.5 324V413M1718.5 324V386M1719.5 308V387M1720.5 302V413M1721.5 316V392M1722.5 316V388M1723.5 321V406M1724.5 299V414M1725.5 317V413M1726.5 312V386M1727.5 314V387M1728.5 319V390M1729.5 316V390M1730.5 307V402M1731.5 317V391M1732.5 308V411M1733.5 305V401M1734.5 305V393M1735.5 305V396M1736.5 303V400M1737.5 291V395M1738.5 318V388M1739.5 293V391M1740.5 318V389M1741.5 293V420M1742.5 293V412M1743.5 319V403M1744.5 319V393M1745.5 305V390M1746.5 298V412M1747.5 319V388M1748.5 290V391M1749.5 308V388M1750.5 308V388M1751.5 309V406M1752.5 318V413M1753.5 300V391M1754.5 312V389M1755.5 303V400M1756.5 306V402M1757.5 319V389M1758.5 318V414M1759.5 313V411M1760.5 307V401M1761.5 319V404M1762.5 294V397M1763.5 307V395M1764.5 317V394M1765.5 311V400M1766.5 313V390M1767.5 297V405M1768.5 310V405M1769.5 317V394M1770.5 309V409M1771.5 303V404M1772.5 300V413M1773.5 302V413M1774.5 305V394M1775.5 317V396M1776.5 292V393M1777.5 318V403M1778.5 306V398M1779.5 303V407M1780.5 317V410M1781.5 317V398M1782.5 317V420M1783.5 317V394M1784.5 311V392M1785.5 297V415M1786.5 305V399M1787.5 312V409M1788.5 296V418M1789.5 305V394M1790.5 311V414M1791.5 318V399M1792.5 317V391M1793.5 295V415M1794.5 304V413M1795.5 303V392M1796.5 309V401M1797.5 291V396M1798.5 321V393M1799.5 321V402M1800.5 302V395M1801.5 291V419M1802.5 303V394M1803.5 301V393M1804.5 307V399M1805.5 307V395M1806.5 298V394M1807.5 320V394M1808.5 303V392M1809.5 346V366M1810.5 345V365M1811.5 317V404M1812.5 303V411M1813.5 309V405M1814.5 313V391M1815.5 321V402M1816.5 321V388M1817.5 301V388M1818.5 323V398M1819.5 323V386M1820.5 321V388M1821.5 313V398M1822.5 325V390M1823.5 316V385M1824.5 321V386M1825.5 319V383M1826.5 325V381M1827.5 327V385M1828.5 325V382M1829.5 326V380M1830.5 334V378M1831.5 327V382M1832.5 330V379M1833.5 334V382M1834.5 335V379M1835.5 333V379M1836.5 330V375M1837.5 336V375M1838.5 339V378M1839.5 339V375M1840.5 336V370M1841.5 339V371M1842.5 343V371M1843.5 342V367M1844.5 342V368M1845.5 345V368M1846.5 341V369M1847.5 346V367M1848.5 345V365M1849.5 347V365M1850.5 346V364M1851.5 347V362M1852.5 349V362M1853.5 348V361M1854.5 349V361M1855.5 350V361M1856.5 350V362M1857.5 350V360M1858.5 351V359M1859.5 351V359M1860.5 352V359M1861.5 352V358M1862.5 352V358M1863.5 352V358M1864.5 353V357M1865.5 353V357M1866.5 353V357M1867.5 353V357M1868.5 354V357M1869.5 353V356M1870.5 354V357M1871.5 354V356M1872.5 353V356M1873.5 354V357M1874.5 354V356M1875.5 354V356M1876.5 354V356M1877.5 354V356M1878.5 354V356M1879.5 354V356M1880.5 354V356M1881.5 354V356M1882.5 354V356M1883.5 354V356M1884.5 354V356M1885.5 354V356M1886.5 354V356M1887.5 354V356" stroke="#4551c9" stroke-width="1" shape-rendering="crispEdges"/><path d="M137.5 348V362M138.5 348V362M139.5 348V362M140.5 348V362M141.5 348V362M142.5 348V362M143.5 347V363M144.5 348V362M145.5 348V362M146.5 348V362M147.5 347V363M148.5 347V363M149.5 348V362M150.5 348V362M151.5 348V362M152.5 347V363M153.5 348V362M154.5 348V362M155.5 349V361M156.5 347V363M157.5 348V362M158.5 348V362M159.5 349V361M160.5 348V362M161.5 348V362M162.5 348V362M163.5 348V362M164.5 348V362M165.5 349V361M166.5 349V361M167.5 349V361M168.5 348V362M169.5 349V361M170.5 348V362M171.5 347V363M172.5 349V361M173.5 347V363M174.5 347V363M175.5 349V361M176.5 348V362M177.5 347V363M178.5 348V362M179.5 348V362M180.5 348V362M181.5 348V362M182.5 348V362M183.5 349V361M184.5 347V363M185.5 348V362M186.5 348V362M187.5 349V361M188.5 349V361M189.5 349V361M190.5 348V362M191.5 348V362M192.5 348V362M193.5 347V363M194.5 347V363M195.5 348V362M196.5 348V362M197.5 348V362M198.5 347V363M199.5 347V363M200.5 348V362M201.5 349V361M202.5 348V362M203.5 348V362M204.5 346V364M205.5 347V363M206.5 344V366M207.5 346V364M208.5 345V365M209.5 344V366M210.5 345V365M211.5 346V364M212.5 345V365M213.5 344V366M214.5 344V366M215.5 346V364M216.5 344V366M217.5 344V366M218.5 345V365M219.5 345V365M220.5 346V364M221.5 346V364M222.5 345V365M223.5 346V364M224.5 346V364M225.5 345V365M226.5 344V366M227.5 344V366M228.5 344V366M229.5 343V367M230.5 346V364M231.5 345V365M232.5 344V366M233.5 343V367M234.5 344V366M235.5 344V366M236.5 343V367M237.5 345V365M238.5 345V365M239.5 344V366M240.5 343V367M241.5 344V366M242.5 343V367M243.5 345V365M244.5 345V365M245.5 345V365M246.5 344V366M247.5 345V365M248.5 345V365M249.5 343V367M250.5 343V367M251.5 343V367M252.5 343V367M253.5 345V365M254.5 345V365M255.5 344V366M256.5 344V366M257.5 344V366M258.5 343V367M259.5 345V365M260.5 344V366M261.5 344V366M262.5 344V366M263.5 345V365M264.5 345V365M265.5 343V367M266.5 343V367M267.5 345V365M268.5 345V365M269.5 345V365M270.5 344V366M271.5 344V366M272.5 345V365M273.5 344V366M274.5 343V367M275.5 345V365M276.5 344V366M277.5 345V365M278.5 344V366M279.5 343V367M280.5 344V366M281.5 345V365M282.5 344V366M283.5 344V366M284.5 345V365M285.5 344V366M286.5 344V366M287.5 345V365M288.5 345V365M289.5 345V365M290.5 344V366M291.5 343V367M292.5 344V366M293.5 345V365M294.5 343V367M295.5 344V366M296.5 343V367M297.5 343V367M298.5 344V366M299.5 345V365M300.5 343V367M301.5 344V366M302.5 343V367M303.5 344V366M304.5 343V367M305.5 343V367M306.5 345V365M307.5 344V366M308.5 343V367M309.5 343V367M310.5 343V367M311.5 345V365M312.5 345V365M313.5 344V366M314.5 345V365M315.5 343V367M316.5 345V365M317.5 342V368M318.5 344V366M319.5 342V368M320.5 343V367M321.5 343V367M322.5 345V365M323.5 344V366M324.5 345V365M325.5 344V366M326.5 343V367M327.5 344V366M328.5 344V366M329.5 342V368M330.5 343V367M331.5 344V366M332.5 344V366M333.5 343V367M334.5 344V366M335.5 344V366M336.5 343V367M337.5 343V367M338.5 344V366M339.5 344V366M340.5 345V365M341.5 344V366M342.5 343V367M343.5 345V365M344.5 343V367M345.5 345V365M346.5 345V365M347.5 345V365M348.5 343V367M349.5 345V365M350.5 345V365M351.5 343V367M352.5 345V365M353.5 343V367M354.5 343V367M355.5 344V366M356.5 345V365M357.5 345V365M358.5 344V366M359.5 345V365M360.5 345V365M361.5 345V365M362.5 345V365M363.5 344V366M364.5 345V365M365.5 343V367M366.5 344V366M367.5 342V368M368.5 344V366M369.5 343V367M370.5 345V365M371.5 344V366M372.5 343V367M373.5 343V367M374.5 345V365M375.5 343V367M376.5 344V366M377.5 345V365M378.5 345V365M379.5 344V366M380.5 344V366M381.5 342V368M382.5 343V367M383.5 342V368M384.5 343V367M385.5 342V368M386.5 345V365M387.5 344V366M388.5 342V368M389.5 342V368M390.5 342V368M391.5 342V368M392.5 343V367M393.5 343V367M394.5 343V367M395.5 344V366M396.5 342V368M397.5 342V368M398.5 344V366M399.5 344V366M400.5 342V368M401.5 341V369M402.5 344V366M403.5 343V367M404.5 343V367M405.5 341V369M406.5 343V367M407.5 342V368M408.5 344V366M409.5 344V366M410.5 343V367M411.5 343V367M412.5 343V367M413.5 341V369M414.5 340V370M415.5 342V368M416.5 341V369M417.5 342V368M418.5 343V367M419.5 340V370M420.5 342V368M421.5 341V369M422.5 342V368M423.5 341V369M424.5 344V366M425.5 341V369M426.5 343V367M427.5 343V367M428.5 340V370M429.5 343V367M430.5 342V368M431.5 343V367M432.5 341V369M433.5 342V368M434.5 341V369M435.5 343V367M436.5 342V368M437.5 343V367M438.5 341V369M439.5 342V368M440.5 342V368M441.5 343V367M442.5 341V369M443.5 343V367M444.5 341V369M445.5 341V369M446.5 341V369M447.5 341V369M448.5 341V369M449.5 341V369M450.5 343V367M451.5 342V368M452.5 342V368M453.5 343V367M454.5 340V370M455.5 341V369M456.5 344V366M457.5 343V367M458.5 342V368M459.5 343V367M460.5 342V368M461.5 341V369M462.5 342V368M463.5 341V369M464.5 341V369M465.5 343V367M466.5 341V369M467.5 341V369M468.5 343V367M469.5 342V368M470.5 343V367M471.5 342V368M472.5 341V369M473.5 344V366M474.5 342V368M475.5 341V369M476.5 343V367M477.5 341V369M478.5 342V368M479.5 342V368M480.5 344V366M481.5 342V368M482.5 343V367M483.5 343V367M484.5 343V367M485.5 341V369M486.5 343V367M487.5 342V368M488.5 342V368M489.5 342V368M490.5 342V368M491.5 341V369M492.5 343V367M493.5 343V367M494.5 341V369M495.5 342V368M496.5 341V369M497.5 341V369M498.5 341V369M499.5 344V366M500.5 341V369M501.5 342V368M502.5 344V366M503.5 341V369M504.5 341V369M505.5 343V367M506.5 343V367M507.5 342V368M508.5 343V367M509.5 341V369M510.5 341V369M511.5 342V368M512.5 341V369M513.5 342V368M514.5 343V367M515.5 342V368M516.5 343V367M517.5 341V369M518.5 342V368M519.5 342V368M520.5 341V369M521.5 342V368M522.5 343V367M523.5 343V367M524.5 341V369M525.5 342V368M526.5 341V369M527.5 343V367M528.5 343V367M529.5 343V367M530.5 341V369M531.5 344V366M532.5 343V367M533.5 341V369M534.5 344V366M535.5 341V369M536.5 342V368M537.5 342V368M538.5 344V366M539.5 341V369M540.5 342V368M541.5 343V367M542.5 342V368M543.5 344V366M544.5 344V366M545.5 343V367M546.5 344V366M547.5 344V366M548.5 341V369M549.5 342V368M550.5 342V368M551.5 344V366M552.5 341V369M553.5 351V359M554.5 352V358M555.5 352V358M556.5 341V369M557.5 343V367M558.5 341V369M559.5 343V367M560.5 349V361M561.5 350V360M562.5 350V360M563.5 349V361M564.5 349V361M565.5 350V360M566.5 349V361M567.5 342V368M568.5 343V367M569.5 343V367M570.5 342V368M571.5 343V367M572.5 343V367M573.5 341V369M574.5 344V366M575.5 343V367M576.5 342V368M577.5 342V368M578.5 341V369M579.5 343V367M580.5 343V367M581.5 341V369M582.5 342V368M583.5 341V369M584.5 341V369M585.5 343V367M586.5 342V368M587.5 342V368M588.5 342V368M589.5 343V367M590.5 344V366M591.5 342V368M592.5 342V368M593.5 341V369M594.5 344V366M595.5 342V368M596.5 342V368M597.5 344V366M598.5 343V367M599.5 342V368M600.5 342V368M601.5 343V367M602.5 343V367M603.5 344V366M604.5 344V366M605.5 342V368M606.5 344V366M607.5 344V366M608.5 341V369M609.5 342V368M610.5 343V367M611.5 342V368M612.5 343V367M613.5 342V368M614.5 342V368M615.5 342V368M616.5 342V368M617.5 343V367M618.5 343V367M619.5 343V367M620.5 343V367M621.5 342V368M622.5 342V368M623.5 343V367M624.5 342V368M625.5 344V366M626.5 344V366M627.5 342V368M628.5 344V366M629.5 343V367M630.5 344V366M631.5 343V367M632.5 344V366M633.5 343V367M634.5 344V366M635.5 342V368M636.5 344V366M637.5 343V367M638.5 342V368M639.5 343V367M640.5 343V367M641.5 342V368M642.5 343V367M643.5 345V365M644.5 344V366M645.5 345V365M646.5 343V367M647.5 345V365M648.5 343V367M649.5 344V366M650.5 343V367M651.5 344V366M652.5 343V367M653.5 342V368M654.5 344V366M655.5 345V365M656.5 344V366M657.5 344V366M658.5 344V366M659.5 345V365M660.5 343V367M661.5 345V365M662.5 344V366M663.5 343V367M664.5 344V366M665.5 345V365M666.5 343V367M667.5 343V367M668.5 345V365M669.5 343V367M670.5 345V365M671.5 343V367M672.5 345V365M673.5 343V367M674.5 343V367M675.5 342V368M676.5 343V367M677.5 344V366M678.5 343V367M679.5 342V368M680.5 343V367M681.5 343V367M682.5 342V368M683.5 344V366M684.5 344V366M685.5 341V369M686.5 344V366M687.5 343V367M688.5 344V366M689.5 341V369M690.5 343V367M691.5 343V367M692.5 344V366M693.5 343V367M694.5 343V367M695.5 344V366M696.5 342V368M697.5 343V367M698.5 343V367M699.5 341V369M700.5 343V367M701.5 341V369M702.5 344V366M703.5 342V368M704.5 342V368M705.5 342V368M706.5 341V369M707.5 342V368M708.5 344V366M709.5 341V369M710.5 342V368M711.5 343V367M712.5 341V369M713.5 344V366M714.5 343V367M715.5 344V366M716.5 342V368M717.5 343V367M718.5 342V368M719.5 343V367M720.5 342V368M721.5 342V368M722.5 343V367M723.5 344V366M724.5 344V366M725.5 342V368M726.5 342V368M727.5 342V368M728.5 344V366M729.5 343V367M730.5 343V367M731.5 344V366M732.5 341V369M733.5 342V368M734.5 341V369M735.5 341V369M736.5 342V368M737.5 343V367M738.5 341V369M739.5 341V369M740.5 343V367M741.5 343V367M742.5 343V367M743.5 341V369M744.5 342V368M745.5 341V369M746.5 343V367M747.5 341V369M748.5 342V368M749.5 343V367M750.5 343V367M751.5 342V368M752.5 341V369M753.5 343V367M754.5 343V367M755.5 341V369M756.5 341V369M757.5 342V368M758.5 343V367M759.5 343V367M760.5 341V369M761.5 343V367M762.5 343V367M763.5 341V369M764.5 341V369M765.5 341V369M766.5 343V367M767.5 340V370M768.5 342V368M769.5 342V368M770.5 342V368M771.5 343V367M772.5 342V368M773.5 341V369M774.5 342V368M775.5 343V367M776.5 340V370M777.5 340V370M778.5 341V369M779.5 342V368M780.5 341V369M781.5 341V369M782.5 342V368M783.5 343V367M784.5 340V370M785.5 341V369M786.5 343V367M787.5 340V370M788.5 340V370M789.5 340V370M790.5 342V368M791.5 342V368M792.5 341V369M793.5 343V367M794.5 342V368M795.5 343V367M796.5 343V367M797.5 341V369M798.5 343V367M799.5 341V369M800.5 341V369M801.5 342V368M802.5 343V367M803.5 341V369M804.5 343V367M805.5 340V370M806.5 343V367M807.5 343V367M808.5 342V368M809.5 342V368M810.5 340V370M811.5 340V370M812.5 340V370M813.5 341V369M814.5 342V368M815.5 341V369M816.5 342V368M817.5 343V367M818.5 342V368M819.5 341V369M820.5 343V367M821.5 342V368M822.5 342V368M823.5 340V370M824.5 341V369M825.5 342V368M826.5 341V369M827.5 341V369M828.5 342V368M829.5 343V367M830.5 342V368M831.5 342V368M832.5 340V370M833.5 341V369M834.5 341V369M835.5 340V370M836.5 343V367M837.5 342V368M838.5 343V367M839.5 342V368M840.5 340V370M841.5 340V370M842.5 341V369M843.5 341V369M844.5 342V368M845.5 343V367M846.5 342V368M847.5 340V370M848.5 342V368M849.5 340V370M850.5 343V367M851.5 340V370M852.5 343V367M853.5 342V368M854.5 342V368M855.5 341V369M856.5 342V368M857.5 341V369M858.5 340V370M859.5 340V370M860.5 351V359M861.5 352V358M862.5 352V358M863.5 342V368M864.5 342V368M865.5 340V370M866.5 343V367M867.5 341V369M868.5 340V370M869.5 343V367M870.5 340V370M871.5 352V358M872.5 352V358M873.5 351V359M874.5 342V368M875.5 342V368M876.5 341V369M877.5 341V369M878.5 340V370M879.5 343V367M880.5 341V369M881.5 340V370M882.5 342V368M883.5 342V368M884.5 343V367M885.5 341V369M886.5 340V370M887.5 342V368M888.5 343V367M889.5 343V367M890.5 342V368M891.5 342V368M892.5 343V367M893.5 341V369M894.5 343V367M895.5 343V367M896.5 343V367M897.5 342V368M898.5 344V366M899.5 341V369M900.5 341V369M901.5 341V369M902.5 342V368M903.5 341V369M904.5 342V368M905.5 340V370M906.5 343V367M907.5 341V369M908.5 342V368M909.5 341V369M910.5 341V369M911.5 343V367M912.5 342V368M913.5 340V370M914.5 340V370M915.5 340V370M916.5 342V368M917.5 343V367M918.5 342V368M919.5 341V369M920.5 341V369M921.5 342V368M922.5 343V367M923.5 340V370M924.5 343V367M925.5 341V369M926.5 340V370M927.5 343V367M928.5 340V370M929.5 341V369M930.5 341V369M931.5 343V367M932.5 341V369M933.5 340V370M934.5 341V369M935.5 343V367M936.5 341V369M937.5 340V370M938.5 340V370M939.5 342V368M940.5 340V370M941.5 342V368M942.5 342V368M943.5 344V366M944.5 342V368M945.5 343V367M946.5 341V369M947.5 343V367M948.5 341V369M949.5 344V366M950.5 344V366M951.5 342V368M952.5 344V366M953.5 343V367M954.5 343V367M955.5 343V367M956.5 344V366M957.5 344V366M958.5 344V366M959.5 344V366M960.5 343V367M961.5 344V366M962.5 343V367M963.5 342V368M964.5 343V367M965.5 342V368M966.5 341V369M967.5 341V369M968.5 343V367M969.5 344V366M970.5 341V369M971.5 342V368M972.5 341V369M973.5 341V369M974.5 341V369M975.5 343V367M976.5 343V367M977.5 341V369M978.5 341V369M979.5 341V369M980.5 343V367M981.5 341V369M982.5 342V368M983.5 343V367M984.5 341V369M985.5 344V366M986.5 343V367M987.5 343V367M988.5 342V368M989.5 344V366M990.5 343V367M991.5 343V367M992.5 342V368M993.5 345V365M994.5 345V365M995.5 343V367M996.5 344V366M997.5 344V366M998.5 345V365M999.5 344V366M1000.5 344V366M1001.5 344V366M1002.5 344V366M1003.5 346V364M1004.5 345V365M1005.5 345V365M1006.5 346V364M1007.5 346V364M1008.5 346V364M1009.5 347V363M1010.5 345V365M1011.5 347V363M1012.5 346V364M1013.5 346V364M1014.5 345V365M1015.5 346V364M1016.5 346V364M1017.5 348V362M1018.5 346V364M1019.5 347V363M1020.5 347V363M1021.5 348V362M1022.5 348V362M1023.5 348V362M1024.5 348V362M1025.5 347V363M1026.5 347V363M1027.5 348V362M1028.5 347V363M1029.5 349V361M1030.5 349V361M1031.5 349V361M1032.5 349V361M1033.5 349V361M1034.5 349V361M1035.5 350V360M1036.5 349V361M1037.5 349V361M1038.5 348V362M1039.5 349V361M1040.5 349V361M1041.5 349V361M1042.5 349V361M1043.5 349V361M1044.5 349V361M1045.5 350V360M1046.5 349V361M1047.5 349V361M1048.5 349V361M1049.5 349V361M1050.5 350V360M1051.5 348V362M1052.5 349V361M1053.5 349V361M1054.5 348V362M1055.5 349V361M1056.5 349V361M1057.5 349V361M1058.5 350V360M1059.5 349V361M1060.5 349V361M1061.5 349V361M1062.5 349V361M1063.5 349V361M1064.5 349V361M1065.5 349V361M1066.5 349V361M1067.5 350V360M1068.5 349V361M1069.5 349V361M1070.5 349V361M1071.5 348V362M1072.5 349V361M1073.5 350V360M1074.5 349V361M1075.5 349V361M1076.5 350V360M1077.5 350V360M1078.5 350V360M1079.5 349V361M1080.5 349V361M1081.5 349V361M1082.5 350V360M1083.5 349V361M1084.5 350V360M1085.5 349V361M1086.5 350V360M1087.5 349V361M1088.5 350V360M1089.5 350V360M1090.5 349V361M1091.5 349V361M1092.5 349V361M1093.5 350V360M1094.5 349V361M1095.5 350V360M1096.5 350V360M1097.5 349V361M1098.5 349V361M1099.5 349V361M1100.5 350V360M1101.5 349V361M1102.5 350V360M1103.5 350V360M1104.5 349V361M1105.5 349V361M1106.5 350V360M1107.5 350V360M1108.5 350V360M1109.5 350V360M1110.5 350V360M1111.5 349V361M1112.5 349V361M1113.5 349V361M1114.5 349V361M1115.5 350V360M1116.5 350V360M1117.5 350V360M1118.5 350V360M1119.5 350V360M1120.5 349V361M1121.5 349V361M1122.5 349V361M1123.5 349V361M1124.5 349V361M1125.5 350V360M1126.5 349V361M1127.5 350V360M1128.5 349V361M1129.5 349V361M1130.5 350V360M1131.5 349V361M1132.5 348V362M1133.5 345V365M1134.5 345V365M1135.5 344V366M1136.5 344V366M1137.5 344V366M1138.5 344V366M1139.5 345V365M1140.5 344V366M1141.5 345V365M1142.5 345V365M1143.5 344V366M1144.5 345V365M1145.5 345V365M1146.5 346V364M1147.5 345V365M1148.5 346V364M1149.5 345V365M1150.5 343V367M1151.5 344V366M1152.5 344V366M1153.5 343V367M1154.5 343V367M1155.5 343V367M1156.5 345V365M1157.5 345V365M1158.5 344V366M1159.5 344V366M1160.5 345V365M1161.5 346V364M1162.5 344V366M1163.5 344V366M1164.5 344V366M1165.5 346V364M1166.5 345V365M1167.5 346V364M1168.5 346V364M1169.5 344V366M1170.5 345V365M1171.5 343V367M1172.5 344V366M1173.5 343V367M1174.5 345V365M1175.5 344V366M1176.5 344V366M1177.5 345V365M1178.5 344V366M1179.5 345V365M1180.5 345V365M1181.5 345V365M1182.5 344V366M1183.5 344V366M1184.5 346V364M1185.5 346V364M1186.5 344V366M1187.5 345V365M1188.5 343V367M1189.5 344V366M1190.5 346V364M1191.5 344V366M1192.5 345V365M1193.5 346V364M1194.5 345V365M1195.5 343V367M1196.5 345V365M1197.5 345V365M1198.5 345V365M1199.5 344V366M1200.5 344V366M1201.5 345V365M1202.5 344V366M1203.5 346V364M1204.5 343V367M1205.5 345V365M1206.5 345V365M1207.5 343V367M1208.5 345V365M1209.5 343V367M1210.5 343V367M1211.5 344V366M1212.5 343V367M1213.5 344V366M1214.5 345V365M1215.5 344V366M1216.5 345V365M1217.5 343V367M1218.5 345V365M1219.5 345V365M1220.5 344V366M1221.5 344V366M1222.5 345V365M1223.5 344V366M1224.5 344V366M1225.5 344V366M1226.5 343V367M1227.5 345V365M1228.5 343V367M1229.5 344V366M1230.5 343V367M1231.5 344V366M1232.5 345V365M1233.5 343V367M1234.5 343V367M1235.5 345V365M1236.5 343V367M1237.5 344V366M1238.5 344V366M1239.5 341V369M1240.5 342V368M1241.5 343V367M1242.5 344V366M1243.5 341V369M1244.5 343V367M1245.5 344V366M1246.5 344V366M1247.5 344V366M1248.5 343V367M1249.5 342V368M1250.5 341V369M1251.5 343V367M1252.5 343V367M1253.5 342V368M1254.5 342V368M1255.5 341V369M1256.5 343V367M1257.5 343V367M1258.5 344V366M1259.5 344V366M1260.5 343V367M1261.5 342V368M1262.5 343V367M1263.5 342V368M1264.5 344V366M1265.5 342V368M1266.5 342V368M1267.5 342V368M1268.5 342V368M1269.5 343V367M1270.5 343V367M1271.5 344V366M1272.5 343V367M1273.5 341V369M1274.5 343V367M1275.5 342V368M1276.5 344V366M1277.5 343V367M1278.5 343V367M1279.5 343V367M1280.5 341V369M1281.5 341V369M1282.5 341V369M1283.5 344V366M1284.5 343V367M1285.5 341V369M1286.5 343V367M1287.5 342V368M1288.5 342V368M1289.5 341V369M1290.5 341V369M1291.5 343V367M1292.5 342V368M1293.5 342V368M1294.5 342V368M1295.5 341V369M1296.5 343V367M1297.5 341V369M1298.5 341V369M1299.5 342V368M1300.5 343V367M1301.5 343V367M1302.5 343V367M1303.5 342V368M1304.5 342V368M1305.5 341V369M1306.5 344V366M1307.5 340V370M1308.5 341V369M1309.5 342V368M1310.5 341V369M1311.5 341V369M1312.5 341V369M1313.5 343V367M1314.5 343V367M1315.5 343V367M1316.5 343V367M1317.5 343V367M1318.5 341V369M1319.5 341V369M1320.5 342V368M1321.5 343V367M1322.5 343V367M1323.5 342V368M1324.5 340V370M1325.5 342V368M1326.5 343V367M1327.5 343V367M1328.5 344V366M1329.5 344V366M1330.5 343V367M1331.5 343V367M1332.5 342V368M1333.5 343V367M1334.5 343V367M1335.5 343V367M1336.5 343V367M1337.5 341V369M1338.5 342V368M1339.5 342V368M1340.5 343V367M1341.5 342V368M1342.5 343V367M1343.5 343V367M1344.5 343V367M1345.5 342V368M1346.5 343V367M1347.5 341V369M1348.5 340V370M1349.5 340V370M1350.5 341V369M1351.5 340V370M1352.5 340V370M1353.5 339V371M1354.5 340V370M1355.5 340V370M1356.5 342V368M1357.5 342V368M1358.5 339V371M1359.5 339V371M1360.5 340V370M1361.5 342V368M1362.5 341V369M1363.5 340V370M1364.5 342V368M1365.5 342V368M1366.5 340V370M1367.5 341V369M1368.5 341V369M1369.5 341V369M1370.5 339V371M1371.5 339V371M1372.5 339V371M1373.5 340V370M1374.5 342V368M1375.5 339V371M1376.5 351V359M1377.5 351V359M1378.5 351V359M1379.5 340V370M1380.5 339V371M1381.5 341V369M1382.5 340V370M1383.5 342V368M1384.5 340V370M1385.5 339V371M1386.5 352V358M1387.5 352V358M1388.5 352V358M1389.5 340V370M1390.5 342V368M1391.5 342V368M1392.5 341V369M1393.5 340V370M1394.5 341V369M1395.5 341V369M1396.5 339V371M1397.5 340V370M1398.5 342V368M1399.5 340V370M1400.5 342V368M1401.5 342V368M1402.5 340V370M1403.5 342V368M1404.5 340V370M1405.5 340V370M1406.5 340V370M1407.5 339V371M1408.5 339V371M1409.5 342V368M1410.5 341V369M1411.5 341V369M1412.5 340V370M1413.5 340V370M1414.5 342V368M1415.5 339V371M1416.5 339V371M1417.5 340V370M1418.5 341V369M1419.5 342V368M1420.5 341V369M1421.5 342V368M1422.5 341V369M1423.5 343V367M1424.5 339V371M1425.5 339V371M1426.5 341V369M1427.5 342V368M1428.5 339V371M1429.5 341V369M1430.5 341V369M1431.5 341V369M1432.5 340V370M1433.5 342V368M1434.5 339V371M1435.5 342V368M1436.5 341V369M1437.5 343V367M1438.5 339V371M1439.5 342V368M1440.5 341V369M1441.5 342V368M1442.5 342V368M1443.5 342V368M1444.5 342V368M1445.5 339V371M1446.5 341V369M1447.5 342V368M1448.5 340V370M1449.5 339V371M1450.5 342V368M1451.5 343V367M1452.5 340V370M1453.5 342V368M1454.5 341V369M1455.5 340V370M1456.5 343V367M1457.5 340V370M1458.5 342V368M1459.5 342V368M1460.5 342V368M1461.5 340V370M1462.5 342V368M1463.5 343V367M1464.5 341V369M1465.5 340V370M1466.5 341V369M1467.5 342V368M1468.5 341V369M1469.5 342V368M1470.5 341V369M1471.5 341V369M1472.5 340V370M1473.5 342V368M1474.5 340V370M1475.5 343V367M1476.5 343V367M1477.5 340V370M1478.5 343V367M1479.5 340V370M1480.5 341V369M1481.5 342V368M1482.5 343V367M1483.5 343V367M1484.5 341V369M1485.5 343V367M1486.5 341V369M1487.5 340V370M1488.5 342V368M1489.5 343V367M1490.5 342V368M1491.5 341V369M1492.5 341V369M1493.5 343V367M1494.5 341V369M1495.5 343V367M1496.5 342V368M1497.5 342V368M1498.5 343V367M1499.5 342V368M1500.5 341V369M1501.5 340V370M1502.5 342V368M1503.5 343V367M1504.5 341V369M1505.5 342V368M1506.5 343V367M1507.5 340V370M1508.5 342V368M1509.5 342V368M1510.5 342V368M1511.5 343V367M1512.5 343V367M1513.5 342V368M1514.5 342V368M1515.5 343V367M1516.5 342V368M1517.5 342V368M1518.5 341V369M1519.5 340V370M1520.5 340V370M1521.5 340V370M1522.5 343V367M1523.5 342V368M1524.5 340V370M1525.5 342V368M1526.5 341V369M1527.5 342V368M1528.5 340V370M1529.5 340V370M1530.5 340V370M1531.5 339V371M1532.5 339V371M1533.5 342V368M1534.5 341V369M1535.5 341V369M1536.5 342V368M1537.5 342V368M1538.5 341V369M1539.5 340V370M1540.5 341V369M1541.5 341V369M1542.5 341V369M1543.5 341V369M1544.5 341V369M1545.5 341V369M1546.5 342V368M1547.5 340V370M1548.5 341V369M1549.5 340V370M1550.5 342V368M1551.5 341V369M1552.5 339V371M1553.5 343V367M1554.5 341V369M1555.5 341V369M1556.5 342V368M1557.5 342V368M1558.5 341V369M1559.5 340V370M1560.5 343V367M1561.5 342V368M1562.5 341V369M1563.5 339V371M1564.5 341V369M1565.5 342V368M1566.5 339V371M1567.5 342V368M1568.5 342V368M1569.5 340V370M1570.5 341V369M1571.5 342V368M1572.5 340V370M1573.5 341V369M1574.5 339V371M1575.5 341V369M1576.5 341V369M1577.5 342V368M1578.5 340V370M1579.5 339V371M1580.5 340V370M1581.5 342V368M1582.5 340V370M1583.5 341V369M1584.5 339V371M1585.5 342V368M1586.5 340V370M1587.5 340V370M1588.5 340V370M1589.5 340V370M1590.5 341V369M1591.5 343V367M1592.5 342V368M1593.5 341V369M1594.5 341V369M1595.5 342V368M1596.5 339V371M1597.5 340V370M1598.5 342V368M1599.5 340V370M1600.5 339V371M1601.5 339V371M1602.5 340V370M1603.5 343V367M1604.5 343V367M1605.5 342V368M1606.5 339V371M1607.5 340V370M1608.5 341V369M1609.5 343V367M1610.5 343V367M1611.5 341V369M1612.5 342V368M1613.5 340V370M1614.5 342V368M1615.5 341V369M1616.5 342V368M1617.5 340V370M1618.5 341V369M1619.5 341V369M1620.5 342V368M1621.5 341V369M1622.5 341V369M1623.5 341V369M1624.5 342V368M1625.5 341V369M1626.5 342V368M1627.5 341V369M1628.5 339V371M1629.5 340V370M1630.5 342V368M1631.5 340V370M1632.5 342V368M1633.5 341V369M1634.5 341V369M1635.5 341V369M1636.5 341V369M1637.5 339V371M1638.5 341V369M1639.5 342V368M1640.5 342V368M1641.5 341V369M1642.5 341V369M1643.5 342V368M1644.5 342V368M1645.5 341V369M1646.5 339V371M1647.5 340V370M1648.5 340V370M1649.5 342V368M1650.5 343V367M1651.5 341V369M1652.5 340V370M1653.5 341V369M1654.5 341V369M1655.5 342V368M1656.5 342V368M1657.5 341V369M1658.5 343V367M1659.5 340V370M1660.5 341V369M1661.5 342V368M1662.5 343V367M1663.5 342V368M1664.5 343V367M1665.5 341V369M1666.5 342V368M1667.5 342V368M1668.5 340V370M1669.5 343V367M1670.5 340V370M1671.5 341V369M1672.5 341V369M1673.5 340V370M1674.5 342V368M1675.5 342V368M1676.5 342V368M1677.5 342V368M1678.5 341V369M1679.5 343V367M1680.5 340V370M1681.5 343V367M1682.5 342V368M1683.5 341V369M1684.5 343V367M1685.5 342V368M1686.5 340V370M1687.5 343V367M1688.5 343V367M1689.5 342V368M1690.5 342V368M1691.5 341V369M1692.5 340V370M1693.5 343V367M1694.5 341V369M1695.5 343V367M1696.5 343V367M1697.5 341V369M1698.5 342V368M1699.5 342V368M1700.5 341V369M1701.5 340V370M1702.5 343V367M1703.5 343V367M1704.5 341V369M1705.5 340V370M1706.5 343V367M1707.5 342V368M1708.5 343V367M1709.5 343V367M1710.5 343V367M1711.5 341V369M1712.5 340V370M1713.5 343V367M1714.5 340V370M1715.5 341V369M1716.5 343V367M1717.5 343V367M1718.5 340V370M1719.5 340V370M1720.5 342V368M1721.5 343V367M1722.5 340V370M1723.5 343V367M1724.5 341V369M1725.5 342V368M1726.5 343V367M1727.5 343V367M1728.5 341V369M1729.5 342V368M1730.5 341V369M1731.5 340V370M1732.5 342V368M1733.5 341V369M1734.5 340V370M1735.5 340V370M1736.5 343V367M1737.5 342V368M1738.5 343V367M1739.5 341V369M1740.5 340V370M1741.5 342V368M1742.5 343V367M1743.5 341V369M1744.5 343V367M1745.5 340V370M1746.5 340V370M1747.5 340V370M1748.5 340V370M1749.5 342V368M1750.5 340V370M1751.5 341V369M1752.5 342V368M1753.5 342V368M1754.5 343V367M1755.5 342V368M1756.5 342V368M1757.5 340V370M1758.5 342V368M1759.5 343V367M1760.5 342V368M1761.5 342V368M1762.5 341V369M1763.5 341V369M1764.5 340V370M1765.5 340V370M1766.5 340V370M1767.5 341V369M1768.5 340V370M1769.5 341V369M1770.5 342V368M1771.5 343V367M1772.5 341V369M1773.5 342V368M1774.5 343V367M1775.5 340V370M1776.5 340V370M1777.5 340V370M1778.5 340V370M1779.5 343V367M1780.5 340V370M1781.5 343V367M1782.5 342V368M1783.5 342V368M1784.5 340V370M1785.5 342V368M1786.5 342V368M1787.5 340V370M1788.5 341V369M1789.5 343V367M1790.5 339V371M1791.5 343V367M1792.5 341V369M1793.5 343V367M1794.5 342V368M1795.5 343V367M1796.5 342V368M1797.5 342V368M1798.5 341V369M1799.5 341V369M1800.5 342V368M1801.5 342V368M1802.5 341V369M1803.5 342V368M1804.5 341V369M1805.5 340V370M1806.5 341V369M1807.5 343V367M1808.5 340V370M1809.5 350V360M1810.5 351V359M1811.5 340V370M1812.5 342V368M1813.5 340V370M1814.5 342V368M1815.5 341V369M1816.5 344V366M1817.5 343V367M1818.5 341V369M1819.5 342V368M1820.5 344V366M1821.5 344V366M1822.5 344V366M1823.5 343V367M1824.5 342V368M1825.5 344V366M1826.5 345V365M1827.5 345V365M1828.5 343V367M1829.5 344V366M1830.5 345V365M1831.5 344V366M1832.5 346V364M1833.5 345V365M1834.5 346V364M1835.5 345V365M1836.5 346V364M1837.5 346V364M1838.5 347V363M1839.5 347V363M1840.5 347V363M1841.5 347V363M1842.5 348V362M1843.5 349V361M1844.5 348V362M1845.5 349V361M1846.5 350V360M1847.5 349V361M1848.5 350V360M1849.5 350V360M1850.5 351V359M1851.5 350V360M1852.5 351V359M1853.5 351V359M1854.5 352V358M1855.5 352V358M1856.5 352V358M1857.5 352V358M1858.5 352V358M1859.5 353V357M1860.5 353V357M1861.5 353V357M1862.5 353V357M1863.5 353V357M1864.5 353V357M1865.5 354V356M1866.5 354V356M1867.5 354V356M1868.5 354V356M1869.5 354V356M1870.5 354V356M1871.5 354V356M1872.5 354V356M1873.5 354V356M1874.5 354V356M1875.5 354V356M1876.5 354V356M1877.5 354V356M1878.5 354V356M1879.5 354V356M1880.5 354V356M1881.5 354V356M1882.5 354V356M1883.5 354V356M1884.5 354V356M1885.5 354V356M1886.5 354V356M1887.5 354V356" stroke="#767cdc" stroke-width="1" shape-rendering="crispEdges"/></svg><div class="ab" style="left:137px;top:277px;width:1760px;height:1px;background:#111"></div><div class="ab" style="left:137px;top:278px;width:1760px;height:5px;background:#a2a2ae"></div><div class="ab" style="left:137px;top:283px;width:1760px;height:1px;background:#222"></div><div class="ab" style="left:1897px;top:133px;width:3px;height:295px;background:#000"></div><div class="ab" style="left:0;top:431px;width:3px;height:672px;background:#8a8a9c"></div><div class="ab" style="left:1905px;top:431px;width:14px;height:690px;background:linear-gradient(90deg,#b4b4b4,#dcdcdc 35%,#efefef)"></div><div class="ab" style="left:3px;top:431px;width:1902px;height:672px;background:#ececec"></div><div class="ab" style="left:3px;top:431px;width:1902px;height:21px;background:linear-gradient(#dedede,#c4c4c4 60%,#b4b4b4);border-bottom:1px solid #8c8c8c"></div><div class="t" style="left:3px;width:1902px;text-align:center;top:435px;font-size:13px;letter-spacing:0.3px;color:#222">Frequency Analysis</div><div class="ab" style="left:12.5px;top:434.5px;width:13px;height:13px;border-radius:50%;background:radial-gradient(circle at 50% 70%,#ffb0a8,#c83828 75%);border:1px solid rgba(0,0,0,.25)"></div><div class="ab" style="left:33.5px;top:434.5px;width:13px;height:13px;border-radius:50%;background:radial-gradient(circle at 50% 70%,#e8e8e8,#b8b8b8 75%);border:1px solid rgba(0,0,0,.25)"></div><div class="ab" style="left:54.5px;top:434.5px;width:13px;height:13px;border-radius:50%;background:radial-gradient(circle at 50% 70%,#c8f0a0,#58a030 75%);border:1px solid rgba(0,0,0,.25)"></div><svg class="ab" style="left:0;top:0" width="1919" height="1000">
<defs><clipPath id="cp"><path d="M56 973 L56.5 461.0 L56.7 468.3 L62.5 500.0 L66.2 517.6 L70.0 535.0 L73.3 539.2 L76.7 539.5 L80.0 539.2 L83.3 545.4 L86.7 551.4 L90.0 556.7 L93.3 562.0 L96.7 567.2 L100.0 571.7 L103.8 574.4 L107.5 578.3 L111.1 579.9 L114.7 582.2 L118.3 583.3 L123.3 582.5 L128.3 575.0 L132.5 570.2 L136.7 565.0 L140.8 564.8 L145.0 563.7 L149.2 565.5 L153.3 568.3 L156.7 570.4 L160.0 572.5 L165.0 572.0 L169.2 570.5 L173.3 569.7 L176.6 570.0 L180.0 570.2 L183.3 570.3 L188.3 572.5 L192.5 576.5 L196.7 581.7 L200.0 585.2 L203.4 589.2 L206.7 593.3 L210.8 596.7 L215.0 599.2 L218.3 599.3 L221.7 598.7 L225.0 597.7 L228.3 597.5 L231.7 599.0 L235.0 599.7 L239.2 601.1 L243.3 603.3 L247.2 603.2 L251.1 602.3 L255.0 602.5 L258.9 600.6 L262.8 600.4 L266.7 598.7 L269.7 598.1 L272.7 597.9 L275.7 598.6 L278.7 598.2 L281.7 597.5 L285.6 597.8 L289.4 599.2 L293.3 599.2 L296.6 598.7 L300.0 598.3 L303.3 597.5 L306.6 598.2 L310.0 600.2 L313.3 600.8 L317.5 604.1 L321.7 607.0 L325.6 608.0 L329.4 608.3 L333.3 608.3 L336.6 609.2 L340.0 610.4 L343.3 611.7 L346.6 611.9 L350.0 612.5 L353.4 613.1 L356.7 614.2 L360.0 614.8 L363.4 616.0 L366.7 616.7 L369.8 617.1 L372.8 618.8 L375.9 619.4 L378.9 620.3 L381.9 621.9 L385.0 622.5 L388.3 622.2 L391.7 621.7 L395.0 621.7 L398.3 622.7 L401.6 624.0 L405.0 624.2 L408.3 625.8 L413.3 625.3 L416.6 624.1 L420.0 621.2 L423.3 620.0 L427.5 622.1 L431.7 623.7 L435.0 624.6 L438.3 624.7 L441.6 624.2 L445.0 625.2 L448.3 625.0 L452.5 628.2 L456.7 631.7 L460.6 631.5 L464.4 630.5 L468.3 630.8 L471.6 631.7 L475.0 633.4 L478.4 635.8 L481.7 636.7 L485.0 638.1 L488.4 640.5 L491.7 642.0 L496.7 642.0 L500.0 644.3 L503.4 646.2 L506.7 647.5 L510.0 646.7 L513.4 646.2 L516.7 645.8 L520.0 648.8 L523.3 651.7 L527.5 655.8 L531.7 659.2 L535.9 657.0 L540.0 655.8 L543.4 658.2 L546.7 660.0 L550.0 666.2 L553.3 671.7 L556.6 671.7 L560.0 670.3 L563.4 671.0 L566.7 670.0 L570.0 670.3 L573.4 671.5 L576.7 672.5 L580.0 674.1 L583.4 675.9 L586.7 676.7 L590.0 678.3 L593.3 680.1 L596.6 680.9 L600.0 681.8 L603.3 683.3 L607.5 687.7 L611.7 692.5 L615.9 693.4 L620.0 695.0 L623.9 693.5 L627.8 692.6 L631.7 692.0 L635.0 693.3 L638.9 697.2 L642.8 701.2 L646.7 704.2 L650.0 706.7 L653.4 705.0 L656.7 704.2 L660.6 706.2 L664.4 709.8 L668.3 711.7 L673.3 714.2 L676.6 714.6 L680.0 714.8 L683.3 715.3 L686.6 717.2 L690.0 719.9 L693.4 722.4 L696.7 724.2 L700.0 725.6 L703.4 727.0 L706.7 728.0 L710.0 730.0 L713.9 734.4 L717.8 737.2 L721.7 741.7 L725.6 739.7 L729.4 738.2 L733.3 735.8 L737.2 739.5 L741.1 744.4 L745.0 748.3 L750.0 750.8 L753.3 750.2 L756.7 748.8 L760.0 747.5 L765.0 748.3 L768.4 753.6 L771.7 758.3 L775.9 757.8 L780.0 758.3 L783.3 759.4 L786.7 760.1 L790.0 761.7 L793.9 764.3 L797.8 765.9 L801.7 768.3 L805.0 768.6 L808.3 769.6 L811.7 769.7 L815.0 770.2 L818.3 770.0 L821.6 771.2 L825.0 772.5 L828.0 774.5 L831.0 776.8 L834.0 778.5 L837.0 780.2 L840.0 782.5 L843.0 784.5 L846.0 786.4 L849.0 788.8 L852.0 791.7 L855.0 793.3 L858.4 798.1 L861.7 801.7 L865.0 804.4 L868.4 806.7 L871.7 809.2 L875.9 814.8 L880.0 820.8 L884.1 822.4 L888.3 825.0 L892.5 825.1 L896.7 825.8 L900.0 828.1 L903.3 830.2 L906.7 831.6 L910.0 834.1 L913.3 835.8 L916.4 836.4 L919.4 836.6 L922.5 836.8 L925.6 837.2 L928.6 837.1 L931.7 837.5 L935.0 836.3 L938.4 834.4 L941.7 833.3 L945.0 835.0 L948.3 836.7 L952.5 839.7 L956.7 842.0 L960.0 842.6 L963.4 842.4 L966.7 843.5 L970.0 843.3 L974.1 843.5 L978.3 843.3 L982.2 843.5 L986.1 843.0 L990.0 843.7 L994.1 844.4 L998.3 845.0 L1001.3 845.5 L1004.3 846.9 L1007.3 847.5 L1010.3 848.7 L1013.3 849.2 L1016.6 851.0 L1020.0 852.9 L1023.4 854.0 L1026.7 855.8 L1030.0 856.5 L1033.4 857.2 L1036.7 857.5 L1040.0 857.9 L1043.4 857.3 L1046.7 857.5 L1050.0 857.5 L1053.3 856.7 L1056.6 858.5 L1060.0 859.6 L1063.3 861.2 L1066.7 862.5 L1070.0 863.3 L1073.1 863.5 L1076.2 863.6 L1079.3 863.3 L1082.4 864.2 L1085.5 864.5 L1088.6 864.0 L1091.7 864.2 L1095.0 864.9 L1098.3 865.5 L1101.7 866.0 L1105.0 865.8 L1108.3 866.7 L1111.3 868.0 L1114.3 868.8 L1117.3 869.9 L1120.3 870.6 L1123.3 871.7 L1126.7 872.2 L1130.0 872.8 L1133.3 873.1 L1136.7 873.3 L1139.8 874.8 L1142.8 875.1 L1145.8 876.5 L1148.9 878.0 L1152.0 879.5 L1155.0 880.5 L1158.9 879.2 L1162.8 878.7 L1166.7 877.5 L1170.8 880.2 L1175.0 882.5 L1178.9 883.4 L1182.8 885.3 L1186.7 886.7 L1190.0 887.0 L1193.3 887.5 L1196.7 888.2 L1200.0 889.1 L1203.3 890.0 L1206.7 889.7 L1210.0 890.2 L1214.7 891.0 L1217.8 892.1 L1221.0 894.0 L1224.1 894.2 L1227.2 895.6 L1230.3 896.4 L1233.4 896.4 L1236.5 896.8 L1239.7 896.9 L1242.8 896.9 L1246.3 897.6 L1249.8 899.5 L1253.4 899.5 L1256.9 901.1 L1260.8 901.8 L1264.7 902.7 L1268.2 902.4 L1271.8 902.6 L1275.3 902.2 L1278.8 902.7 L1283.5 901.6 L1286.9 903.3 L1290.3 904.1 L1293.7 905.1 L1297.0 907.1 L1300.4 907.9 L1303.8 909.7 L1306.9 910.2 L1310.0 910.4 L1313.2 911.2 L1316.3 912.1 L1319.4 912.0 L1322.5 913.7 L1325.7 914.6 L1328.8 916.0 L1332.4 916.9 L1336.1 917.2 L1339.7 917.5 L1342.8 918.6 L1346.0 919.7 L1349.1 921.4 L1352.7 920.2 L1356.4 918.9 L1360.0 917.5 L1364.0 918.0 L1367.9 917.5 L1371.0 918.6 L1374.2 918.6 L1377.3 919.0 L1380.9 921.0 L1384.6 923.9 L1388.2 925.6 L1391.7 925.3 L1395.2 925.8 L1398.8 926.7 L1402.3 926.9 L1405.4 927.3 L1408.5 927.1 L1411.7 928.0 L1414.8 928.1 L1418.3 929.6 L1421.8 930.1 L1425.4 931.2 L1428.9 932.3 L1432.2 932.0 L1435.6 932.0 L1438.9 932.9 L1442.3 932.2 L1445.6 932.9 L1449.0 932.8 L1452.3 932.3 L1455.4 931.3 L1458.6 930.0 L1461.7 931.2 L1464.8 933.5 L1467.9 934.4 L1471.4 935.7 L1475.0 936.9 L1478.5 938.2 L1482.0 939.7 L1485.1 940.9 L1488.2 940.9 L1491.4 941.3 L1494.5 942.2 L1498.1 942.2 L1501.7 941.8 L1505.2 942.5 L1508.8 942.4 L1512.6 944.2 L1516.4 946.2 L1519.7 945.7 L1523.0 946.0 L1526.3 945.4 L1530.1 945.9 L1533.9 945.6 L1536.9 945.8 L1540.0 947.3 L1543.0 947.8 L1546.0 948.9 L1550.3 949.2 L1554.7 948.4 L1558.0 948.9 L1561.3 948.7 L1565.7 949.6 L1570.0 951.1 L1573.3 951.4 L1576.6 951.9 L1579.9 953.5 L1583.2 953.5 L1586.2 953.4 L1589.2 954.0 L1592.2 954.0 L1595.2 954.2 L1598.5 955.0 L1601.8 955.5 L1605.1 955.9 L1608.4 956.4 L1611.6 956.0 L1614.9 957.1 L1618.2 957.1 L1621.5 956.7 L1624.8 956.9 L1628.0 956.5 L1631.3 956.6 L1634.4 956.1 L1637.4 956.2 L1640.5 955.9 L1643.5 955.6 L1646.6 955.5 L1650.4 956.9 L1654.3 957.7 L1657.6 958.6 L1660.8 958.8 L1664.1 959.9 L1667.4 961.0 L1670.7 961.4 L1674.0 962.4 L1677.2 962.8 L1680.5 962.8 L1683.8 963.2 L1687.1 963.7 L1690.3 965.7 L1693.6 966.3 L1696.9 967.5 L1700.2 967.3 L1703.5 967.0 L1707.9 964.9 L1712.3 962.3 L1715.7 963.0 L1719.0 963.4 L1722.4 964.4 L1725.8 964.5 L1729.7 966.1 L1733.6 967.9 L1737.3 968.3 L1741.1 969.5 L1744.8 969.6 L1747.9 969.3 L1751.1 969.6 L1754.2 970.3 L1757.4 969.5 L1760.5 970.1 L1765.0 969.7 L1769.4 968.5 L1772.8 969.0 L1776.2 969.0 L1779.5 969.1 L1782.9 969.6 L1786.2 969.9 L1789.6 970.0 L1793.0 969.0 L1796.3 969.4 L1800.2 970.3 L1804.1 971.3 L1807.2 971.1 L1810.3 970.7 L1813.4 970.2 L1816.5 970.1 L1819.6 969.5 L1822.7 969.9 L1825.9 970.1 L1829.0 969.0 L1832.1 969.4 L1835.1 969.6 L1838.1 970.8 L1841.1 970.9 L1845.5 972.2 L1850.0 972.7 L1853.8 972.9 L1857.5 972.1 L1861.3 972.7 L1864.7 972.3 L1868.0 971.3 L1871.3 972.4 L1874.7 972.4 L1877.8 973.1 L1881.0 972.8 L1884.1 972.0 L1887.3 973.1 L1890.4 972.7 L1899 973Z"/></clipPath></defs>
<rect x="56" y="458" width="1844" height="515" fill="#fff"/>
<path d="M56 463.5H1900M56 501.5H1900M56 520.5H1900M56 539.5H1900M56 577.5H1900M56 596.5H1900M56 615.5H1900M56 653.5H1900M56 672.5H1900M56 691.5H1900M56 729.5H1900M56 748.5H1900M56 767.5H1900M56 805.5H1900M56 824.5H1900M56 844.5H1900M56 882.5H1900M56 901.5H1900M56 920.5H1900M56 958.5H1900" stroke="#cbcbcb" stroke-width="1.7" fill="none"/>
<path d="M56 482.5H1900M56 558.5H1900M56 634.5H1900M56 710.5H1900M56 786.5H1900M56 863.5H1900M56 939.5H1900" stroke="#a2a2a2" stroke-width="1.7" fill="none"/>
<path d="M69.5 458V973M107.5 458V973M146.5 458V973M184.5 458V973M223.5 458V973M262.5 458V973M300.5 458V973M339.5 458V973M377.5 458V973M416.5 458V973M454.5 458V973M493.5 458V973M531.5 458V973M570.5 458V973M608.5 458V973M647.5 458V973M685.5 458V973M724.5 458V973M762.5 458V973M801.5 458V973M840.5 458V973M878.5 458V973M917.5 458V973M955.5 458V973M994.5 458V973M1032.5 458V973M1071.5 458V973M1109.5 458V973M1148.5 458V973M1186.5 458V973M1225.5 458V973M1263.5 458V973M1302.5 458V973M1340.5 458V973M1379.5 458V973M1417.5 458V973M1456.5 458V973M1495.5 458V973M1533.5 458V973M1572.5 458V973M1610.5 458V973M1649.5 458V973M1687.5 458V973M1726.5 458V973M1764.5 458V973M1803.5 458V973M1841.5 458V973M1880.5 458V973" stroke="#c4c4c4" stroke-width="1.2" fill="none"/>
<path d="M88.5 458V973M127.5 458V973M165.5 458V973M204.5 458V973M242.5 458V973M281.5 458V973M319.5 458V973M358.5 458V973M396.5 458V973M435.5 458V973M473.5 458V973M512.5 458V973M551.5 458V973M589.5 458V973M628.5 458V973M666.5 458V973M705.5 458V973M743.5 458V973M782.5 458V973M820.5 458V973M859.5 458V973M897.5 458V973M936.5 458V973M974.5 458V973M1013.5 458V973M1051.5 458V973M1090.5 458V973M1128.5 458V973M1167.5 458V973M1206.5 458V973M1244.5 458V973M1283.5 458V973M1321.5 458V973M1360.5 458V973M1398.5 458V973M1437.5 458V973M1475.5 458V973M1514.5 458V973M1552.5 458V973M1591.5 458V973M1629.5 458V973M1668.5 458V973M1706.5 458V973M1745.5 458V973M1783.5 458V973M1822.5 458V973M1861.5 458V973" stroke="#858585" stroke-width="1.2" fill="none"/>
<path d="M56 973 L56.5 461.0 L56.7 468.3 L62.5 500.0 L66.2 517.6 L70.0 535.0 L73.3 539.2 L76.7 539.5 L80.0 539.2 L83.3 545.4 L86.7 551.4 L90.0 556.7 L93.3 562.0 L96.7 567.2 L100.0 571.7 L103.8 574.4 L107.5 578.3 L111.1 579.9 L114.7 582.2 L118.3 583.3 L123.3 582.5 L128.3 575.0 L132.5 570.2 L136.7 565.0 L140.8 564.8 L145.0 563.7 L149.2 565.5 L153.3 568.3 L156.7 570.4 L160.0 572.5 L165.0 572.0 L169.2 570.5 L173.3 569.7 L176.6 570.0 L180.0 570.2 L183.3 570.3 L188.3 572.5 L192.5 576.5 L196.7 581.7 L200.0 585.2 L203.4 589.2 L206.7 593.3 L210.8 596.7 L215.0 599.2 L218.3 599.3 L221.7 598.7 L225.0 597.7 L228.3 597.5 L231.7 599.0 L235.0 599.7 L239.2 601.1 L243.3 603.3 L247.2 603.2 L251.1 602.3 L255.0 602.5 L258.9 600.6 L262.8 600.4 L266.7 598.7 L269.7 598.1 L272.7 597.9 L275.7 598.6 L278.7 598.2 L281.7 597.5 L285.6 597.8 L289.4 599.2 L293.3 599.2 L296.6 598.7 L300.0 598.3 L303.3 597.5 L306.6 598.2 L310.0 600.2 L313.3 600.8 L317.5 604.1 L321.7 607.0 L325.6 608.0 L329.4 608.3 L333.3 608.3 L336.6 609.2 L340.0 610.4 L343.3 611.7 L346.6 611.9 L350.0 612.5 L353.4 613.1 L356.7 614.2 L360.0 614.8 L363.4 616.0 L366.7 616.7 L369.8 617.1 L372.8 618.8 L375.9 619.4 L378.9 620.3 L381.9 621.9 L385.0 622.5 L388.3 622.2 L391.7 621.7 L395.0 621.7 L398.3 622.7 L401.6 624.0 L405.0 624.2 L408.3 625.8 L413.3 625.3 L416.6 624.1 L420.0 621.2 L423.3 620.0 L427.5 622.1 L431.7 623.7 L435.0 624.6 L438.3 624.7 L441.6 624.2 L445.0 625.2 L448.3 625.0 L452.5 628.2 L456.7 631.7 L460.6 631.5 L464.4 630.5 L468.3 630.8 L471.6 631.7 L475.0 633.4 L478.4 635.8 L481.7 636.7 L485.0 638.1 L488.4 640.5 L491.7 642.0 L496.7 642.0 L500.0 644.3 L503.4 646.2 L506.7 647.5 L510.0 646.7 L513.4 646.2 L516.7 645.8 L520.0 648.8 L523.3 651.7 L527.5 655.8 L531.7 659.2 L535.9 657.0 L540.0 655.8 L543.4 658.2 L546.7 660.0 L550.0 666.2 L553.3 671.7 L556.6 671.7 L560.0 670.3 L563.4 671.0 L566.7 670.0 L570.0 670.3 L573.4 671.5 L576.7 672.5 L580.0 674.1 L583.4 675.9 L586.7 676.7 L590.0 678.3 L593.3 680.1 L596.6 680.9 L600.0 681.8 L603.3 683.3 L607.5 687.7 L611.7 692.5 L615.9 693.4 L620.0 695.0 L623.9 693.5 L627.8 692.6 L631.7 692.0 L635.0 693.3 L638.9 697.2 L642.8 701.2 L646.7 704.2 L650.0 706.7 L653.4 705.0 L656.7 704.2 L660.6 706.2 L664.4 709.8 L668.3 711.7 L673.3 714.2 L676.6 714.6 L680.0 714.8 L683.3 715.3 L686.6 717.2 L690.0 719.9 L693.4 722.4 L696.7 724.2 L700.0 725.6 L703.4 727.0 L706.7 728.0 L710.0 730.0 L713.9 734.4 L717.8 737.2 L721.7 741.7 L725.6 739.7 L729.4 738.2 L733.3 735.8 L737.2 739.5 L741.1 744.4 L745.0 748.3 L750.0 750.8 L753.3 750.2 L756.7 748.8 L760.0 747.5 L765.0 748.3 L768.4 753.6 L771.7 758.3 L775.9 757.8 L780.0 758.3 L783.3 759.4 L786.7 760.1 L790.0 761.7 L793.9 764.3 L797.8 765.9 L801.7 768.3 L805.0 768.6 L808.3 769.6 L811.7 769.7 L815.0 770.2 L818.3 770.0 L821.6 771.2 L825.0 772.5 L828.0 774.5 L831.0 776.8 L834.0 778.5 L837.0 780.2 L840.0 782.5 L843.0 784.5 L846.0 786.4 L849.0 788.8 L852.0 791.7 L855.0 793.3 L858.4 798.1 L861.7 801.7 L865.0 804.4 L868.4 806.7 L871.7 809.2 L875.9 814.8 L880.0 820.8 L884.1 822.4 L888.3 825.0 L892.5 825.1 L896.7 825.8 L900.0 828.1 L903.3 830.2 L906.7 831.6 L910.0 834.1 L913.3 835.8 L916.4 836.4 L919.4 836.6 L922.5 836.8 L925.6 837.2 L928.6 837.1 L931.7 837.5 L935.0 836.3 L938.4 834.4 L941.7 833.3 L945.0 835.0 L948.3 836.7 L952.5 839.7 L956.7 842.0 L960.0 842.6 L963.4 842.4 L966.7 843.5 L970.0 843.3 L974.1 843.5 L978.3 843.3 L982.2 843.5 L986.1 843.0 L990.0 843.7 L994.1 844.4 L998.3 845.0 L1001.3 845.5 L1004.3 846.9 L1007.3 847.5 L1010.3 848.7 L1013.3 849.2 L1016.6 851.0 L1020.0 852.9 L1023.4 854.0 L1026.7 855.8 L1030.0 856.5 L1033.4 857.2 L1036.7 857.5 L1040.0 857.9 L1043.4 857.3 L1046.7 857.5 L1050.0 857.5 L1053.3 856.7 L1056.6 858.5 L1060.0 859.6 L1063.3 861.2 L1066.7 862.5 L1070.0 863.3 L1073.1 863.5 L1076.2 863.6 L1079.3 863.3 L1082.4 864.2 L1085.5 864.5 L1088.6 864.0 L1091.7 864.2 L1095.0 864.9 L1098.3 865.5 L1101.7 866.0 L1105.0 865.8 L1108.3 866.7 L1111.3 868.0 L1114.3 868.8 L1117.3 869.9 L1120.3 870.6 L1123.3 871.7 L1126.7 872.2 L1130.0 872.8 L1133.3 873.1 L1136.7 873.3 L1139.8 874.8 L1142.8 875.1 L1145.8 876.5 L1148.9 878.0 L1152.0 879.5 L1155.0 880.5 L1158.9 879.2 L1162.8 878.7 L1166.7 877.5 L1170.8 880.2 L1175.0 882.5 L1178.9 883.4 L1182.8 885.3 L1186.7 886.7 L1190.0 887.0 L1193.3 887.5 L1196.7 888.2 L1200.0 889.1 L1203.3 890.0 L1206.7 889.7 L1210.0 890.2 L1214.7 891.0 L1217.8 892.1 L1221.0 894.0 L1224.1 894.2 L1227.2 895.6 L1230.3 896.4 L1233.4 896.4 L1236.5 896.8 L1239.7 896.9 L1242.8 896.9 L1246.3 897.6 L1249.8 899.5 L1253.4 899.5 L1256.9 901.1 L1260.8 901.8 L1264.7 902.7 L1268.2 902.4 L1271.8 902.6 L1275.3 902.2 L1278.8 902.7 L1283.5 901.6 L1286.9 903.3 L1290.3 904.1 L1293.7 905.1 L1297.0 907.1 L1300.4 907.9 L1303.8 909.7 L1306.9 910.2 L1310.0 910.4 L1313.2 911.2 L1316.3 912.1 L1319.4 912.0 L1322.5 913.7 L1325.7 914.6 L1328.8 916.0 L1332.4 916.9 L1336.1 917.2 L1339.7 917.5 L1342.8 918.6 L1346.0 919.7 L1349.1 921.4 L1352.7 920.2 L1356.4 918.9 L1360.0 917.5 L1364.0 918.0 L1367.9 917.5 L1371.0 918.6 L1374.2 918.6 L1377.3 919.0 L1380.9 921.0 L1384.6 923.9 L1388.2 925.6 L1391.7 925.3 L1395.2 925.8 L1398.8 926.7 L1402.3 926.9 L1405.4 927.3 L1408.5 927.1 L1411.7 928.0 L1414.8 928.1 L1418.3 929.6 L1421.8 930.1 L1425.4 931.2 L1428.9 932.3 L1432.2 932.0 L1435.6 932.0 L1438.9 932.9 L1442.3 932.2 L1445.6 932.9 L1449.0 932.8 L1452.3 932.3 L1455.4 931.3 L1458.6 930.0 L1461.7 931.2 L1464.8 933.5 L1467.9 934.4 L1471.4 935.7 L1475.0 936.9 L1478.5 938.2 L1482.0 939.7 L1485.1 940.9 L1488.2 940.9 L1491.4 941.3 L1494.5 942.2 L1498.1 942.2 L1501.7 941.8 L1505.2 942.5 L1508.8 942.4 L1512.6 944.2 L1516.4 946.2 L1519.7 945.7 L1523.0 946.0 L1526.3 945.4 L1530.1 945.9 L1533.9 945.6 L1536.9 945.8 L1540.0 947.3 L1543.0 947.8 L1546.0 948.9 L1550.3 949.2 L1554.7 948.4 L1558.0 948.9 L1561.3 948.7 L1565.7 949.6 L1570.0 951.1 L1573.3 951.4 L1576.6 951.9 L1579.9 953.5 L1583.2 953.5 L1586.2 953.4 L1589.2 954.0 L1592.2 954.0 L1595.2 954.2 L1598.5 955.0 L1601.8 955.5 L1605.1 955.9 L1608.4 956.4 L1611.6 956.0 L1614.9 957.1 L1618.2 957.1 L1621.5 956.7 L1624.8 956.9 L1628.0 956.5 L1631.3 956.6 L1634.4 956.1 L1637.4 956.2 L1640.5 955.9 L1643.5 955.6 L1646.6 955.5 L1650.4 956.9 L1654.3 957.7 L1657.6 958.6 L1660.8 958.8 L1664.1 959.9 L1667.4 961.0 L1670.7 961.4 L1674.0 962.4 L1677.2 962.8 L1680.5 962.8 L1683.8 963.2 L1687.1 963.7 L1690.3 965.7 L1693.6 966.3 L1696.9 967.5 L1700.2 967.3 L1703.5 967.0 L1707.9 964.9 L1712.3 962.3 L1715.7 963.0 L1719.0 963.4 L1722.4 964.4 L1725.8 964.5 L1729.7 966.1 L1733.6 967.9 L1737.3 968.3 L1741.1 969.5 L1744.8 969.6 L1747.9 969.3 L1751.1 969.6 L1754.2 970.3 L1757.4 969.5 L1760.5 970.1 L1765.0 969.7 L1769.4 968.5 L1772.8 969.0 L1776.2 969.0 L1779.5 969.1 L1782.9 969.6 L1786.2 969.9 L1789.6 970.0 L1793.0 969.0 L1796.3 969.4 L1800.2 970.3 L1804.1 971.3 L1807.2 971.1 L1810.3 970.7 L1813.4 970.2 L1816.5 970.1 L1819.6 969.5 L1822.7 969.9 L1825.9 970.1 L1829.0 969.0 L1832.1 969.4 L1835.1 969.6 L1838.1 970.8 L1841.1 970.9 L1845.5 972.2 L1850.0 972.7 L1853.8 972.9 L1857.5 972.1 L1861.3 972.7 L1864.7 972.3 L1868.0 971.3 L1871.3 972.4 L1874.7 972.4 L1877.8 973.1 L1881.0 972.8 L1884.1 972.0 L1887.3 973.1 L1890.4 972.7 L1899 973Z" fill="#8a5cc3"/>
<g clip-path="url(#cp)"><path d="M56 463.5H1900M56 501.5H1900M56 520.5H1900M56 539.5H1900M56 577.5H1900M56 596.5H1900M56 615.5H1900M56 653.5H1900M56 672.5H1900M56 691.5H1900M56 729.5H1900M56 748.5H1900M56 767.5H1900M56 805.5H1900M56 824.5H1900M56 844.5H1900M56 882.5H1900M56 901.5H1900M56 920.5H1900M56 958.5H1900" stroke="#b894e6" stroke-width="1.5" fill="none"/><path d="M56 482.5H1900M56 558.5H1900M56 634.5H1900M56 710.5H1900M56 786.5H1900M56 863.5H1900M56 939.5H1900" stroke="#9d76d2" stroke-width="1.5" fill="none"/><path d="M69.5 458V973M107.5 458V973M146.5 458V973M184.5 458V973M223.5 458V973M262.5 458V973M300.5 458V973M339.5 458V973M377.5 458V973M416.5 458V973M454.5 458V973M493.5 458V973M531.5 458V973M570.5 458V973M608.5 458V973M647.5 458V973M685.5 458V973M724.5 458V973M762.5 458V973M801.5 458V973M840.5 458V973M878.5 458V973M917.5 458V973M955.5 458V973M994.5 458V973M1032.5 458V973M1071.5 458V973M1109.5 458V973M1148.5 458V973M1186.5 458V973M1225.5 458V973M1263.5 458V973M1302.5 458V973M1340.5 458V973M1379.5 458V973M1417.5 458V973M1456.5 458V973M1495.5 458V973M1533.5 458V973M1572.5 458V973M1610.5 458V973M1649.5 458V973M1687.5 458V973M1726.5 458V973M1764.5 458V973M1803.5 458V973M1841.5 458V973M1880.5 458V973" stroke="#c6a4ee" stroke-width="1.2" fill="none"/><path d="M88.5 458V973M127.5 458V973M165.5 458V973M204.5 458V973M242.5 458V973M281.5 458V973M319.5 458V973M358.5 458V973M396.5 458V973M435.5 458V973M473.5 458V973M512.5 458V973M551.5 458V973M589.5 458V973M628.5 458V973M666.5 458V973M705.5 458V973M743.5 458V973M782.5 458V973M820.5 458V973M859.5 458V973M897.5 458V973M936.5 458V973M974.5 458V973M1013.5 458V973M1051.5 458V973M1090.5 458V973M1128.5 458V973M1167.5 458V973M1206.5 458V973M1244.5 458V973M1283.5 458V973M1321.5 458V973M1360.5 458V973M1398.5 458V973M1437.5 458V973M1475.5 458V973M1514.5 458V973M1552.5 458V973M1591.5 458V973M1629.5 458V973M1668.5 458V973M1706.5 458V973M1745.5 458V973M1783.5 458V973M1822.5 458V973M1861.5 458V973" stroke="#a57cd6" stroke-width="1.2" fill="none"/></g>
<path d="M56.5 973.5 H1900.5 V458.5" stroke="#111" stroke-width="1.6" fill="none"/><path d="M56.5 458.5 H1900" stroke="#4a4a4a" stroke-width="1.8" fill="none"/><path d="M56.5 458 V973" stroke="#111" stroke-width="1.6" fill="none"/>
</svg><div class="ab" style="left:52px;top:463px;width:4px;height:1px;background:#111"></div><div class="ab" style="left:52px;top:482px;width:4px;height:1px;background:#111"></div><div class="t" style="left:0;width:53px;text-align:right;top:475.6px;font-size:12px;font-weight:bold;color:#111">&#8211;12dB</div><div class="ab" style="left:52px;top:501px;width:4px;height:1px;background:#111"></div><div class="t" style="left:0;width:53px;text-align:right;top:494.7px;font-size:12px;color:#111">&#8211;15dB</div><div class="ab" style="left:52px;top:520px;width:4px;height:1px;background:#111"></div><div class="t" style="left:0;width:53px;text-align:right;top:513.7px;font-size:12px;color:#111">&#8211;18dB</div><div class="ab" style="left:52px;top:539px;width:4px;height:1px;background:#111"></div><div class="t" style="left:0;width:53px;text-align:right;top:532.8px;font-size:12px;color:#111">&#8211;21dB</div><div class="ab" style="left:52px;top:558px;width:4px;height:1px;background:#111"></div><div class="t" style="left:0;width:53px;text-align:right;top:551.8px;font-size:12px;font-weight:bold;color:#111">&#8211;24dB</div><div class="ab" style="left:52px;top:577px;width:4px;height:1px;background:#111"></div><div class="t" style="left:0;width:53px;text-align:right;top:570.9px;font-size:12px;color:#111">&#8211;27dB</div><div class="ab" style="left:52px;top:596px;width:4px;height:1px;background:#111"></div><div class="t" style="left:0;width:53px;text-align:right;top:589.9px;font-size:12px;color:#111">&#8211;30dB</div><div class="ab" style="left:52px;top:615px;width:4px;height:1px;background:#111"></div><div class="t" style="left:0;width:53px;text-align:right;top:609.0px;font-size:12px;color:#111">&#8211;33dB</div><div class="ab" style="left:52px;top:634px;width:4px;height:1px;background:#111"></div><div class="t" style="left:0;width:53px;text-align:right;top:628.0px;font-size:12px;font-weight:bold;color:#111">&#8211;36dB</div><div class="ab" style="left:52px;top:653px;width:4px;height:1px;background:#111"></div><div class="t" style="left:0;width:53px;text-align:right;top:647.1px;font-size:12px;color:#111">&#8211;39dB</div><div class="ab" style="left:52px;top:672px;width:4px;height:1px;background:#111"></div><div class="t" style="left:0;width:53px;text-align:right;top:666.1px;font-size:12px;color:#111">&#8211;42dB</div><div class="ab" style="left:52px;top:691px;width:4px;height:1px;background:#111"></div><div class="t" style="left:0;width:53px;text-align:right;top:685.2px;font-size:12px;color:#111">&#8211;45dB</div><div class="ab" style="left:52px;top:710px;width:4px;height:1px;background:#111"></div><div class="t" style="left:0;width:53px;text-align:right;top:704.2px;font-size:12px;font-weight:bold;color:#111">&#8211;48dB</div><div class="ab" style="left:52px;top:729px;width:4px;height:1px;background:#111"></div><div class="t" style="left:0;width:53px;text-align:right;top:723.2px;font-size:12px;color:#111">&#8211;51dB</div><div class="ab" style="left:52px;top:748px;width:4px;height:1px;background:#111"></div><div class="t" style="left:0;width:53px;text-align:right;top:742.3px;font-size:12px;color:#111">&#8211;54dB</div><div class="ab" style="left:52px;top:767px;width:4px;height:1px;background:#111"></div><div class="t" style="left:0;width:53px;text-align:right;top:761.3px;font-size:12px;color:#111">&#8211;57dB</div><div class="ab" style="left:52px;top:786px;width:4px;height:1px;background:#111"></div><div class="t" style="left:0;width:53px;text-align:right;top:780.4px;font-size:12px;font-weight:bold;color:#111">&#8211;60dB</div><div class="ab" style="left:52px;top:805px;width:4px;height:1px;background:#111"></div><div class="t" style="left:0;width:53px;text-align:right;top:799.4px;font-size:12px;color:#111">&#8211;63dB</div><div class="ab" style="left:52px;top:824px;width:4px;height:1px;background:#111"></div><div class="t" style="left:0;width:53px;text-align:right;top:818.5px;font-size:12px;color:#111">&#8211;66dB</div><div class="ab" style="left:52px;top:844px;width:4px;height:1px;background:#111"></div><div class="t" style="left:0;width:53px;text-align:right;top:837.5px;font-size:12px;color:#111">&#8211;69dB</div><div class="ab" style="left:52px;top:863px;width:4px;height:1px;background:#111"></div><div class="t" style="left:0;width:53px;text-align:right;top:856.6px;font-size:12px;font-weight:bold;color:#111">&#8211;72dB</div><div class="ab" style="left:52px;top:882px;width:4px;height:1px;background:#111"></div><div class="t" style="left:0;width:53px;text-align:right;top:875.6px;font-size:12px;color:#111">&#8211;75dB</div><div class="ab" style="left:52px;top:901px;width:4px;height:1px;background:#111"></div><div class="t" style="left:0;width:53px;text-align:right;top:894.7px;font-size:12px;color:#111">&#8211;78dB</div><div class="ab" style="left:52px;top:920px;width:4px;height:1px;background:#111"></div><div class="t" style="left:0;width:53px;text-align:right;top:913.7px;font-size:12px;color:#111">&#8211;81dB</div><div class="ab" style="left:52px;top:939px;width:4px;height:1px;background:#111"></div><div class="t" style="left:0;width:53px;text-align:right;top:932.8px;font-size:12px;font-weight:bold;color:#111">&#8211;84dB</div><div class="ab" style="left:52px;top:958px;width:4px;height:1px;background:#111"></div><div class="t" style="left:0;width:53px;text-align:right;top:951.8px;font-size:12px;color:#111">&#8211;87dB</div><div class="ab" style="left:69px;top:974px;width:1px;height:6px;background:#111"></div><div class="ab" style="left:88px;top:974px;width:1px;height:6px;background:#111"></div><div class="ab" style="left:107px;top:974px;width:1px;height:6px;background:#111"></div><div class="ab" style="left:127px;top:974px;width:1px;height:6px;background:#111"></div><div class="ab" style="left:146px;top:974px;width:1px;height:6px;background:#111"></div><div class="ab" style="left:165px;top:974px;width:1px;height:6px;background:#111"></div><div class="ab" style="left:184px;top:974px;width:1px;height:6px;background:#111"></div><div class="ab" style="left:204px;top:974px;width:1px;height:6px;background:#111"></div><div class="ab" style="left:223px;top:974px;width:1px;height:6px;background:#111"></div><div class="ab" style="left:242px;top:974px;width:1px;height:6px;background:#111"></div><div class="ab" style="left:262px;top:974px;width:1px;height:6px;background:#111"></div><div class="ab" style="left:281px;top:974px;width:1px;height:6px;background:#111"></div><div class="ab" style="left:300px;top:974px;width:1px;height:6px;background:#111"></div><div class="ab" style="left:319px;top:974px;width:1px;height:6px;background:#111"></div><div class="ab" style="left:339px;top:974px;width:1px;height:6px;background:#111"></div><div class="ab" style="left:358px;top:974px;width:1px;height:6px;background:#111"></div><div class="ab" style="left:377px;top:974px;width:1px;height:6px;background:#111"></div><div class="ab" style="left:396px;top:974px;width:1px;height:6px;background:#111"></div><div class="ab" style="left:416px;top:974px;width:1px;height:6px;background:#111"></div><div class="ab" style="left:435px;top:974px;width:1px;height:6px;background:#111"></div><div class="ab" style="left:454px;top:974px;width:1px;height:6px;background:#111"></div><div class="ab" style="left:473px;top:974px;width:1px;height:6px;background:#111"></div><div class="ab" style="left:493px;top:974px;width:1px;height:6px;background:#111"></div><div class="ab" style="left:512px;top:974px;width:1px;height:6px;background:#111"></div><div class="ab" style="left:531px;top:974px;width:1px;height:6px;background:#111"></div><div class="ab" style="left:551px;top:974px;width:1px;height:6px;background:#111"></div><div class="ab" style="left:570px;top:974px;width:1px;height:6px;background:#111"></div><div class="ab" style="left:589px;top:974px;width:1px;height:6px;background:#111"></div><div class="ab" style="left:608px;top:974px;width:1px;height:6px;background:#111"></div><div class="ab" style="left:628px;top:974px;width:1px;height:6px;background:#111"></div><div class="ab" style="left:647px;top:974px;width:1px;height:6px;background:#111"></div><div class="ab" style="left:666px;top:974px;width:1px;height:6px;background:#111"></div><div class="ab" style="left:685px;top:974px;width:1px;height:6px;background:#111"></div><div class="ab" style="left:705px;top:974px;width:1px;height:6px;background:#111"></div><div class="ab" style="left:724px;top:974px;width:1px;height:6px;background:#111"></div><div class="ab" style="left:743px;top:974px;width:1px;height:6px;background:#111"></div><div class="ab" style="left:762px;top:974px;width:1px;height:6px;background:#111"></div><div class="ab" style="left:782px;top:974px;width:1px;height:6px;background:#111"></div><div class="ab" style="left:801px;top:974px;width:1px;height:6px;background:#111"></div><div class="ab" style="left:820px;top:974px;width:1px;height:6px;background:#111"></div><div class="ab" style="left:840px;top:974px;width:1px;height:6px;background:#111"></div><div class="ab" style="left:859px;top:974px;width:1px;height:6px;background:#111"></div><div class="ab" style="left:878px;top:974px;width:1px;height:6px;background:#111"></div><div class="ab" style="left:897px;top:974px;width:1px;height:6px;background:#111"></div><div class="ab" style="left:917px;top:974px;width:1px;height:6px;background:#111"></div><div class="ab" style="left:936px;top:974px;width:1px;height:6px;background:#111"></div><div class="ab" style="left:955px;top:974px;width:1px;height:6px;background:#111"></div><div class="ab" style="left:974px;top:974px;width:1px;height:6px;background:#111"></div><div class="ab" style="left:994px;top:974px;width:1px;height:6px;background:#111"></div><div class="ab" style="left:1013px;top:974px;width:1px;height:6px;background:#111"></div><div class="ab" style="left:1032px;top:974px;width:1px;height:6px;background:#111"></div><div class="ab" style="left:1051px;top:974px;width:1px;height:6px;background:#111"></div><div class="ab" style="left:1071px;top:974px;width:1px;height:6px;background:#111"></div><div class="ab" style="left:1090px;top:974px;width:1px;height:6px;background:#111"></div><div class="ab" style="left:1109px;top:974px;width:1px;height:6px;background:#111"></div><div class="ab" style="left:1128px;top:974px;width:1px;height:6px;background:#111"></div><div class="ab" style="left:1148px;top:974px;width:1px;height:6px;background:#111"></div><div class="ab" style="left:1167px;top:974px;width:1px;height:6px;background:#111"></div><div class="ab" style="left:1186px;top:974px;width:1px;height:6px;background:#111"></div><div class="ab" style="left:1206px;top:974px;width:1px;height:6px;background:#111"></div><div class="ab" style="left:1225px;top:974px;width:1px;height:6px;background:#111"></div><div class="ab" style="left:1244px;top:974px;width:1px;height:6px;background:#111"></div><div class="ab" style="left:1263px;top:974px;width:1px;height:6px;background:#111"></div><div class="ab" style="left:1283px;top:974px;width:1px;height:6px;background:#111"></div><div class="ab" style="left:1302px;top:974px;width:1px;height:6px;background:#111"></div><div class="ab" style="left:1321px;top:974px;width:1px;height:6px;background:#111"></div><div class="ab" style="left:1340px;top:974px;width:1px;height:6px;background:#111"></div><div class="ab" style="left:1360px;top:974px;width:1px;height:6px;background:#111"></div><div class="ab" style="left:1379px;top:974px;width:1px;height:6px;background:#111"></div><div class="ab" style="left:1398px;top:974px;width:1px;height:6px;background:#111"></div><div class="ab" style="left:1417px;top:974px;width:1px;height:6px;background:#111"></div><div class="ab" style="left:1437px;top:974px;width:1px;height:6px;background:#111"></div><div class="ab" style="left:1456px;top:974px;width:1px;height:6px;background:#111"></div><div class="ab" style="left:1475px;top:974px;width:1px;height:6px;background:#111"></div><div class="ab" style="left:1495px;top:974px;width:1px;height:6px;background:#111"></div><div class="ab" style="left:1514px;top:974px;width:1px;height:6px;background:#111"></div><div class="ab" style="left:1533px;top:974px;width:1px;height:6px;background:#111"></div><div class="ab" style="left:1552px;top:974px;width:1px;height:6px;background:#111"></div><div class="ab" style="left:1572px;top:974px;width:1px;height:6px;background:#111"></div><div class="ab" style="left:1591px;top:974px;width:1px;height:6px;background:#111"></div><div class="ab" style="left:1610px;top:974px;width:1px;height:6px;background:#111"></div><div class="ab" style="left:1629px;top:974px;width:1px;height:6px;background:#111"></div><div class="ab" style="left:1649px;top:974px;width:1px;height:6px;background:#111"></div><div class="ab" style="left:1668px;top:974px;width:1px;height:6px;background:#111"></div><div class="ab" style="left:1687px;top:974px;width:1px;height:6px;background:#111"></div><div class="ab" style="left:1706px;top:974px;width:1px;height:6px;background:#111"></div><div class="ab" style="left:1726px;top:974px;width:1px;height:6px;background:#111"></div><div class="ab" style="left:1745px;top:974px;width:1px;height:6px;background:#111"></div><div class="ab" style="left:1764px;top:974px;width:1px;height:6px;background:#111"></div><div class="ab" style="left:1783px;top:974px;width:1px;height:6px;background:#111"></div><div class="ab" style="left:1803px;top:974px;width:1px;height:6px;background:#111"></div><div class="ab" style="left:1822px;top:974px;width:1px;height:6px;background:#111"></div><div class="ab" style="left:1841px;top:974px;width:1px;height:6px;background:#111"></div><div class="ab" style="left:1861px;top:974px;width:1px;height:6px;background:#111"></div><div class="ab" style="left:1880px;top:974px;width:1px;height:6px;background:#111"></div><div class="t" style="left:48.7px;width:80px;text-align:center;top:979px;font-size:12px;letter-spacing:0.9px;font-weight:bold;color:#111">1000Hz</div><div class="t" style="left:125.7px;width:80px;text-align:center;top:979px;font-size:12px;letter-spacing:0.9px;font-weight:bold;color:#111">3000Hz</div><div class="t" style="left:202.8px;width:80px;text-align:center;top:979px;font-size:12px;letter-spacing:0.9px;font-weight:bold;color:#111">5000Hz</div><div class="t" style="left:279.8px;width:80px;text-align:center;top:979px;font-size:12px;letter-spacing:0.9px;font-weight:bold;color:#111">7000Hz</div><div class="t" style="left:356.9px;width:80px;text-align:center;top:979px;font-size:12px;letter-spacing:0.9px;font-weight:bold;color:#111">9000Hz</div><div class="t" style="left:434.0px;width:80px;text-align:center;top:979px;font-size:12px;letter-spacing:0.9px;font-weight:bold;color:#111">11000Hz</div><div class="t" style="left:511.0px;width:80px;text-align:center;top:979px;font-size:12px;letter-spacing:0.9px;font-weight:bold;color:#111">13000Hz</div><div class="t" style="left:588.1px;width:80px;text-align:center;top:979px;font-size:12px;letter-spacing:0.9px;font-weight:bold;color:#111">15000Hz</div><div class="t" style="left:665.1px;width:80px;text-align:center;top:979px;font-size:12px;letter-spacing:0.9px;font-weight:bold;color:#111">17000Hz</div><div class="t" style="left:742.2px;width:80px;text-align:center;top:979px;font-size:12px;letter-spacing:0.9px;font-weight:bold;color:#111">19000Hz</div><div class="t" style="left:819.3px;width:80px;text-align:center;top:979px;font-size:12px;letter-spacing:0.9px;font-weight:bold;color:#111">21000Hz</div><div class="t" style="left:896.3px;width:80px;text-align:center;top:979px;font-size:12px;letter-spacing:0.9px;font-weight:bold;color:#111">23000Hz</div><div class="t" style="left:973.4px;width:80px;text-align:center;top:979px;font-size:12px;letter-spacing:0.9px;font-weight:bold;color:#111">25000Hz</div><div class="t" style="left:1050.4px;width:80px;text-align:center;top:979px;font-size:12px;letter-spacing:0.9px;font-weight:bold;color:#111">27000Hz</div><div class="t" style="left:1127.5px;width:80px;text-align:center;top:979px;font-size:12px;letter-spacing:0.9px;font-weight:bold;color:#111">29000Hz</div><div class="t" style="left:1204.6px;width:80px;text-align:center;top:979px;font-size:12px;letter-spacing:0.9px;font-weight:bold;color:#111">31000Hz</div><div class="t" style="left:1281.6px;width:80px;text-align:center;top:979px;font-size:12px;letter-spacing:0.9px;font-weight:bold;color:#111">33000Hz</div><div class="t" style="left:1358.7px;width:80px;text-align:center;top:979px;font-size:12px;letter-spacing:0.9px;font-weight:bold;color:#111">35000Hz</div><div class="t" style="left:1435.7px;width:80px;text-align:center;top:979px;font-size:12px;letter-spacing:0.9px;font-weight:bold;color:#111">37000Hz</div><div class="t" style="left:1512.8px;width:80px;text-align:center;top:979px;font-size:12px;letter-spacing:0.9px;font-weight:bold;color:#111">39000Hz</div><div class="t" style="left:1589.9px;width:80px;text-align:center;top:979px;font-size:12px;letter-spacing:0.9px;font-weight:bold;color:#111">41000Hz</div><div class="t" style="left:1666.9px;width:80px;text-align:center;top:979px;font-size:12px;letter-spacing:0.9px;font-weight:bold;color:#111">43000Hz</div><div class="t" style="left:1744.0px;width:80px;text-align:center;top:979px;font-size:12px;letter-spacing:0.9px;font-weight:bold;color:#111">45000Hz</div><div class="t" style="left:1821.0px;width:80px;text-align:center;top:979px;font-size:12px;letter-spacing:0.9px;font-weight:bold;color:#111">47000Hz</div><div class="t" style="left:61px;top:1005px;font-size:14px;letter-spacing:0.1px;color:#222">Cursor: 17465 Hz (C#10) = &#8211;52 dB</div><div class="t" style="left:299px;top:1005px;font-size:14px;letter-spacing:0.1px;color:#222">Peak: 17722 Hz (C#10) = &#8211;51.6 dB</div><div class="t" style="left:14px;top:1038px;font-size:14px;letter-spacing:0.3px;color:#222">Algorithm:</div><div class="t" style="left:14px;top:1063px;font-size:14px;letter-spacing:0.3px;color:#222">Function:</div><div class="t" style="left:313px;top:1038px;font-size:14px;letter-spacing:0.3px;color:#222">Size:</div><div class="t" style="left:313px;top:1063px;font-size:14px;letter-spacing:0.3px;color:#222">Axis:</div><div class="ab" style="left:93px;top:1035px;width:209px;height:20px;border-radius:5px;border:1px solid #8e8e8e;background:linear-gradient(#ffffff,#eeeeee 50%,#e0e0e0 51%,#f4f4f4);overflow:hidden;box-shadow:0 1px 1px rgba(0,0,0,.15)"><div class="t" style="left:7px;top:2px;font-size:14px;color:#111">Spectrum</div><div class="ab" style="right:0;top:0;width:20px;height:18px;background:linear-gradient(#d6e6fa,#88b4ee 50%,#6ea0e6 51%,#b4d6fa)"></div><svg class="ab" style="right:6px;top:3px" width="8" height="13"><path d="M0.5 5 L4 1 L7.5 5Z M0.5 8 L4 12 L7.5 8Z" fill="#111"/></svg></div><div class="ab" style="left:93px;top:1060px;width:209px;height:20px;border-radius:5px;border:1px solid #8e8e8e;background:linear-gradient(#ffffff,#eeeeee 50%,#e0e0e0 51%,#f4f4f4);overflow:hidden;box-shadow:0 1px 1px rgba(0,0,0,.15)"><div class="t" style="left:7px;top:2px;font-size:14px;color:#111">Hanning window</div><div class="ab" style="right:0;top:0;width:20px;height:18px;background:linear-gradient(#d6e6fa,#88b4ee 50%,#6ea0e6 51%,#b4d6fa)"></div><svg class="ab" style="right:6px;top:3px" width="8" height="13"><path d="M0.5 5 L4 1 L7.5 5Z M0.5 8 L4 12 L7.5 8Z" fill="#111"/></svg></div><div class="ab" style="left:356px;top:1035px;width:151px;height:20px;border-radius:5px;border:1px solid #8e8e8e;background:linear-gradient(#ffffff,#eeeeee 50%,#e0e0e0 51%,#f4f4f4);overflow:hidden;box-shadow:0 1px 1px rgba(0,0,0,.15)"><div class="t" style="left:7px;top:2px;font-size:14px;color:#111">512</div><div class="ab" style="right:0;top:0;width:20px;height:18px;background:linear-gradient(#d6e6fa,#88b4ee 50%,#6ea0e6 51%,#b4d6fa)"></div><svg class="ab" style="right:6px;top:3px" width="8" height="13"><path d="M0.5 5 L4 1 L7.5 5Z M0.5 8 L4 12 L7.5 8Z" fill="#111"/></svg></div><div class="ab" style="left:356px;top:1060px;width:151px;height:20px;border-radius:5px;border:1px solid #8e8e8e;background:linear-gradient(#ffffff,#eeeeee 50%,#e0e0e0 51%,#f4f4f4);overflow:hidden;box-shadow:0 1px 1px rgba(0,0,0,.15)"><div class="t" style="left:7px;top:2px;font-size:14px;color:#111">Linear frequency</div><div class="ab" style="right:0;top:0;width:20px;height:18px;background:linear-gradient(#d6e6fa,#88b4ee 50%,#6ea0e6 51%,#b4d6fa)"></div><svg class="ab" style="right:6px;top:3px" width="8" height="13"><path d="M0.5 5 L4 1 L7.5 5Z M0.5 8 L4 12 L7.5 8Z" fill="#111"/></svg></div><div class="ab" style="left:528px;top:1035px;width:78px;height:20px;border-radius:10px;border:1px solid #8a8a8a;background:linear-gradient(#ffffff,#f2f2f2 50%,#e4e4e4 51%,#f8f8f8);box-shadow:0 1px 1px rgba(0,0,0,.18)"><div class="t" style="left:0;width:100%;text-align:center;top:2px;font-size:14px;letter-spacing:0.2px;color:#111">Export...</div></div><div class="ab" style="left:621px;top:1035px;width:69px;height:20px;border-radius:10px;border:1px solid #8a8a8a;background:linear-gradient(#ffffff,#f2f2f2 50%,#e4e4e4 51%,#f8f8f8);box-shadow:0 1px 1px rgba(0,0,0,.18)"><div class="t" style="left:0;width:100%;text-align:center;top:2px;font-size:14px;letter-spacing:0.2px;color:#111">Replot</div></div><div class="ab" style="left:528px;top:1060px;width:78px;height:20px;border-radius:10px;border:1px solid #8a8a8a;background:linear-gradient(#ffffff,#f2f2f2 50%,#e4e4e4 51%,#f8f8f8);box-shadow:0 1px 1px rgba(0,0,0,.18)"><div class="t" style="left:0;width:100%;text-align:center;top:2px;font-size:14px;letter-spacing:0.2px;color:#111">Close</div></div><div class="ab" style="left:630px;top:1064px;width:14px;height:14px;border-radius:2px;border:1px solid #5a7ab8;background:linear-gradient(#cfe2fa,#7ea8e8)"></div><svg class="ab" style="left:630px;top:1060px" width="18" height="18"><path d="M3 10 L7 15 L15 2" stroke="#112" stroke-width="2.2" fill="none"/></svg><div class="t" style="left:649px;top:1064px;font-size:14px;letter-spacing:0.2px;color:#222">Grids</div><div class="ab" style="left:3px;top:1085px;width:1902px;height:1px;background:#c8c8c8"></div><svg class="ab" style="left:1890px;top:1088px" width="13" height="13"><path d="M12 3 L3 12 M12 7 L7 12 M12 10 L10 12" stroke="#999" stroke-width="1"/></svg><div class="ab" style="left:0;top:1103px;width:1919px;height:17px;background:linear-gradient(#c4c4c4,#b4b4b4 60%,#a8a8a8)"></div><div class="ab" style="left:137px;top:1103px;width:1737px;height:17px;background:linear-gradient(#bdbdbd,#dedede 50%,#cfcfcf)"></div><div class="ab" style="left:142px;top:1104px;width:1389px;height:14px;border-radius:7px;border:1px solid #777;background:linear-gradient(#dcdcdc,#f6f6f6 40%,#cccccc 60%,#d8d8d8)"></div><div class="ab" style="left:1868px;top:1103px;width:35px;height:17px;background:linear-gradient(#c8c8c8,#d8d8d8 50%,#c4c4c4)"></div><div class="ab" style="left:1903px;top:1103px;width:16px;height:17px;background:linear-gradient(90deg,#d8d8d8,#e8e8e8)"></div><svg class="ab" style="left:1872px;top:1106px" width="30" height="11"><path d="M9 1.5 L4 5.5 L9 9.5Z M21 1.5 L26 5.5 L21 9.5Z" fill="#333"/><path d="M15 0 V11" stroke="#aaa"/></svg><div class="ab" style="left:0;top:1120px;width:1919px;height:1px;background:#8e8e8e"></div><div class="ab" style="left:0;top:1121px;width:1919px;height:55px;background:linear-gradient(#e2e2e2,#ececec 30%,#ececec)"></div><div class="ab" style="left:0;top:1176px;width:1919px;height:1px;background:#a8a8a8"></div><div class="ab" style="left:0;top:1177px;width:1919px;height:18px;background:#ececec"></div><div class="ab" style="left:0;top:1195px;width:1919px;height:4px;background:#3c3c3c"></div><svg class="ab" style="left:1900px;top:1180px" width="16" height="14"><path d="M15 2 L3 14 M15 6 L7 14 M15 10 L11 14" stroke="#999" stroke-width="1"/></svg><div class="ab" style="left:4px;top:1125px;width:6px;height:1px;background:#9a9a9a"></div><div class="ab" style="left:4px;top:1129px;width:6px;height:1px;background:#9a9a9a"></div><div class="ab" style="left:4px;top:1133px;width:6px;height:1px;background:#9a9a9a"></div><div class="ab" style="left:4px;top:1137px;width:6px;height:1px;background:#9a9a9a"></div><div class="ab" style="left:4px;top:1141px;width:6px;height:1px;background:#9a9a9a"></div><div class="ab" style="left:4px;top:1145px;width:6px;height:1px;background:#9a9a9a"></div><div class="ab" style="left:4px;top:1149px;width:6px;height:1px;background:#9a9a9a"></div><div class="ab" style="left:4px;top:1153px;width:6px;height:1px;background:#9a9a9a"></div><div class="ab" style="left:4px;top:1157px;width:6px;height:1px;background:#9a9a9a"></div><div class="ab" style="left:4px;top:1161px;width:6px;height:1px;background:#9a9a9a"></div><div class="ab" style="left:4px;top:1165px;width:6px;height:1px;background:#9a9a9a"></div><div class="ab" style="left:4px;top:1169px;width:6px;height:1px;background:#9a9a9a"></div><div class="t" style="left:12px;top:1128px;font-size:13px;letter-spacing:0.35px;color:#444">Project Rate (Hz):</div><div class="ab" style="left:15px;top:1147px;width:52px;height:21px;background:#fff;border:1px solid #b4b4b4;border-top-color:#909090"><div class="t" style="left:2px;top:3px;font-size:14px;color:#111">96000</div></div><div class="ab" style="left:70px;top:1147px;width:20px;height:21px;border-radius:4px;border:1px solid #b8b8b8;background:linear-gradient(#fafafa,#e4e4e4)"><svg class="ab" style="left:5px;top:3px" width="9" height="14"><path d="M1 5 L4.5 1 L8 5Z M1 9 L4.5 13 L8 9Z" fill="#777"/></svg></div><div class="ab" style="left:127px;top:1144px;width:1px;height:27px;background:#888"></div><div class="ab" style="left:136px;top:1150px;width:13px;height:14px;border:1px solid #b4b4b4;background:#f6f6f6"></div><svg class="ab" style="left:136px;top:1146px" width="17" height="18"><path d="M3 10 L7 15 L14 2" stroke="#8a8a8a" stroke-width="2" fill="none"/></svg><div class="t" style="left:154px;top:1151px;font-size:13px;letter-spacing:0.35px;color:#555">Snap To</div><div class="t" style="left:211px;top:1128px;font-size:13px;letter-spacing:0.35px;color:#444">Selection Start:</div><div class="ab" style="left:372px;top:1127px;width:13px;height:13px;border-radius:50%;border:1px solid #a8a8a8;background:radial-gradient(#fff,#e4e4e4)"><div class="ab" style="left:4px;top:4px;width:3px;height:3px;border-radius:50%;background:#555"></div></div><div class="t" style="left:390px;top:1128px;font-size:13px;letter-spacing:0.35px;color:#444">End</div><div class="ab" style="left:420px;top:1127px;width:13px;height:13px;border-radius:50%;border:1px solid #a8a8a8;background:radial-gradient(#fff,#e4e4e4)"></div><div class="t" style="left:439px;top:1128px;font-size:13px;letter-spacing:0.35px;color:#444">Length</div><div class="t" style="left:536px;top:1128px;font-size:13px;letter-spacing:0.35px;color:#444">Audio Position:</div><div class="ab" style="left:529px;top:1144px;width:1px;height:27px;background:#888"></div><div class="ab" style="left:211px;top:1147px;width:153px;height:21px;background:#c7c7d6;border:1px solid #e8e8e8;border-bottom-color:#fff;box-shadow:inset 0 0 0 1px #b8b8c4"><div class="t" style="left:2px;top:2px;font-family:'Liberation Serif',serif;font-size:18px;color:#3535c0">00</div><div class="t" style="left:25.5px;top:5px;font-family:'Liberation Serif',serif;font-size:14px;color:#222">h</div><div class="t" style="left:37.5px;top:2px;font-family:'Liberation Serif',serif;font-size:18px;color:#3535c0">00</div><div class="t" style="left:60px;top:5px;font-family:'Liberation Serif',serif;font-size:14px;color:#222">m</div><div class="t" style="left:76.5px;top:2px;font-family:'Liberation Serif',serif;font-size:18px;color:#3535c0">00.000</div><div class="t" style="left:132px;top:5px;font-family:'Liberation Serif',serif;font-size:14px;color:#222">s</div><div class="ab" style="right:0;top:0;width:9px;height:19px;background:#dcdce4;border-left:1px solid #aaa"></div><svg class="ab" style="right:1px;top:8px" width="8" height="6"><path d="M0 0 H8 L4 5Z" fill="#111"/></svg></div><div class="ab" style="left:370px;top:1147px;width:153px;height:21px;background:#c7c7d6;border:1px solid #e8e8e8;border-bottom-color:#fff;box-shadow:inset 0 0 0 1px #b8b8c4"><div class="t" style="left:2px;top:2px;font-family:'Liberation Serif',serif;font-size:18px;color:#3535c0">00</div><div class="t" style="left:25.5px;top:5px;font-family:'Liberation Serif',serif;font-size:14px;color:#222">h</div><div class="t" style="left:37.5px;top:2px;font-family:'Liberation Serif',serif;font-size:18px;color:#3535c0">06</div><div class="t" style="left:60px;top:5px;font-family:'Liberation Serif',serif;font-size:14px;color:#222">m</div><div class="t" style="left:76.5px;top:2px;font-family:'Liberation Serif',serif;font-size:18px;color:#3535c0">49.650</div><div class="t" style="left:132px;top:5px;font-family:'Liberation Serif',serif;font-size:14px;color:#222">s</div><div class="ab" style="right:0;top:0;width:9px;height:19px;background:#dcdce4;border-left:1px solid #aaa"></div><svg class="ab" style="right:1px;top:8px" width="8" height="6"><path d="M0 0 H8 L4 5Z" fill="#111"/></svg></div><div class="ab" style="left:536px;top:1147px;width:152px;height:21px;background:#c7c7d6;border:1px solid #e8e8e8;border-bottom-color:#fff;box-shadow:inset 0 0 0 1px #b8b8c4"><div class="t" style="left:2px;top:2px;font-family:'Liberation Serif',serif;font-size:18px;color:#3535c0">00</div><div class="t" style="left:25.5px;top:5px;font-family:'Liberation Serif',serif;font-size:14px;color:#222">h</div><div class="t" style="left:37.5px;top:2px;font-family:'Liberation Serif',serif;font-size:18px;color:#3535c0">00</div><div class="t" style="left:60px;top:5px;font-family:'Liberation Serif',serif;font-size:14px;color:#222">m</div><div class="t" style="left:76.5px;top:2px;font-family:'Liberation Serif',serif;font-size:18px;color:#3535c0">00.000</div><div class="t" style="left:132px;top:5px;font-family:'Liberation Serif',serif;font-size:14px;color:#222">s</div><div class="ab" style="right:0;top:0;width:9px;height:19px;background:#dcdce4;border-left:1px solid #aaa"></div><svg class="ab" style="right:1px;top:8px" width="8" height="6"><path d="M0 0 H8 L4 5Z" fill="#111"/></svg></div></body></html>
